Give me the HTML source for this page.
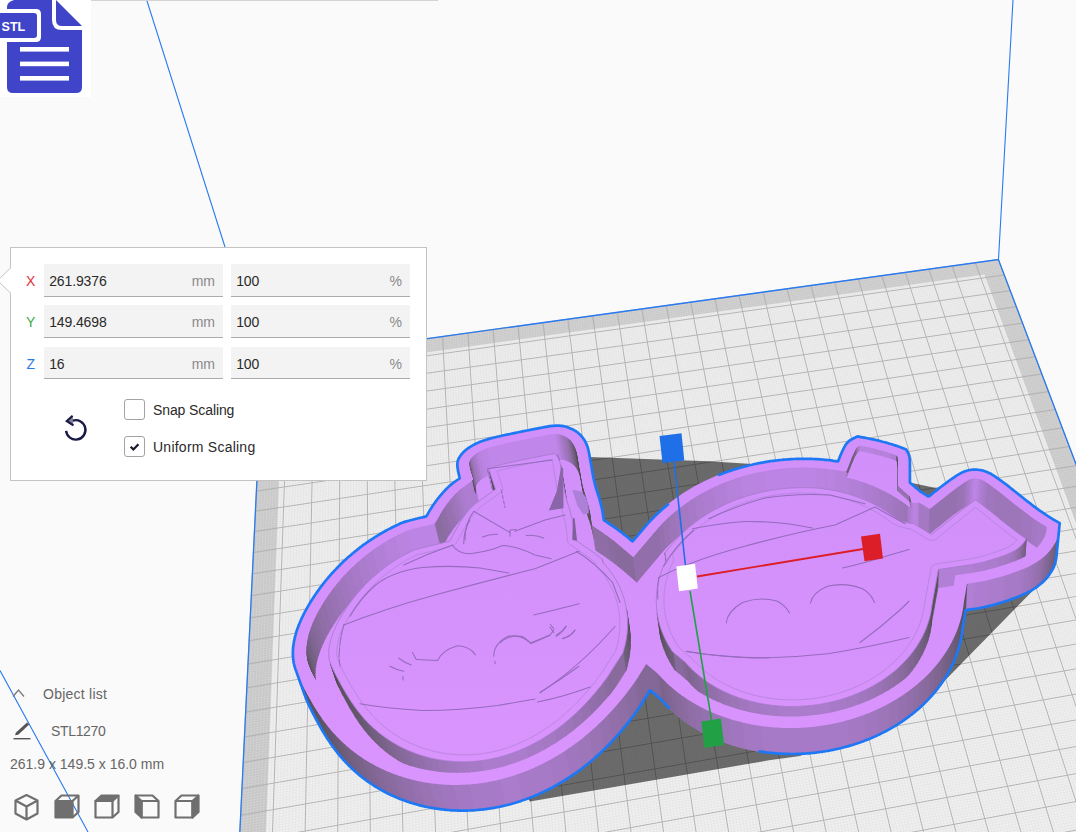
<!DOCTYPE html>
<html><head><meta charset="utf-8"><title>Cura</title>
<style>
html,body{margin:0;padding:0;}
body{width:1076px;height:832px;overflow:hidden;background:#fafafa;position:relative;font-family:"Liberation Sans",sans-serif;font-size:14px;color:#3c3c3c;}
#scene{position:absolute;left:0;top:0;}
.abs{position:absolute;}
#icon{position:absolute;left:0;top:0;width:91px;height:97px;background:#fff;}
#topline{position:absolute;left:91px;top:0;width:347px;height:1px;background:#d4d4d4;}
#panel{position:absolute;left:10px;top:247px;width:415px;height:232px;background:#fff;border:1px solid #c3c3c3;}
#parrow{position:absolute;left:2px;top:272px;width:0;height:0;}
.fld{position:absolute;height:31.6px;width:179px;background:#f3f3f3;border-bottom:1px solid #ababab;}
.fld span{position:absolute;top:0;line-height:34px;white-space:nowrap;}
.fld .v{left:5.2px;color:#2a2a2a;letter-spacing:-0.12px;}
.fld .u{right:8px;color:#8a8a8a;}
.ax{position:absolute;width:20px;text-align:center;line-height:34px;left:20.7px;}
.cb{position:absolute;left:124px;width:19px;height:19px;border:1px solid #a3a3a3;border-radius:3px;background:#fff;}
.cbl{position:absolute;left:153px;line-height:20px;white-space:nowrap;color:#2a2a2a;}
.bl{position:absolute;white-space:nowrap;color:#666;line-height:20px;}
</style></head><body>
<svg id="scene" width="1076" height="832" viewBox="0 0 1076 832">
<polygon points="262.7,361.5 998.4,259.5 1236.9,888.6 227.4,1087.8" fill="#c6c6c6"/>
<polygon points="283.0,372.5 984.5,274.4 1203.8,870.7 257.7,1055.3" fill="#f0f0f0"/>
<path d="M265.3,361.1L231.1,1087.1M267.9,360.8L234.8,1086.4M270.5,360.4L238.4,1085.7M273.1,360.1L242.1,1084.9M275.7,359.7L245.7,1084.2M278.3,359.3L249.4,1083.5M280.9,359.0L253.0,1082.8M283.5,358.6L256.7,1082.1M286.1,358.3L260.3,1081.3M291.3,357.5L267.6,1079.9M293.9,357.2L271.3,1079.2M296.5,356.8L274.9,1078.5M299.1,356.5L278.5,1077.7M301.7,356.1L282.2,1077.0M304.3,355.7L285.8,1076.3M306.9,355.4L289.4,1075.6M309.5,355.0L293.1,1074.9M312.0,354.7L296.7,1074.2M317.2,353.9L303.9,1072.7M319.8,353.6L307.6,1072.0M322.4,353.2L311.2,1071.3M325.0,352.9L314.8,1070.6M327.5,352.5L318.4,1069.9M330.1,352.1L322.0,1069.2M332.7,351.8L325.6,1068.5M335.3,351.4L329.2,1067.7M337.9,351.1L332.8,1067.0M343.0,350.4L340.0,1065.6M345.6,350.0L343.6,1064.9M348.2,349.6L347.2,1064.2M350.7,349.3L350.8,1063.5M353.3,348.9L354.4,1062.8M355.9,348.6L358.0,1062.1M358.4,348.2L361.6,1061.4M361.0,347.9L365.2,1060.6M363.6,347.5L368.8,1059.9M368.7,346.8L375.9,1058.5M371.3,346.4L379.5,1057.8M373.8,346.1L383.1,1057.1M376.4,345.7L386.6,1056.4M379.0,345.4L390.2,1055.7M381.5,345.0L393.8,1055.0M384.1,344.7L397.4,1054.3M386.6,344.3L400.9,1053.6M389.2,344.0L404.5,1052.9M394.3,343.3L411.6,1051.5M396.8,342.9L415.2,1050.8M399.4,342.5L418.7,1050.1M402.0,342.2L422.3,1049.4M404.5,341.8L425.8,1048.7M407.0,341.5L429.4,1048.0M409.6,341.1L432.9,1047.3M412.1,340.8L436.5,1046.6M414.7,340.4L440.0,1045.9M419.8,339.7L447.1,1044.5M422.3,339.4L450.6,1043.8M424.9,339.0L454.1,1043.1M427.4,338.7L457.7,1042.4M429.9,338.3L461.2,1041.7M432.5,338.0L464.7,1041.0M435.0,337.6L468.2,1040.3M437.5,337.3L471.8,1039.6M440.1,336.9L475.3,1038.9M445.1,336.2L482.3,1037.5M447.7,335.9L485.8,1036.8M450.2,335.5L489.4,1036.1M452.7,335.1L492.9,1035.4M455.3,334.8L496.4,1034.8M457.8,334.4L499.9,1034.1M460.3,334.1L503.4,1033.4M462.8,333.7L506.9,1032.7M465.4,333.4L510.4,1032.0M470.4,332.7L517.4,1030.6M472.9,332.3L520.9,1029.9M475.5,332.0L524.4,1029.2M478.0,331.7L527.9,1028.5M480.5,331.3L531.3,1027.9M483.0,331.0L534.8,1027.2M485.5,330.6L538.3,1026.5M488.0,330.3L541.8,1025.8M490.5,329.9L545.3,1025.1M495.6,329.2L552.2,1023.7M498.1,328.9L555.7,1023.0M500.6,328.5L559.2,1022.4M503.1,328.2L562.7,1021.7M505.6,327.8L566.1,1021.0M508.1,327.5L569.6,1020.3M510.6,327.1L573.0,1019.6M513.1,326.8L576.5,1018.9M515.6,326.4L580.0,1018.3M520.6,325.7L586.9,1016.9M523.1,325.4L590.3,1016.2M525.6,325.0L593.8,1015.5M528.1,324.7L597.2,1014.8M530.6,324.4L600.7,1014.2M533.1,324.0L604.1,1013.5M535.6,323.7L607.6,1012.8M538.1,323.3L611.0,1012.1M540.6,323.0L614.5,1011.5M545.6,322.3L621.3,1010.1M548.1,321.9L624.8,1009.4M550.6,321.6L628.2,1008.7M553.0,321.2L631.6,1008.1M555.5,320.9L635.1,1007.4M558.0,320.6L638.5,1006.7M560.5,320.2L641.9,1006.0M563.0,319.9L645.3,1005.4M565.5,319.5L648.7,1004.7M570.4,318.8L655.6,1003.3M572.9,318.5L659.0,1002.7M575.4,318.1L662.4,1002.0M577.9,317.8L665.8,1001.3M580.3,317.5L669.2,1000.6M582.8,317.1L672.6,1000.0M585.3,316.8L676.0,999.3M587.8,316.4L679.4,998.6M590.2,316.1L682.8,998.0M595.2,315.4L689.6,996.6M597.6,315.1L693.0,995.9M600.1,314.7L696.4,995.3M602.6,314.4L699.8,994.6M605.0,314.0L703.2,993.9M607.5,313.7L706.6,993.3M610.0,313.3L710.0,992.6M612.4,313.0L713.4,991.9M614.9,312.7L716.7,991.3M619.8,312.0L723.5,989.9M622.3,311.6L726.9,989.3M624.7,311.3L730.2,988.6M627.2,311.0L733.6,987.9M629.6,310.6L737.0,987.3M632.1,310.3L740.4,986.6M634.5,309.9L743.7,985.9M637.0,309.6L747.1,985.3M639.5,309.3L750.4,984.6M644.4,308.6L757.2,983.3M646.8,308.2L760.5,982.6M649.2,307.9L763.9,982.0M651.7,307.6L767.2,981.3M654.1,307.2L770.6,980.6M656.6,306.9L773.9,980.0M659.0,306.5L777.3,979.3M661.5,306.2L780.6,978.7M663.9,305.9L784.0,978.0M668.8,305.2L790.6,976.7M671.2,304.9L794.0,976.0M673.7,304.5L797.3,975.4M676.1,304.2L800.6,974.7M678.5,303.8L804.0,974.0M681.0,303.5L807.3,973.4M683.4,303.2L810.6,972.7M685.8,302.8L814.0,972.1M688.3,302.5L817.3,971.4M693.1,301.8L823.9,970.1M695.6,301.5L827.2,969.5M698.0,301.1L830.6,968.8M700.4,300.8L833.9,968.1M702.8,300.5L837.2,967.5M705.3,300.1L840.5,966.8M707.7,299.8L843.8,966.2M710.1,299.5L847.1,965.5M712.5,299.1L850.4,964.9M717.4,298.5L857.0,963.6M719.8,298.1L860.3,962.9M722.2,297.8L863.6,962.3M724.6,297.5L866.9,961.6M727.0,297.1L870.2,961.0M729.5,296.8L873.5,960.3M731.9,296.4L876.8,959.7M734.3,296.1L880.1,959.0M736.7,295.8L883.4,958.4M741.5,295.1L889.9,957.1M743.9,294.8L893.2,956.4M746.3,294.4L896.5,955.8M748.7,294.1L899.8,955.1M751.1,293.8L903.0,954.5M753.5,293.4L906.3,953.9M755.9,293.1L909.6,953.2M758.3,292.8L912.9,952.6M760.8,292.4L916.1,951.9M765.6,291.8L922.6,950.6M767.9,291.4L925.9,950.0M770.3,291.1L929.2,949.3M772.7,290.8L932.4,948.7M775.1,290.4L935.7,948.1M777.5,290.1L938.9,947.4M779.9,289.8L942.2,946.8M782.3,289.5L945.4,946.1M784.7,289.1L948.7,945.5M789.5,288.5L955.2,944.2M791.9,288.1L958.4,943.6M794.3,287.8L961.7,942.9M796.7,287.5L964.9,942.3M799.0,287.1L968.2,941.6M801.4,286.8L971.4,941.0M803.8,286.5L974.6,940.4M806.2,286.1L977.9,939.7M808.6,285.8L981.1,939.1M813.3,285.2L987.5,937.8M815.7,284.8L990.8,937.2M818.1,284.5L994.0,936.5M820.5,284.2L997.2,935.9M822.9,283.8L1000.4,935.3M825.2,283.5L1003.7,934.6M827.6,283.2L1006.9,934.0M830.0,282.8L1010.1,933.4M832.3,282.5L1013.3,932.7M837.1,281.9L1019.7,931.5M839.5,281.5L1022.9,930.8M841.8,281.2L1026.1,930.2M844.2,280.9L1029.3,929.6M846.6,280.5L1032.5,928.9M848.9,280.2L1035.7,928.3M851.3,279.9L1038.9,927.7M853.7,279.6L1042.1,927.0M856.0,279.2L1045.3,926.4M860.7,278.6L1051.7,925.2M863.1,278.3L1054.9,924.5M865.5,277.9L1058.1,923.9M867.8,277.6L1061.3,923.3M870.2,277.3L1064.5,922.6M872.5,276.9L1067.7,922.0M874.9,276.6L1070.8,921.4M877.2,276.3L1074.0,920.8M879.6,276.0L1077.2,920.1M884.3,275.3L1083.5,918.9M886.7,275.0L1086.7,918.2M889.0,274.7L1089.9,917.6M891.3,274.3L1093.1,917.0M893.7,274.0L1096.2,916.4M896.0,273.7L1099.4,915.7M898.4,273.4L1102.6,915.1M900.7,273.0L1105.7,914.5M903.1,272.7L1108.9,913.9M907.8,272.1L1115.2,912.6M910.1,271.7L1118.3,912.0M912.4,271.4L1121.5,911.4M914.8,271.1L1124.6,910.8M917.1,270.8L1127.8,910.1M919.5,270.4L1130.9,909.5M921.8,270.1L1134.1,908.9M924.1,269.8L1137.2,908.3M926.5,269.5L1140.4,907.7M931.1,268.8L1146.7,906.4M933.5,268.5L1149.8,905.8M935.8,268.2L1152.9,905.2M938.1,267.8L1156.1,904.6M940.5,267.5L1159.2,903.9M942.8,267.2L1162.3,903.3M945.1,266.9L1165.5,902.7M947.4,266.6L1168.6,902.1M949.8,266.2L1171.7,901.5M954.4,265.6L1178.0,900.2M956.7,265.3L1181.1,899.6M959.0,264.9L1184.2,899.0M961.4,264.6L1187.3,898.4M963.7,264.3L1190.4,897.8M966.0,264.0L1193.5,897.2M968.3,263.7L1196.6,896.6M970.6,263.3L1199.8,895.9M973.0,263.0L1202.9,895.3M977.6,262.4L1209.1,894.1M979.9,262.1L1212.2,893.5M982.2,261.7L1215.3,892.9M984.5,261.4L1218.4,892.3M986.8,261.1L1221.5,891.7M989.1,260.8L1224.6,891.0M991.4,260.5L1227.7,890.4M993.8,260.1L1230.8,889.8M996.1,259.8L1233.9,889.2M262.6,363.2L999.0,261.0M262.5,365.0L999.5,262.6M262.4,366.7L1000.1,264.1M262.3,368.4L1000.7,265.6M262.2,370.2L1001.3,267.2M262.2,371.9L1001.9,268.7M262.1,373.7L1002.5,270.3M262.0,375.4L1003.1,271.8M261.9,377.2L1003.6,273.4M261.7,380.7L1004.8,276.5M261.7,382.5L1005.4,278.1M261.6,384.2L1006.0,279.7M261.5,386.0L1006.6,281.2M261.4,387.8L1007.2,282.8M261.3,389.6L1007.8,284.4M261.2,391.4L1008.4,286.0M261.1,393.1L1009.0,287.5M261.0,394.9L1009.6,289.1M260.9,398.5L1010.8,292.3M260.8,400.3L1011.4,293.9M260.7,402.1L1012.0,295.5M260.6,403.9L1012.6,297.1M260.5,405.8L1013.2,298.7M260.4,407.6L1013.8,300.3M260.3,409.4L1014.5,301.9M260.3,411.2L1015.1,303.5M260.2,413.0L1015.7,305.1M260.0,416.7L1016.9,308.4M259.9,418.5L1017.5,310.0M259.8,420.4L1018.1,311.6M259.7,422.2L1018.8,313.2M259.6,424.1L1019.4,314.9M259.5,425.9L1020.0,316.5M259.5,427.8L1020.6,318.1M259.4,429.6L1021.2,319.8M259.3,431.5L1021.9,321.4M259.1,435.2L1023.1,324.7M259.0,437.1L1023.7,326.4M258.9,439.0L1024.4,328.0M258.8,440.9L1025.0,329.7M258.7,442.7L1025.6,331.4M258.6,444.6L1026.3,333.0M258.5,446.5L1026.9,334.7M258.5,448.4L1027.5,336.4M258.4,450.3L1028.2,338.0M258.2,454.1L1029.4,341.4M258.1,456.0L1030.1,343.1M258.0,458.0L1030.7,344.8M257.9,459.9L1031.4,346.5M257.8,461.8L1032.0,348.2M257.7,463.7L1032.6,349.9M257.6,465.7L1033.3,351.6M257.5,467.6L1033.9,353.3M257.4,469.5L1034.6,355.0M257.2,473.4L1035.9,358.4M257.1,475.4L1036.5,360.1M257.0,477.3L1037.2,361.8M257.0,479.3L1037.8,363.6M256.9,481.2L1038.5,365.3M256.8,483.2L1039.1,367.0M256.7,485.2L1039.8,368.7M256.6,487.2L1040.5,370.5M256.5,489.1L1041.1,372.2M256.3,493.1L1042.4,375.7M256.2,495.1L1043.1,377.5M256.1,497.1L1043.8,379.2M256.0,499.1L1044.4,381.0M255.9,501.1L1045.1,382.7M255.8,503.1L1045.8,384.5M255.7,505.1L1046.4,386.3M255.6,507.1L1047.1,388.0M255.5,509.1L1047.8,389.8M255.3,513.2L1049.1,393.4M255.2,515.2L1049.8,395.1M255.1,517.3L1050.5,396.9M255.0,519.3L1051.2,398.7M254.9,521.3L1051.9,400.5M254.8,523.4L1052.5,402.3M254.7,525.4L1053.2,404.1M254.6,527.5L1053.9,405.9M254.5,529.6L1054.6,407.7M254.3,533.7L1056.0,411.4M254.2,535.8L1056.7,413.2M254.1,537.8L1057.3,415.0M254.0,539.9L1058.0,416.8M253.9,542.0L1058.7,418.7M253.8,544.1L1059.4,420.5M253.7,546.2L1060.1,422.3M253.6,548.3L1060.8,424.2M253.5,550.4L1061.5,426.0M253.3,554.6L1062.9,429.7M253.2,556.8L1063.6,431.6M253.1,558.9L1064.3,433.4M253.0,561.0L1065.0,435.3M252.9,563.1L1065.7,437.2M252.8,565.3L1066.5,439.0M252.7,567.4L1067.2,440.9M252.6,569.6L1067.9,442.8M252.5,571.7L1068.6,444.7M252.3,576.0L1070.0,448.4M252.2,578.2L1070.7,450.3M252.1,580.4L1071.5,452.2M251.9,582.5L1072.2,454.1M251.8,584.7L1072.9,456.0M251.7,586.9L1073.6,457.9M251.6,589.1L1074.3,459.8M251.5,591.3L1075.1,461.8M251.4,593.5L1075.8,463.7M251.2,597.9L1077.3,467.5M251.1,600.1L1078.0,469.5M251.0,602.3L1078.7,471.4M250.9,604.5L1079.5,473.3M250.8,606.7L1080.2,475.3M250.7,609.0L1080.9,477.2M250.6,611.2L1081.7,479.2M250.4,613.4L1082.4,481.1M250.3,615.7L1083.2,483.1M250.1,620.2L1084.6,487.0M250.0,622.5L1085.4,489.0M249.9,624.7L1086.1,491.0M249.8,627.0L1086.9,492.9M249.7,629.3L1087.6,494.9M249.6,631.5L1088.4,496.9M249.5,633.8L1089.2,498.9M249.3,636.1L1089.9,500.9M249.2,638.4L1090.7,502.9M249.0,643.0L1092.2,506.9M248.9,645.3L1093.0,508.9M248.8,647.6L1093.7,510.9M248.7,650.0L1094.5,512.9M248.6,652.3L1095.2,515.0M248.4,654.6L1096.0,517.0M248.3,657.0L1096.8,519.0M248.2,659.3L1097.6,521.1M248.1,661.6L1098.3,523.1M247.9,666.3L1099.9,527.2M247.8,668.7L1100.7,529.2M247.6,671.1L1101.4,531.3M247.5,673.4L1102.2,533.4M247.4,675.8L1103.0,535.4M247.3,678.2L1103.8,537.5M247.2,680.6L1104.6,539.6M247.1,683.0L1105.4,541.6M247.0,685.4L1106.2,543.7M246.7,690.2L1107.7,547.9M246.6,692.6L1108.5,550.0M246.5,695.0L1109.3,552.1M246.4,697.5L1110.1,554.2M246.3,699.9L1110.9,556.3M246.1,702.3L1111.7,558.4M246.0,704.8L1112.5,560.5M245.9,707.2L1113.3,562.7M245.8,709.7L1114.1,564.8M245.5,714.6L1115.8,569.1M245.4,717.1L1116.6,571.2M245.3,719.5L1117.4,573.4M245.2,722.0L1118.2,575.5M245.1,724.5L1119.0,577.7M244.9,727.0L1119.8,579.8M244.8,729.5L1120.7,582.0M244.7,732.0L1121.5,584.1M244.6,734.5L1122.3,586.3M244.3,739.6L1124.0,590.7M244.2,742.1L1124.8,592.9M244.1,744.6L1125.6,595.1M244.0,747.2L1126.5,597.3M243.8,749.7L1127.3,599.5M243.7,752.3L1128.1,601.7M243.6,754.8L1129.0,603.9M243.5,757.4L1129.8,606.1M243.3,759.9L1130.6,608.3M243.1,765.1L1132.3,612.8M243.0,767.7L1133.2,615.0M242.8,770.3L1134.0,617.2M242.7,772.9L1134.9,619.5M242.6,775.5L1135.7,621.7M242.5,778.1L1136.6,624.0M242.3,780.7L1137.4,626.2M242.2,783.3L1138.3,628.5M242.1,786.0L1139.2,630.8M241.8,791.2L1140.9,635.3M241.7,793.9L1141.8,637.6M241.6,796.6L1142.6,639.9M241.4,799.2L1143.5,642.2M241.3,801.9L1144.4,644.5M241.2,804.6L1145.2,646.8M241.0,807.2L1146.1,649.1M240.9,809.9L1147.0,651.4M240.8,812.6L1147.9,653.7M240.5,818.0L1149.6,658.4M240.4,820.7L1150.5,660.7M240.3,823.4L1151.4,663.1M240.1,826.2L1152.3,665.4M240.0,828.9L1153.2,667.8M239.9,831.6L1154.1,670.1M239.7,834.4L1155.0,672.5M239.6,837.1L1155.9,674.8M239.5,839.9L1156.8,677.2M239.2,845.4L1158.6,682.0M239.1,848.2L1159.5,684.4M238.9,851.0L1160.4,686.7M238.8,853.8L1161.3,689.1M238.6,856.6L1162.2,691.5M238.5,859.4L1163.1,694.0M238.4,862.2L1164.0,696.4M238.2,865.0L1165.0,698.8M238.1,867.9L1165.9,701.2M237.8,873.5L1167.7,706.1M237.7,876.4L1168.7,708.5M237.5,879.2L1169.6,711.0M237.4,882.1L1170.5,713.4M237.3,885.0L1171.4,715.9M237.1,887.8L1172.4,718.3M237.0,890.7L1173.3,720.8M236.9,893.6L1174.3,723.3M236.7,896.5L1175.2,725.8M236.4,902.3L1177.1,730.7M236.3,905.2L1178.0,733.2M236.1,908.2L1179.0,735.7M236.0,911.1L1179.9,738.3M235.9,914.0L1180.9,740.8M235.7,917.0L1181.8,743.3M235.6,919.9L1182.8,745.8M235.4,922.9L1183.8,748.4M235.3,925.9L1184.7,750.9M235.0,931.8L1186.7,756.0M234.9,934.8L1187.6,758.5M234.7,937.8L1188.6,761.1M234.6,940.8L1189.6,763.7M234.4,943.8L1190.5,766.2M234.3,946.9L1191.5,768.8M234.1,949.9L1192.5,771.4M234.0,952.9L1193.5,774.0M233.8,956.0L1194.5,776.6M233.5,962.1L1196.4,781.8M233.4,965.2L1197.4,784.4M233.2,968.2L1198.4,787.0M233.1,971.3L1199.4,789.7M232.9,974.4L1200.4,792.3M232.8,977.5L1201.4,795.0M232.6,980.6L1202.4,797.6M232.5,983.7L1203.4,800.3M232.3,986.9L1204.4,802.9M232.0,993.1L1206.5,808.3M231.9,996.3L1207.5,810.9M231.7,999.4L1208.5,813.6M231.6,1002.6L1209.5,816.3M231.4,1005.8L1210.6,819.0M231.3,1008.9L1211.6,821.7M231.1,1012.1L1212.6,824.4M230.9,1015.3L1213.6,827.1M230.8,1018.5L1214.7,829.9M230.5,1025.0L1216.7,835.3M230.3,1028.2L1217.8,838.1M230.2,1031.4L1218.8,840.8M230.0,1034.7L1219.9,843.6M229.8,1037.9L1220.9,846.3M229.7,1041.2L1222.0,849.1M229.5,1044.5L1223.0,851.9M229.4,1047.8L1224.1,854.7M229.2,1051.1L1225.1,857.5M228.9,1057.7L1227.3,863.1M228.7,1061.0L1228.3,865.9M228.6,1064.3L1229.4,868.7M228.4,1067.6L1230.5,871.5M228.2,1071.0L1231.5,874.3M228.1,1074.3L1232.6,877.2M227.9,1077.7L1233.7,880.0M227.8,1081.1L1234.8,882.9M227.6,1084.4L1235.9,885.7" stroke="#dedede" stroke-width="0.7" fill="none" stroke-opacity="0.55"/>
<path d="M262.7,361.5L227.4,1087.8M288.7,357.9L264.0,1080.6M314.6,354.3L300.3,1073.4M340.4,350.7L336.4,1066.3M366.1,347.2L372.3,1059.2M391.7,343.6L408.0,1052.2M417.2,340.1L443.5,1045.2M442.6,336.6L478.8,1038.2M467.9,333.0L513.9,1031.3M493.1,329.6L548.8,1024.4M518.1,326.1L583.4,1017.6M543.1,322.6L617.9,1010.8M567.9,319.2L652.2,1004.0M592.7,315.7L686.2,997.3M617.4,312.3L720.1,990.6M641.9,308.9L753.8,984.0M666.4,305.5L787.3,977.3M690.7,302.2L820.6,970.8M714.9,298.8L853.7,964.2M739.1,295.4L886.6,957.7M763.2,292.1L919.4,951.3M787.1,288.8L951.9,944.8M811.0,285.5L984.3,938.5M834.7,282.2L1016.5,932.1M858.4,278.9L1048.5,925.8M881.9,275.6L1080.4,919.5M905.4,272.4L1112.0,913.3M928.8,269.1L1143.5,907.0M952.1,265.9L1174.8,900.9M975.3,262.7L1206.0,894.7M998.4,259.5L1236.9,888.6M262.7,361.5L998.4,259.5M261.8,378.9L1004.2,275.0M261.0,396.7L1010.2,290.7M260.1,414.9L1016.3,306.7M259.2,433.4L1022.5,323.1M258.3,452.2L1028.8,339.7M257.3,471.5L1035.2,356.7M256.4,491.1L1041.8,374.0M255.4,511.2L1048.5,391.6M254.4,531.6L1055.3,409.5M253.4,552.5L1062.2,427.9M252.4,573.9L1069.3,446.5M251.3,595.7L1076.5,465.6M250.2,617.9L1083.9,485.0M249.1,640.7L1091.4,504.9M248.0,664.0L1099.1,525.1M246.8,687.8L1106.9,545.8M245.7,712.1L1115.0,566.9M244.4,737.0L1123.1,588.5M243.2,762.5L1131.5,610.5M241.9,788.6L1140.0,633.0M240.6,815.3L1148.8,656.1M239.3,842.7L1157.7,679.6M238.0,870.7L1166.8,703.6M236.6,899.4L1176.1,728.3M235.1,928.8L1185.7,753.4M233.7,959.0L1195.5,779.2M232.2,990.0L1205.5,805.6M230.6,1021.8L1215.7,832.6M229.1,1054.4L1226.2,860.3M227.4,1087.8L1236.9,888.6" stroke="#b3b3b3" stroke-width="1" fill="none"/>
<polygon points="262.7,361.5 998.4,259.5 1236.9,888.6 227.4,1087.8" fill="none" stroke="#2a7af0" stroke-width="1.3"/>
<path d="M146.7,0L225,247 M998.5,259.5L1013,0 M0,670.5L88,832" stroke="#2a7af0" stroke-width="1.1" fill="none"/>
<polygon points="589,457 709,461.3 850,470 938.2,488.5 1000,540 1036.7,586.7 940,685.5 800,756 769,760.3 530,801.5 450,700 589,600" fill="#000" fill-opacity="0.55"/>
<linearGradient id="tg" gradientUnits="userSpaceOnUse" x1="0" y1="425" x2="0" y2="790"><stop offset="0" stop-color="#d08ffa"/><stop offset="1" stop-color="#da94fd"/></linearGradient>
<path d="M310.2,601.8L310.2,601.8L309.5,603.0L309.5,603.0L308.7,604.2L308.7,604.2L308.0,605.5L308.0,605.5L307.3,606.7L307.3,606.7L306.6,607.9L306.6,607.9L305.9,609.1L305.9,609.2L305.2,610.4L305.2,610.4L304.6,611.6L304.6,611.6L303.9,612.9L303.9,612.9L303.3,614.1L303.3,614.1L302.7,615.4L302.7,615.4L302.0,616.7L302.0,616.7L301.4,617.9L301.4,617.9L300.9,619.2L300.9,619.2L300.3,620.5L300.3,620.5L299.7,621.8L299.7,621.8L299.2,623.0L299.2,623.0L298.7,624.3L298.7,624.3L298.2,625.6L298.2,625.6L297.7,626.9L297.7,626.9L297.2,628.2L297.2,628.2L296.8,629.5L296.8,629.5L296.3,630.8L296.3,630.8L295.9,632.1L295.9,632.1L295.5,633.4L295.5,633.4L295.2,634.7L295.2,634.7L294.8,636.0L294.8,636.0L294.5,637.3L294.5,637.3L294.2,638.7L294.2,638.7L293.9,640.0L293.9,640.0L293.6,641.3L293.6,641.3L293.4,642.6L293.4,642.6L293.2,643.9L293.2,643.9L293.0,645.2L293.0,645.2L292.8,646.5L292.8,646.5L292.7,647.9L292.7,647.9L292.6,649.2L292.6,649.2L292.5,650.5L292.5,650.5L292.5,651.8L292.5,651.8L292.5,653.1L292.5,653.1L292.5,654.4L292.5,654.4L292.5,655.7L292.5,655.7L292.6,657.0L292.6,657.0L292.7,658.2L292.7,658.3L292.8,659.5L292.8,659.5L293.0,660.8L293.0,660.8L293.2,662.1L293.2,662.1L293.5,663.3L293.5,663.3L293.7,664.6L293.7,664.6L294.1,665.8L294.1,665.8L294.4,667.0L294.4,667.1L294.8,668.3L294.8,668.3L295.2,669.5L295.2,669.5L295.6,670.7L295.6,670.7L305.0,697.0L305.0,697.0L305.5,698.2L305.5,698.2L305.9,699.4L305.9,699.4L306.4,700.6L306.4,700.6L306.9,701.7L306.9,701.7L307.4,702.9L307.4,702.9L308.0,704.0L308.0,704.0L308.5,705.2L308.5,705.2L309.0,706.3L309.0,706.3L309.6,707.5L309.6,707.5L310.1,708.6L310.1,708.6L310.7,709.7L310.7,709.7L311.3,710.8L311.3,710.8L311.8,712.0L311.8,712.0L312.4,713.1L312.4,713.1L313.0,714.2L313.0,714.2L313.5,715.3L313.5,715.3L314.1,716.4L314.1,716.4L314.7,717.5L314.7,717.5L315.3,718.6L315.3,718.6L315.8,719.7L315.8,719.7L316.4,720.8L316.4,720.8L317.0,721.9L317.0,721.9L317.6,723.0L317.6,723.0L318.2,724.0L318.2,724.0L318.8,725.1L318.8,725.1L319.4,726.2L319.4,726.2L320.0,727.3L320.0,727.3L320.6,728.4L320.6,728.4L321.2,729.4L321.3,729.4L321.9,730.5L321.9,730.5L322.5,731.6L322.5,731.6L323.1,732.6L323.1,732.6L323.8,733.7L323.8,733.7L324.4,734.7L324.4,734.7L325.1,735.8L325.1,735.8L325.7,736.8L325.7,736.9L326.4,737.9L326.4,737.9L327.1,738.9L327.1,738.9L327.8,740.0L327.8,740.0L328.4,741.0L328.4,741.0L329.1,742.1L329.1,742.1L329.8,743.1L329.8,743.1L330.5,744.1L330.6,744.1L331.3,745.2L331.3,745.2L332.0,746.2L332.0,746.2L332.7,747.2L332.7,747.2L333.5,748.2L333.5,748.2L334.2,749.2L334.2,749.2L335.0,750.2L335.0,750.2L335.8,751.2L335.8,751.2L336.5,752.2L336.5,752.2L337.3,753.2L337.3,753.2L338.1,754.2L338.1,754.2L338.9,755.2L338.9,755.2L339.8,756.2L339.8,756.2L340.6,757.2L340.6,757.2L341.4,758.1L341.4,758.1L342.3,759.1L342.3,759.1L343.1,760.1L343.1,760.1L344.0,761.0L344.0,761.0L344.9,762.0L344.9,762.0L345.8,762.9L345.8,762.9L346.7,763.9L346.7,763.9L347.6,764.8L347.6,764.8L348.5,765.7L348.5,765.7L349.5,766.7L349.5,766.7L350.4,767.6L350.4,767.6L351.4,768.5L351.4,768.5L352.3,769.4L352.3,769.4L353.3,770.3L353.3,770.3L354.3,771.2L354.3,771.2L355.3,772.1L355.3,772.1L356.3,773.0L356.3,773.0L357.3,773.8L357.3,773.8L358.3,774.7L358.3,774.7L359.4,775.6L359.4,775.6L360.4,776.4L360.4,776.4L361.5,777.3L361.5,777.3L362.6,778.1L362.6,778.1L363.7,778.9L363.7,778.9L364.8,779.8L364.8,779.8L365.9,780.6L365.9,780.6L367.0,781.4L367.0,781.4L368.1,782.2L368.1,782.2L369.3,783.0L369.3,783.0L370.4,783.8L370.4,783.8L371.6,784.6L371.6,784.6L372.8,785.3L372.8,785.3L373.9,786.1L373.9,786.1L375.1,786.8L375.1,786.8L376.3,787.6L376.3,787.6L377.6,788.3L377.6,788.3L378.8,789.1L378.8,789.1L380.0,789.8L380.0,789.8L381.3,790.5L381.3,790.5L382.6,791.2L382.6,791.2L383.8,791.9L383.8,791.9L385.1,792.5L385.1,792.5L386.4,793.2L386.4,793.2L387.7,793.9L387.7,793.9L389.0,794.5L389.0,794.5L390.4,795.2L390.4,795.2L391.7,795.8L391.7,795.8L393.1,796.4L393.1,796.4L394.4,797.0L394.4,797.0L395.8,797.6L395.8,797.6L397.2,798.2L397.2,798.2L398.6,798.8L398.6,798.8L400.0,799.3L400.0,799.3L401.4,799.9L401.4,799.9L402.8,800.4L402.8,800.4L404.3,801.0L404.3,801.0L405.7,801.5L405.7,801.5L407.1,802.0L407.2,802.0L408.6,802.5L408.6,802.5L410.1,802.9L410.1,802.9L411.6,803.4L411.6,803.4L413.1,803.9L413.1,803.9L414.6,804.3L414.6,804.3L416.1,804.7L416.1,804.7L417.6,805.2L417.6,805.2L419.1,805.6L419.1,805.6L420.7,805.9L420.7,805.9L422.2,806.3L422.2,806.3L423.8,806.7L423.8,806.7L425.3,807.0L425.3,807.0L426.9,807.4L426.9,807.4L428.5,807.7L428.5,807.7L430.1,808.0L430.1,808.0L431.7,808.3L431.7,808.3L433.3,808.6L433.3,808.6L434.9,808.8L434.9,808.8L436.5,809.1L436.5,809.1L438.1,809.3L438.1,809.3L439.7,809.5L439.7,809.5L441.4,809.7L441.4,809.7L443.0,809.9L443.0,809.9L444.7,810.1L444.7,810.1L446.3,810.3L446.3,810.3L448.0,810.4L448.0,810.4L449.6,810.5L449.6,810.5L451.3,810.7L451.3,810.7L453.0,810.8L453.0,810.8L454.7,810.8L454.7,810.8L456.4,810.9L456.4,810.9L458.1,811.0L458.1,811.0L459.7,811.0L459.8,811.0L461.4,811.0L461.4,811.0L463.1,811.0L463.2,811.0L464.9,811.0L464.9,811.0L466.6,811.0L466.6,811.0L468.3,810.9L468.3,810.9L470.0,810.9L470.0,810.9L471.7,810.8L471.7,810.8L473.4,810.7L473.4,810.7L475.2,810.6L475.2,810.6L476.9,810.4L476.9,810.4L478.6,810.3L478.6,810.3L480.3,810.1L480.3,810.1L482.0,810.0L482.1,810.0L483.8,809.8L483.8,809.8L485.5,809.6L485.5,809.6L487.2,809.3L487.2,809.3L489.0,809.1L489.0,809.1L490.7,808.8L490.7,808.8L492.4,808.5L492.4,808.5L494.1,808.2L494.1,808.2L495.8,807.9L495.9,807.9L497.6,807.6L497.6,807.6L499.3,807.3L499.3,807.3L501.0,806.9L501.0,806.9L502.7,806.5L502.7,806.5L504.4,806.1L504.4,806.1L506.1,805.7L506.1,805.7L507.8,805.3L507.8,805.3L509.5,804.8L509.5,804.8L511.2,804.4L511.2,804.4L512.9,803.9L512.9,803.9L514.6,803.4L514.6,803.4L516.3,802.9L516.3,802.9L517.9,802.4L517.9,802.4L519.6,801.8L519.6,801.8L521.3,801.3L521.3,801.3L522.9,800.7L522.9,800.7L524.6,800.1L524.6,800.1L526.2,799.6L526.2,799.6L527.9,798.9L527.9,798.9L529.5,798.3L529.5,798.3L531.1,797.7L531.1,797.7L532.7,797.0L532.7,797.0L534.3,796.4L534.3,796.4L535.9,795.7L535.9,795.7L537.5,795.0L537.5,795.0L539.1,794.3L539.1,794.3L540.7,793.6L540.7,793.6L542.3,792.9L542.3,792.9L543.8,792.1L543.8,792.1L545.4,791.4L545.4,791.4L546.9,790.6L546.9,790.6L548.5,789.9L548.5,789.9L550.0,789.1L550.0,789.1L551.5,788.3L551.5,788.3L553.0,787.5L553.0,787.5L554.5,786.7L554.5,786.7L556.0,785.9L556.0,785.9L557.5,785.0L557.5,785.0L558.9,784.2L558.9,784.2L560.4,783.3L560.4,783.3L561.8,782.5L561.8,782.5L563.3,781.6L563.3,781.6L564.7,780.7L564.7,780.7L566.1,779.8L566.1,779.8L567.5,779.0L567.5,779.0L568.9,778.0L568.9,778.0L570.3,777.1L570.3,777.1L571.7,776.2L571.7,776.2L573.1,775.3L573.1,775.3L574.4,774.4L574.4,774.4L575.8,773.4L575.8,773.4L577.1,772.5L577.1,772.5L578.4,771.5L578.4,771.5L579.8,770.5L579.8,770.5L581.1,769.6L581.1,769.6L582.4,768.6L582.4,768.6L583.6,767.6L583.7,767.6L584.9,766.6L584.9,766.6L586.2,765.6L586.2,765.6L587.4,764.6L587.4,764.6L588.7,763.6L588.7,763.6L589.9,762.6L589.9,762.6L591.1,761.6L591.1,761.6L592.4,760.5L592.4,760.5L593.6,759.5L593.6,759.5L594.8,758.5L594.8,758.5L595.9,757.4L595.9,757.4L597.1,756.4L597.1,756.4L598.3,755.4L598.3,755.3L599.4,754.3L599.4,754.3L600.6,753.2L600.6,753.2L601.7,752.2L601.7,752.2L602.8,751.1L602.8,751.1L603.9,750.0L603.9,750.0L605.0,749.0L605.0,749.0L606.1,747.9L606.1,747.9L607.2,746.8L607.2,746.8L608.3,745.7L608.3,745.7L609.3,744.6L609.3,744.6L610.4,743.5L610.4,743.5L611.4,742.5L611.4,742.5L612.5,741.4L612.5,741.4L613.5,740.3L613.5,740.3L614.5,739.1L614.5,739.1L615.5,738.0L615.5,738.0L616.5,736.9L616.5,736.9L617.5,735.8L617.5,735.8L618.5,734.7L618.5,734.7L619.5,733.6L619.5,733.6L620.5,732.5L620.5,732.5L621.4,731.3L621.4,731.3L622.4,730.2L622.4,730.2L623.3,729.1L623.3,729.1L624.2,728.0L624.2,728.0L625.2,726.8L625.2,726.8L626.1,725.7L626.1,725.7L627.0,724.6L627.0,724.6L627.9,723.4L627.9,723.4L628.8,722.3L628.8,722.3L629.7,721.1L629.7,721.1L630.6,720.0L630.6,720.0L631.5,718.8L631.5,718.8L632.3,717.7L632.3,717.7L633.2,716.5L633.2,716.5L634.0,715.4L634.0,715.4L634.9,714.2L634.9,714.2L635.7,713.1L635.7,713.1L636.6,711.9L636.6,711.9L637.4,710.8L637.4,710.8L638.2,709.6L638.2,709.6L639.1,708.4L639.1,708.4L640.3,706.5L640.3,706.5L642.0,703.9L642.0,703.9L644.7,699.5L644.7,699.5L647.5,695.0L650.1,690.8L652.9,693.1L656.1,695.7L659.1,698.3L660.9,699.9L662.2,701.2L663.1,702.2L663.1,702.2L664.0,703.2L664.0,703.2L664.9,704.1L664.9,704.2L665.8,705.1L665.8,705.1L666.7,706.1L666.7,706.1L667.6,707.0L667.6,707.0L668.6,708.0L668.6,708.0L669.5,708.9L669.5,708.9L670.5,709.8L670.5,709.8L671.5,710.8L671.5,710.8L672.5,711.7L672.5,711.7L673.5,712.6L673.5,712.6L674.5,713.5L674.5,713.5L675.5,714.4L675.5,714.4L676.6,715.3L676.6,715.3L677.6,716.2L677.6,716.2L678.7,717.0L678.7,717.0L679.8,717.9L679.8,717.9L680.9,718.8L680.9,718.8L681.9,719.6L682.0,719.6L683.1,720.5L683.1,720.5L684.2,721.3L684.2,721.3L685.3,722.1L685.3,722.1L686.5,722.9L686.5,722.9L687.6,723.7L687.6,723.7L688.8,724.5L688.8,724.5L689.9,725.3L690.0,725.3L691.1,726.1L691.1,726.1L692.3,726.9L692.3,726.9L693.5,727.6L693.5,727.6L694.8,728.4L694.8,728.4L696.0,729.1L696.0,729.1L697.2,729.9L697.2,729.9L698.5,730.6L698.5,730.6L699.7,731.3L699.7,731.3L701.0,732.0L701.0,732.0L702.3,732.7L702.3,732.7L703.6,733.4L703.6,733.4L704.9,734.1L704.9,734.1L706.2,734.7L706.2,734.7L707.5,735.4L707.5,735.4L708.8,736.1L708.8,736.1L710.1,736.7L710.1,736.7L711.5,737.3L711.5,737.3L712.8,737.9L712.8,737.9L714.2,738.5L714.2,738.5L715.5,739.1L715.5,739.1L716.9,739.7L716.9,739.7L718.3,740.3L718.3,740.3L719.7,740.9L719.7,740.9L721.1,741.4L721.1,741.4L722.5,742.0L722.5,742.0L723.9,742.5L723.9,742.5L725.3,743.0L725.3,743.0L726.8,743.5L726.8,743.5L728.2,744.0L728.2,744.0L729.6,744.5L729.7,744.5L731.1,745.0L731.1,745.0L732.6,745.4L732.6,745.5L734.0,745.9L734.0,745.9L735.5,746.3L735.5,746.3L737.0,746.8L737.0,746.8L738.5,747.2L738.5,747.2L739.9,747.6L739.9,747.6L741.4,748.0L741.4,748.0L742.9,748.4L742.9,748.4L744.5,748.8L744.5,748.8L746.0,749.1L746.0,749.1L747.5,749.5L747.5,749.5L749.0,749.8L749.0,749.8L750.5,750.1L750.5,750.1L752.1,750.5L752.1,750.5L753.6,750.8L753.6,750.8L755.2,751.1L755.2,751.1L756.7,751.3L756.7,751.3L758.3,751.6L758.3,751.6L759.8,751.9L759.8,751.9L761.4,752.1L761.4,752.1L762.9,752.3L762.9,752.3L764.5,752.5L764.5,752.5L766.1,752.8L766.1,752.8L767.6,752.9L767.6,752.9L769.2,753.1L769.2,753.1L770.8,753.3L770.8,753.3L772.4,753.5L772.4,753.5L774.0,753.6L774.0,753.6L775.6,753.7L775.6,753.7L777.2,753.9L777.2,753.9L778.8,754.0L778.8,754.0L780.3,754.1L780.4,754.1L781.9,754.1L781.9,754.1L783.5,754.2L783.5,754.2L785.1,754.3L785.2,754.3L786.8,754.3L786.8,754.3L788.4,754.3L788.4,754.3L790.0,754.4L790.0,754.4L791.6,754.4L791.6,754.4L793.2,754.4L793.2,754.4L794.8,754.4L794.8,754.4L796.4,754.3L796.4,754.3L798.0,754.3L798.0,754.3L799.6,754.2L799.6,754.2L801.2,754.2L801.2,754.2L802.8,754.1L802.8,754.1L804.4,754.0L804.4,754.0L806.0,753.9L806.0,753.9L807.6,753.8L807.6,753.8L809.3,753.6L809.3,753.6L810.9,753.5L810.9,753.5L812.5,753.4L812.5,753.4L814.1,753.2L814.1,753.2L815.7,753.0L815.7,753.0L817.3,752.8L817.3,752.8L818.9,752.6L818.9,752.6L820.5,752.4L820.5,752.4L822.1,752.2L822.1,752.2L823.6,751.9L823.6,751.9L825.2,751.7L825.2,751.7L826.8,751.4L826.8,751.4L828.4,751.1L828.4,751.1L830.0,750.9L830.0,750.9L831.6,750.6L831.6,750.6L833.1,750.2L833.1,750.2L834.7,749.9L834.7,749.9L836.3,749.6L836.3,749.6L837.8,749.2L837.8,749.2L839.4,748.9L839.4,748.9L840.9,748.5L840.9,748.5L842.5,748.1L842.5,748.1L844.0,747.7L844.0,747.7L845.6,747.3L845.6,747.3L847.1,746.9L847.1,746.9L848.7,746.5L848.7,746.5L850.2,746.0L850.2,746.0L851.7,745.6L851.7,745.6L853.2,745.1L853.2,745.1L854.7,744.6L854.7,744.6L856.2,744.1L856.2,744.1L857.7,743.6L857.7,743.6L859.2,743.1L859.2,743.1L860.7,742.6L860.7,742.6L862.2,742.1L862.2,742.1L863.7,741.5L863.7,741.5L865.1,741.0L865.1,741.0L866.6,740.4L866.6,740.4L868.1,739.8L868.1,739.8L869.5,739.2L869.5,739.2L871.0,738.6L871.0,738.6L872.4,738.0L872.4,738.0L873.8,737.4L873.8,737.4L875.2,736.8L875.2,736.8L876.6,736.1L876.6,736.1L878.0,735.5L878.1,735.5L879.4,734.8L879.4,734.8L880.8,734.2L880.8,734.2L882.2,733.5L882.2,733.5L883.6,732.8L883.6,732.8L884.9,732.1L884.9,732.1L886.3,731.4L886.3,731.4L887.6,730.7L887.7,730.7L889.0,729.9L889.0,729.9L890.3,729.2L890.3,729.2L891.6,728.4L891.6,728.4L892.9,727.7L892.9,727.7L894.2,726.9L894.2,726.9L895.5,726.1L895.5,726.1L896.8,725.3L896.8,725.3L898.1,724.5L898.1,724.5L899.4,723.7L899.4,723.7L900.6,722.9L900.6,722.9L901.9,722.1L901.9,722.1L903.1,721.2L903.1,721.2L904.3,720.4L904.3,720.4L905.5,719.6L905.5,719.6L906.7,718.7L906.7,718.7L907.9,717.8L907.9,717.8L909.1,717.0L909.1,717.0L910.3,716.1L910.3,716.1L911.4,715.2L911.4,715.2L912.6,714.3L912.6,714.3L913.7,713.4L913.7,713.4L914.8,712.4L914.8,712.4L916.0,711.5L916.0,711.5L917.1,710.6L917.1,710.6L918.1,709.7L918.2,709.7L919.2,708.7L919.2,708.7L920.3,707.8L920.3,707.8L921.4,706.8L921.4,706.8L922.4,705.8L922.4,705.8L923.4,704.8L923.4,704.8L924.5,703.9L924.5,703.9L925.5,702.9L925.5,702.9L926.5,701.9L926.5,701.9L927.5,700.9L927.5,700.9L928.4,699.9L928.4,699.9L929.4,698.9L929.4,698.8L930.3,697.8L930.3,697.8L931.3,696.8L931.3,696.8L932.2,695.8L932.2,695.8L933.1,694.7L933.1,694.7L934.0,693.7L934.0,693.7L934.9,692.6L934.9,692.6L935.8,691.6L935.8,691.6L936.6,690.5L936.6,690.5L937.5,689.4L937.5,689.4L938.3,688.4L938.3,688.4L939.1,687.3L939.1,687.3L940.0,686.2L940.0,686.2L940.7,685.1L940.7,685.1L941.5,684.0L941.5,684.0L942.3,682.9L942.3,682.9L943.1,681.8L943.1,681.8L943.8,680.7L943.8,680.7L944.5,679.6L944.5,679.6L945.2,678.5L945.2,678.5L945.9,677.4L946.0,677.4L946.6,676.2L946.6,676.2L947.3,675.1L947.3,675.1L948.0,674.0L948.0,674.0L948.6,672.8L948.6,672.8L949.3,671.7L949.3,671.7L949.9,670.6L949.9,670.6L950.5,669.4L950.5,669.4L951.1,668.3L951.1,668.3L951.7,667.1L951.7,667.1L952.2,666.0L952.2,666.0L952.8,664.8L952.8,664.8L953.3,663.6L953.3,663.6L953.8,662.5L953.9,662.5L954.4,661.3L954.4,661.3L954.9,660.1L954.9,660.1L955.3,659.0L955.3,659.0L955.8,657.8L955.8,657.8L956.3,656.6L956.3,656.6L956.7,655.4L956.7,655.4L957.1,654.3L957.1,654.3L957.5,653.1L957.5,653.1L957.9,651.9L957.9,651.9L958.3,650.7L958.3,650.7L958.7,649.5L958.7,649.5L959.1,648.3L959.1,648.3L959.4,647.1L959.4,647.1L959.7,645.9L959.7,645.9L960.1,644.8L960.1,644.8L960.4,643.6L960.4,643.6L960.6,642.4L960.6,642.4L960.9,641.2L960.9,641.2L961.2,640.0L961.2,640.0L961.4,638.8L961.4,638.8L961.7,637.6L961.7,637.6L961.9,636.4L961.9,636.4L962.1,635.2L962.1,635.2L962.3,634.0L962.3,634.0L962.4,632.8L962.4,632.8L962.6,631.6L962.6,631.6L962.7,630.4L962.7,630.4L962.9,629.2L963.2,627.3L963.6,624.5L963.9,622.2L964.3,619.9L964.8,616.7L965.2,614.4L965.4,613.5L965.9,610.6L969.3,610.1L972.9,609.5L972.9,609.5L977.0,608.9L977.0,608.9L980.4,608.3L980.4,608.2L983.8,607.6L983.8,607.6L987.3,606.8L987.3,606.8L991.0,605.9L991.0,605.9L994.7,604.9L994.7,604.9L998.6,603.8L998.6,603.8L1002.7,602.6L1002.7,602.6L1006.7,601.2L1006.7,601.2L1010.7,599.9L1010.7,599.9L1014.7,598.4L1014.7,598.4L1018.7,596.9L1018.7,596.9L1022.6,595.3L1022.6,595.3L1026.4,593.5L1026.4,593.5L1030.0,591.6L1030.1,591.6L1033.6,589.6L1033.6,589.6L1036.9,587.4L1036.9,587.4L1039.9,585.2L1039.9,585.1L1042.7,582.8L1042.7,582.8L1045.2,580.3L1045.2,580.2L1047.5,577.6L1047.5,577.6L1049.6,574.8L1049.6,574.8L1051.6,571.9L1051.6,571.9L1053.3,568.9L1053.4,568.8L1054.8,565.7L1054.8,565.6L1055.8,562.3L1055.8,562.3L1056.2,560.1L1056.6,557.9L1056.7,557.9L1057.1,553.8L1057.5,549.8L1057.5,549.8L1060.1,523.1L1060.1,523.1L1060.1,523.1L1060.1,523.0L1060.1,523.0L1060.1,523.0L1060.1,523.0L1060.1,522.9L1060.0,522.9L1060.0,522.9L1060.0,522.9L1060.0,522.9L1060.0,522.8L1055.5,520.2L1051.1,517.6L1048.5,516.0L1045.9,514.4L1043.7,512.9L1041.5,511.4L1039.2,509.7L1036.9,508.1L1034.5,506.3L1032.1,504.5L1029.7,502.6L1027.3,500.8L1024.9,498.9L1022.5,497.0L1020.1,495.1L1017.7,493.2L1015.3,491.2L1012.9,489.3L1012.9,489.3L1010.6,487.4L1008.2,485.6L1008.2,485.6L1006.0,483.9L1003.7,482.2L1003.7,482.2L1001.5,480.6L999.4,478.9L999.4,478.9L997.2,477.4L995.2,475.9L995.1,475.9L991.1,473.5L991.1,473.5L987.2,471.6L987.1,471.6L983.4,470.3L983.4,470.3L979.8,469.6L979.7,469.6L976.3,469.2L976.2,469.2L973.0,469.2L972.9,469.2L969.8,469.6L969.7,469.6L966.7,470.3L966.7,470.3L963.5,471.5L963.5,471.5L960.2,473.0L960.2,473.1L956.7,475.0L956.7,475.0L953.1,477.4L953.1,477.4L949.2,480.2L949.2,480.2L947.1,481.7L945.0,483.3L945.0,483.3L942.1,485.5L939.3,487.7L939.3,487.7L935.6,490.5L932.0,493.4L928.6,496.1L926.3,494.8L923.9,493.3L921.2,491.5L918.8,489.7L915.8,487.2L913.0,484.7L910.3,482.4L910.3,479.0L910.3,475.4L910.3,468.2L910.3,464.8L910.3,461.4L910.3,461.4L910.1,458.4L910.1,458.4L909.6,455.8L909.6,455.8L909.6,455.8L908.7,453.2L908.7,453.2L908.6,453.2L907.6,451.3L906.6,449.4L906.5,449.3L906.5,449.3L906.5,449.3L906.5,449.3L906.5,449.2L906.4,449.2L906.4,449.2L903.2,448.0L900.0,446.7L900.0,446.7L896.0,445.2L896.0,445.2L892.0,444.0L892.0,444.0L887.6,442.6L887.6,442.6L882.6,441.3L882.6,441.3L877.7,440.0L877.7,440.0L873.0,438.9L873.0,438.9L867.4,437.8L867.4,437.8L857.6,436.0L857.5,436.0L857.5,436.0L857.5,436.0L857.4,436.0L857.4,436.0L857.4,436.0L857.4,436.0L854.6,437.4L851.7,438.8L851.7,438.9L848.9,440.6L848.9,440.7L848.9,440.7L847.0,442.4L847.0,442.4L847.0,442.4L845.4,444.4L845.4,444.4L845.4,444.4L844.1,446.6L844.1,446.6L842.9,448.9L842.9,448.9L841.7,451.4L841.7,451.4L840.3,454.8L840.3,454.8L839.0,458.0L837.8,461.0L833.5,460.4L833.5,460.4L831.1,460.0L831.1,460.0L829.4,459.8L829.4,459.8L827.9,459.6L827.8,459.6L826.4,459.5L826.4,459.5L825.0,459.4L825.0,459.4L823.6,459.2L823.6,459.2L822.1,459.1L822.1,459.1L820.7,459.0L820.7,459.0L819.3,458.9L819.3,458.9L817.8,458.8L817.8,458.8L816.4,458.7L816.4,458.7L815.0,458.7L815.0,458.7L813.5,458.6L813.5,458.6L812.1,458.5L812.1,458.5L810.6,458.5L810.6,458.5L809.2,458.5L809.2,458.5L807.8,458.4L807.8,458.4L806.3,458.4L806.3,458.4L804.9,458.4L804.9,458.4L803.4,458.4L803.4,458.4L802.0,458.4L802.0,458.4L800.6,458.4L800.6,458.4L799.1,458.5L799.1,458.5L797.7,458.5L797.7,458.5L796.2,458.5L796.2,458.5L794.8,458.6L794.8,458.6L793.4,458.6L793.4,458.6L791.9,458.7L791.9,458.7L790.5,458.8L790.5,458.8L789.0,458.9L789.0,458.9L787.6,459.0L787.6,459.0L786.2,459.1L786.2,459.1L784.7,459.2L784.7,459.2L783.3,459.3L783.3,459.3L781.9,459.5L781.9,459.5L780.4,459.6L780.4,459.6L779.0,459.7L779.0,459.7L777.6,459.9L777.6,459.9L776.1,460.1L776.1,460.1L774.7,460.3L774.7,460.3L773.3,460.4L773.3,460.4L771.8,460.6L771.8,460.6L770.4,460.8L770.4,460.8L769.0,461.0L769.0,461.0L767.6,461.3L767.6,461.3L766.1,461.5L766.1,461.5L764.7,461.7L764.7,461.7L763.3,462.0L763.3,462.0L761.9,462.2L761.9,462.2L760.5,462.5L760.5,462.5L759.1,462.8L759.1,462.8L757.6,463.1L757.6,463.1L756.2,463.3L756.2,463.3L754.8,463.6L754.8,463.6L753.4,463.9L753.4,463.9L752.0,464.3L752.0,464.3L750.6,464.6L750.6,464.6L749.2,464.9L749.2,464.9L747.8,465.3L747.8,465.3L746.4,465.6L746.4,465.6L745.1,466.0L745.1,466.0L743.7,466.3L743.7,466.3L742.3,466.7L742.3,466.7L740.9,467.1L740.9,467.1L739.5,467.5L739.5,467.5L738.2,467.9L738.2,467.9L736.8,468.3L736.8,468.3L735.4,468.7L735.4,468.7L734.1,469.2L734.1,469.2L732.7,469.6L732.7,469.6L731.3,470.0L731.3,470.0L730.0,470.5L730.0,470.5L728.6,471.0L728.6,471.0L727.3,471.4L727.3,471.4L725.9,471.9L725.9,471.9L724.6,472.4L724.6,472.4L723.3,472.9L723.3,472.9L721.9,473.4L721.9,473.4L720.6,473.9L720.6,473.9L719.3,474.4L719.3,474.4L718.0,475.0L718.0,475.0L716.7,475.5L716.7,475.5L715.4,476.0L715.4,476.0L714.1,476.6L714.0,476.6L712.8,477.2L712.7,477.2L711.5,477.7L711.5,477.7L710.2,478.3L710.2,478.3L708.9,478.9L708.9,478.9L707.6,479.5L707.6,479.5L706.3,480.1L706.3,480.1L705.1,480.7L705.0,480.7L703.8,481.3L703.8,481.3L702.5,481.9L702.5,482.0L701.3,482.6L701.3,482.6L700.0,483.2L700.0,483.2L698.8,483.9L698.8,483.9L697.5,484.5L697.5,484.5L696.3,485.2L696.3,485.2L695.1,485.9L695.1,485.9L693.8,486.6L693.8,486.6L692.6,487.3L692.6,487.3L691.4,488.0L691.4,488.0L690.2,488.7L690.2,488.7L689.0,489.4L689.0,489.4L687.8,490.1L687.8,490.1L686.6,490.8L686.6,490.8L685.5,491.6L685.4,491.6L684.3,492.3L684.3,492.3L683.1,493.1L683.1,493.1L681.9,493.8L681.9,493.8L680.8,494.6L680.8,494.6L679.6,495.4L679.6,495.4L678.5,496.2L678.5,496.2L677.4,497.0L677.4,497.0L676.2,497.8L676.2,497.8L675.1,498.6L675.1,498.6L674.0,499.4L674.0,499.4L672.9,500.2L672.9,500.2L671.8,501.0L671.8,501.0L670.7,501.9L670.7,501.9L669.6,502.7L669.6,502.7L668.5,503.6L668.5,503.6L667.5,504.4L667.5,504.4L666.4,505.3L666.4,505.3L665.3,506.2L665.3,506.2L664.3,507.1L664.3,507.1L663.3,507.9L663.3,507.9L662.2,508.8L662.2,508.8L661.2,509.7L661.2,509.7L660.2,510.6L660.2,510.6L659.2,511.6L659.2,511.6L658.2,512.5L658.2,512.5L657.2,513.4L657.2,513.4L656.2,514.4L656.2,514.4L655.2,515.3L655.2,515.3L654.3,516.3L654.3,516.3L653.3,517.2L653.3,517.2L652.4,518.2L652.3,518.2L651.4,519.1L651.4,519.1L650.5,520.1L650.5,520.1L649.6,521.1L649.6,521.1L648.6,522.1L648.6,522.1L647.7,523.1L647.7,523.1L646.8,524.1L646.8,524.1L646.0,525.1L646.0,525.1L645.1,526.1L645.1,526.1L644.2,527.2L644.2,527.2L643.3,528.2L642.1,529.7L640.5,531.6L637.8,534.7L635.0,537.9L632.5,540.9L630.6,539.3L628.5,537.5L628.5,537.5L626.0,535.5L626.0,535.5L623.8,533.7L623.8,533.7L621.4,531.9L621.4,531.9L618.9,530.1L618.9,530.1L616.3,528.2L616.3,528.2L613.7,526.3L613.7,526.3L610.3,524.0L610.3,524.0L607.1,521.9L604.2,519.9L603.4,514.3L603.4,514.3L602.8,511.0L602.8,510.9L602.2,508.0L602.2,508.0L601.4,504.8L601.4,504.8L600.5,501.3L600.5,501.3L599.5,498.1L599.5,498.1L598.6,494.9L598.6,494.9L597.7,492.0L597.7,492.0L596.7,489.1L595.8,486.2L595.1,483.3L594.4,480.2L593.7,477.1L593.1,473.8L592.5,470.4L591.9,466.8L591.2,463.0L591.2,463.0L590.6,459.5L590.6,459.5L590.0,456.0L590.0,456.0L589.4,452.7L589.4,452.7L588.7,449.6L588.7,449.6L587.9,446.6L587.9,446.6L586.8,443.8L586.8,443.8L585.4,441.1L585.4,441.1L583.9,438.6L583.9,438.6L582.1,436.3L582.1,436.3L580.3,434.3L580.2,434.2L578.2,432.4L578.2,432.4L576.0,430.9L575.9,430.9L573.7,429.5L573.7,429.5L571.3,428.3L571.3,428.3L568.9,427.3L568.8,427.3L566.3,426.5L566.3,426.4L563.8,425.8L563.8,425.8L561.3,425.4L561.3,425.4L558.8,425.2L558.8,425.2L556.3,425.2L556.2,425.2L553.3,425.4L553.2,425.4L549.8,425.8L549.8,425.8L545.9,426.4L545.9,426.4L541.5,427.3L541.5,427.3L536.7,428.2L536.7,428.2L531.4,429.2L531.4,429.2L528.5,429.8L525.6,430.4L525.6,430.4L522.5,431.0L519.3,431.6L519.3,431.6L516.2,432.3L513.1,432.9L513.1,432.9L510.0,433.6L506.8,434.3L506.8,434.3L503.7,434.9L500.6,435.6L500.6,435.6L497.5,436.4L494.3,437.1L494.3,437.1L491.5,437.8L488.7,438.6L488.7,438.6L483.7,440.1L483.7,440.1L479.3,441.8L479.3,441.8L475.5,443.5L475.5,443.5L472.1,445.2L472.1,445.2L469.2,447.0L469.1,447.0L466.6,448.9L466.5,448.9L464.4,450.8L464.4,450.8L462.5,452.6L462.4,452.7L460.8,454.5L460.8,454.6L459.4,456.4L459.4,456.5L458.4,458.3L458.3,458.4L457.6,460.3L457.6,460.3L457.5,460.4L457.1,462.4L457.1,462.4L457.1,462.4L456.9,464.5L456.9,464.6L457.0,466.7L457.0,466.8L457.3,468.9L457.3,468.9L457.6,471.0L457.6,471.0L459.3,478.1L457.0,479.7L454.2,481.7L454.2,481.7L451.1,484.1L451.1,484.1L448.6,486.3L448.6,486.3L446.1,488.7L446.0,488.7L443.5,491.3L443.5,491.3L441.1,494.1L441.1,494.1L438.8,496.9L438.8,496.9L436.5,499.8L436.5,499.8L434.3,502.8L434.3,502.8L432.4,505.6L432.4,505.6L430.7,508.2L430.7,508.2L428.9,511.2L428.9,511.2L427.4,513.7L426.1,516.0L422.3,517.0L418.3,517.9L414.3,518.9L414.3,518.9L408.6,520.3L408.6,520.3L405.3,521.2L405.3,521.2L402.9,522.0L402.9,522.0L401.5,522.6L401.5,522.6L400.1,523.2L400.1,523.2L398.7,523.9L398.7,523.9L397.3,524.5L397.3,524.5L395.9,525.1L395.9,525.1L394.6,525.8L394.6,525.8L393.2,526.5L393.2,526.5L391.9,527.1L391.9,527.1L390.5,527.8L390.5,527.8L389.2,528.5L389.2,528.5L387.8,529.2L387.8,529.2L386.5,530.0L386.5,530.0L385.1,530.7L385.1,530.7L383.8,531.4L383.8,531.4L382.5,532.2L382.5,532.2L381.2,532.9L381.2,532.9L379.9,533.7L379.9,533.7L378.6,534.5L378.6,534.5L377.3,535.2L377.3,535.2L376.0,536.0L376.0,536.0L374.7,536.8L374.7,536.8L373.4,537.6L373.4,537.6L372.2,538.5L372.2,538.5L370.9,539.3L370.9,539.3L369.7,540.1L369.7,540.1L368.4,541.0L368.4,541.0L367.2,541.8L367.2,541.8L365.9,542.7L365.9,542.7L364.7,543.5L364.7,543.5L363.5,544.4L363.5,544.4L362.3,545.3L362.3,545.3L361.1,546.2L361.1,546.2L359.9,547.1L359.9,547.1L358.7,548.0L358.7,548.0L357.5,548.9L357.5,548.9L356.4,549.9L356.4,549.9L355.2,550.8L355.2,550.8L354.0,551.7L354.0,551.7L352.9,552.7L352.9,552.7L351.8,553.6L351.8,553.6L350.6,554.6L350.6,554.6L349.5,555.6L349.5,555.6L348.4,556.5L348.4,556.5L347.3,557.5L347.3,557.5L346.2,558.5L346.2,558.5L345.1,559.5L345.1,559.5L344.0,560.5L344.0,560.5L342.9,561.5L342.9,561.5L341.9,562.5L341.9,562.5L340.8,563.6L340.8,563.6L339.8,564.6L339.8,564.6L338.7,565.6L338.7,565.6L337.7,566.7L337.7,566.7L336.7,567.7L336.7,567.7L335.7,568.8L335.7,568.8L334.7,569.8L334.7,569.8L333.7,570.9L333.7,570.9L332.7,572.0L332.7,572.0L331.7,573.1L331.7,573.1L330.7,574.1L330.7,574.1L329.8,575.2L329.8,575.2L328.8,576.3L328.8,576.3L327.9,577.4L327.9,577.4L327.0,578.5L327.0,578.5L326.0,579.7L326.0,579.7L325.1,580.8L325.1,580.8L324.2,581.9L324.2,581.9L323.3,583.0L323.3,583.0L322.4,584.2L322.4,584.2L321.6,585.3L321.6,585.3L320.7,586.5L320.7,586.5L319.8,587.6L319.8,587.6L319.0,588.8L319.0,588.8L318.1,589.9L318.1,589.9L317.3,591.1L317.3,591.1L316.5,592.3L316.5,592.3L315.7,593.4L315.7,593.4L314.9,594.6L314.9,594.6L314.1,595.8L314.1,595.8L313.3,597.0L313.3,597.0L312.5,598.2L312.5,598.2L311.7,599.4L311.7,599.4L311.0,600.6L311.0,600.6L310.2,601.8Z" fill="#a378cb"/>
<path d="M460.0,478.0L459.3,475.7L458.6,473.5L464.8,500.3L465.5,502.5L466.2,504.8Z" fill="#535055" stroke="#535055" stroke-width="0.7"/>
<path d="M458.6,473.5L458.3,472.2L457.9,470.9L464.1,497.7L464.5,499.0L464.8,500.3Z" fill="#504e51" stroke="#504e51" stroke-width="0.7"/>
<path d="M603.1,514.4L603.3,516.2L603.6,518.1L603.8,520.0L608.0,546.7L607.7,544.8L607.5,542.9L607.2,541.1Z" fill="#504e51" stroke="#504e51" stroke-width="0.7"/>
<path d="M1059.8,523.1L1059.6,525.1L1059.4,527.2L1059.2,529.2L1059.0,531.2L1056.4,557.8L1056.6,555.8L1056.8,553.8L1057.0,551.8L1057.2,549.7Z" fill="#4c4c4c" stroke="#4c4c4c" stroke-width="0.7"/>
<path d="M1059.0,531.2L1058.6,533.4L1058.2,535.6L1055.5,562.2L1055.9,560.0L1056.4,557.8Z" fill="#535055" stroke="#535055" stroke-width="0.7"/>
<path d="M1058.2,535.6L1057.6,537.3L1057.1,538.9L1054.5,565.5L1055.0,563.9L1055.5,562.2Z" fill="#5e5564" stroke="#5e5564" stroke-width="0.7"/>
<path d="M1057.1,538.9L1056.4,540.5L1055.7,542.1L1053.1,568.7L1053.8,567.1L1054.5,565.5Z" fill="#685a72" stroke="#685a72" stroke-width="0.7"/>
<path d="M1055.7,542.1L1054.8,543.6L1053.9,545.1L1051.3,571.7L1052.2,570.2L1053.1,568.7Z" fill="#6f5e7b" stroke="#6f5e7b" stroke-width="0.7"/>
<path d="M1053.9,545.1L1052.9,546.6L1051.9,548.1L1049.4,574.6L1050.4,573.2L1051.3,571.7Z" fill="#766185" stroke="#766185" stroke-width="0.7"/>
<path d="M1051.9,548.1L1050.9,549.4L1049.8,550.8L1047.3,577.4L1048.3,576.0L1049.4,574.6Z" fill="#7a638a" stroke="#7a638a" stroke-width="0.7"/>
<path d="M1049.8,550.8L1048.6,552.1L1047.4,553.5L1045.0,580.0L1046.1,578.7L1047.3,577.4Z" fill="#816693" stroke="#816693" stroke-width="0.7"/>
<path d="M1047.4,553.5L1046.2,554.7L1044.9,556.0L1042.5,582.5L1043.7,581.3L1045.0,580.0Z" fill="#846898" stroke="#846898" stroke-width="0.7"/>
<path d="M1044.9,556.0L1043.5,557.2L1042.1,558.3L1039.7,584.9L1041.1,583.7L1042.5,582.5Z" fill="#8b6ca1" stroke="#8b6ca1" stroke-width="0.7"/>
<path d="M1042.1,558.3L1040.6,559.5L1039.0,560.6L1036.7,587.2L1038.2,586.1L1039.7,584.9Z" fill="#926fab" stroke="#926fab" stroke-width="0.7"/>
<path d="M1039.0,560.6L1037.4,561.7L1035.7,562.8L1033.4,589.3L1035.1,588.3L1036.7,587.2Z" fill="#9671b0" stroke="#9671b0" stroke-width="0.7"/>
<path d="M1035.7,562.8L1033.9,563.8L1032.2,564.8L1029.9,591.4L1031.7,590.3L1033.4,589.3Z" fill="#9973b4" stroke="#9973b4" stroke-width="0.7"/>
<path d="M1032.2,564.8L1030.3,565.7L1028.5,566.7L1026.3,593.2L1028.1,592.3L1029.9,591.4Z" fill="#9d75b9" stroke="#9d75b9" stroke-width="0.7"/>
<path d="M1028.5,566.7L1026.5,567.6L1024.6,568.5L1022.5,595.0L1024.4,594.1L1026.3,593.2Z" fill="#a076be" stroke="#a076be" stroke-width="0.7"/>
<path d="M1024.6,568.5L1022.7,569.3L1020.7,570.1L1018.6,596.6L1020.6,595.8L1022.5,595.0Z" fill="#a478c3" stroke="#a478c3" stroke-width="0.7"/>
<path d="M1020.7,570.1L1018.7,570.8L1016.6,571.6L1014.6,572.3L1012.6,573.0L1010.5,573.7L1008.5,574.4L1006.5,575.1L1004.4,575.7L1002.6,602.3L1004.6,601.6L1006.6,601.0L1008.6,600.3L1010.6,599.6L1012.6,598.9L1014.6,598.1L1016.6,597.4L1018.6,596.6Z" fill="#a77ac7" stroke="#a77ac7" stroke-width="0.7"/>
<path d="M1004.4,575.7L1002.4,576.4L1000.3,577.0L998.3,577.6L996.4,578.1L994.5,578.6L992.5,579.1L990.7,579.6L988.9,580.0L987.3,606.5L989.1,606.1L990.9,605.6L992.8,605.1L994.7,604.6L996.6,604.1L998.5,603.5L1000.6,602.9L1002.6,602.3Z" fill="#ab7ccc" stroke="#ab7ccc" stroke-width="0.7"/>
<path d="M988.9,580.0L987.1,580.4L985.3,580.7L983.6,581.1L981.8,581.4L980.1,581.7L978.4,582.0L976.3,582.4L974.2,582.7L972.9,609.2L974.9,608.9L977.0,608.6L978.6,608.3L980.3,608.0L982.0,607.6L983.8,607.3L985.5,606.9L987.3,606.5Z" fill="#ae7dd1" stroke="#ae7dd1" stroke-width="0.7"/>
<path d="M974.2,582.7L971.8,583.1L969.3,583.4L966.9,583.8L965.6,610.3L968.0,609.9L970.4,609.6L972.9,609.2Z" fill="#b27fd6" stroke="#b27fd6" stroke-width="0.7"/>
<path d="M966.9,583.8L966.5,586.2L966.1,588.6L965.7,591.0L965.3,593.4L964.9,595.7L964.5,598.0L963.3,624.5L963.7,622.2L964.0,619.9L964.4,617.5L964.8,615.1L965.2,612.7L965.6,610.3Z" fill="#57515a" stroke="#57515a" stroke-width="0.7"/>
<path d="M964.5,598.0L964.3,599.4L964.1,600.7L963.8,602.7L963.7,603.9L963.5,605.1L963.4,606.3L963.2,607.5L962.0,634.0L962.1,632.8L962.3,631.6L962.4,630.4L962.6,629.2L962.9,627.2L963.1,625.8L963.3,624.5Z" fill="#535055" stroke="#535055" stroke-width="0.7"/>
<path d="M963.2,607.5L963.0,608.7L962.8,609.9L962.6,611.1L962.3,612.3L961.1,638.7L961.4,637.5L961.6,636.3L961.8,635.1L962.0,634.0Z" fill="#57515a" stroke="#57515a" stroke-width="0.7"/>
<path d="M962.3,612.3L962.1,613.5L961.8,614.7L961.6,615.9L961.3,617.1L960.1,643.5L960.3,642.3L960.6,641.1L960.9,639.9L961.1,638.7Z" fill="#5a535f" stroke="#5a535f" stroke-width="0.7"/>
<path d="M961.3,617.1L961.0,618.2L960.6,619.4L960.3,620.6L960.0,621.8L958.8,648.2L959.1,647.1L959.4,645.9L959.8,644.7L960.1,643.5Z" fill="#5e5564" stroke="#5e5564" stroke-width="0.7"/>
<path d="M960.0,621.8L959.6,623.0L959.2,624.2L958.8,625.4L957.7,651.8L958.0,650.6L958.4,649.4L958.8,648.2Z" fill="#615768" stroke="#615768" stroke-width="0.7"/>
<path d="M958.8,625.4L958.4,626.6L958.0,627.7L957.6,628.9L957.1,630.1L956.0,656.5L956.4,655.3L956.9,654.2L957.3,653.0L957.7,651.8Z" fill="#65586d" stroke="#65586d" stroke-width="0.7"/>
<path d="M957.1,630.1L956.7,631.3L956.2,632.5L955.7,633.6L955.2,634.8L954.1,661.2L954.6,660.0L955.1,658.8L955.5,657.7L956.0,656.5Z" fill="#685a72" stroke="#685a72" stroke-width="0.7"/>
<path d="M955.2,634.8L954.7,636.0L954.2,637.1L953.6,638.3L953.0,639.5L952.0,665.8L952.5,664.7L953.1,663.5L953.6,662.3L954.1,661.2Z" fill="#6c5c77" stroke="#6c5c77" stroke-width="0.7"/>
<path d="M953.0,639.5L952.5,640.6L951.9,641.8L951.3,642.9L950.7,644.1L949.6,670.4L950.2,669.3L950.8,668.1L951.4,667.0L952.0,665.8Z" fill="#6f5e7b" stroke="#6f5e7b" stroke-width="0.7"/>
<path d="M950.7,644.1L950.0,645.2L949.4,646.4L948.7,647.5L948.1,648.6L947.4,649.8L946.4,676.1L947.1,675.0L947.7,673.8L948.4,672.7L949.0,671.6L949.6,670.4Z" fill="#735f80" stroke="#735f80" stroke-width="0.7"/>
<path d="M947.4,649.8L946.7,650.9L946.0,652.0L945.2,653.1L944.5,654.2L943.6,680.5L944.3,679.4L945.0,678.3L945.7,677.2L946.4,676.1Z" fill="#766185" stroke="#766185" stroke-width="0.7"/>
<path d="M944.5,654.2L943.8,655.3L943.0,656.4L942.2,657.5L941.4,658.6L940.5,684.9L941.3,683.8L942.1,682.8L942.8,681.7L943.6,680.5Z" fill="#7a638a" stroke="#7a638a" stroke-width="0.7"/>
<path d="M941.4,658.6L940.6,659.7L939.8,660.8L939.0,661.9L938.1,663.0L937.3,664.0L936.4,690.3L937.2,689.3L938.1,688.2L938.9,687.1L939.7,686.0L940.5,684.9Z" fill="#7d658e" stroke="#7d658e" stroke-width="0.7"/>
<path d="M937.3,664.0L936.4,665.1L935.5,666.2L934.6,667.2L933.7,668.3L932.9,694.5L933.8,693.5L934.7,692.4L935.5,691.4L936.4,690.3Z" fill="#816693" stroke="#816693" stroke-width="0.7"/>
<path d="M933.7,668.3L932.8,669.3L931.8,670.3L930.9,671.4L929.9,672.4L928.9,673.4L928.2,699.7L929.2,698.6L930.1,697.6L931.1,696.6L932.0,695.6L932.9,694.5Z" fill="#846898" stroke="#846898" stroke-width="0.7"/>
<path d="M928.9,673.4L927.9,674.4L926.9,675.4L925.9,676.4L924.9,677.4L923.9,678.4L923.2,704.6L924.3,703.6L925.3,702.7L926.3,701.7L927.2,700.7L928.2,699.7Z" fill="#886a9d" stroke="#886a9d" stroke-width="0.7"/>
<path d="M923.9,678.4L922.8,679.4L921.8,680.3L920.7,681.3L919.6,682.3L918.5,683.2L918.0,709.4L919.0,708.5L920.1,707.5L921.2,706.6L922.2,705.6L923.2,704.6Z" fill="#8b6ca1" stroke="#8b6ca1" stroke-width="0.7"/>
<path d="M918.5,683.2L917.4,684.2L916.3,685.1L915.1,686.0L914.0,686.9L912.9,687.8L912.4,714.0L913.5,713.1L914.6,712.2L915.8,711.3L916.9,710.4L918.0,709.4Z" fill="#8f6ea6" stroke="#8f6ea6" stroke-width="0.7"/>
<path d="M912.9,687.8L911.7,688.7L910.5,689.6L909.3,690.5L908.1,691.4L906.9,692.3L905.7,693.1L905.3,719.3L906.5,718.5L907.7,717.6L908.9,716.7L910.1,715.8L911.2,714.9L912.4,714.0Z" fill="#926fab" stroke="#926fab" stroke-width="0.7"/>
<path d="M905.7,693.1L904.5,694.0L903.2,694.8L902.0,695.7L900.7,696.5L899.4,697.3L898.2,698.1L897.9,724.3L899.2,723.5L900.4,722.7L901.7,721.8L902.9,721.0L904.1,720.2L905.3,719.3Z" fill="#9671b0" stroke="#9671b0" stroke-width="0.7"/>
<path d="M898.2,698.1L896.9,698.9L895.6,699.7L894.3,700.5L892.9,701.3L891.6,702.0L890.3,702.8L888.9,703.5L888.8,729.7L890.2,728.9L891.5,728.2L892.8,727.4L894.1,726.6L895.4,725.9L896.7,725.1L897.9,724.3Z" fill="#9973b4" stroke="#9973b4" stroke-width="0.7"/>
<path d="M888.9,703.5L887.6,704.3L886.2,705.0L884.8,705.7L883.4,706.4L882.0,707.1L880.6,707.8L879.2,708.5L877.8,709.1L877.9,735.2L879.3,734.6L880.7,733.9L882.1,733.2L883.4,732.5L884.8,731.8L886.2,731.1L887.5,730.4L888.8,729.7Z" fill="#9d75b9" stroke="#9d75b9" stroke-width="0.7"/>
<path d="M877.8,709.1L876.4,709.8L875.0,710.4L873.5,711.0L872.1,711.7L870.6,712.3L869.2,712.9L867.7,713.5L866.2,714.0L864.7,714.6L865.0,740.7L866.5,740.1L868.0,739.6L869.4,739.0L870.8,738.4L872.3,737.8L873.7,737.1L875.1,736.5L876.5,735.9L877.9,735.2Z" fill="#a076be" stroke="#a076be" stroke-width="0.7"/>
<path d="M864.7,714.6L863.2,715.2L861.7,715.7L860.2,716.2L858.7,716.8L857.2,717.3L855.7,717.8L854.2,718.3L852.6,718.8L851.1,719.2L849.5,719.7L848.0,720.1L848.6,746.2L850.1,745.7L851.6,745.3L853.1,744.8L854.6,744.3L856.1,743.9L857.6,743.4L859.1,742.8L860.6,742.3L862.1,741.8L863.6,741.3L865.0,740.7Z" fill="#a478c3" stroke="#a478c3" stroke-width="0.7"/>
<path d="M848.0,720.1L846.4,720.5L844.9,721.0L843.3,721.4L841.7,721.8L840.2,722.2L838.6,722.5L837.0,722.9L835.4,723.2L833.8,723.6L832.2,723.9L830.6,724.2L829.0,724.5L827.4,724.8L825.8,725.1L824.2,725.3L822.6,725.6L821.0,725.8L819.4,726.1L817.7,726.3L816.1,726.5L814.5,726.7L812.9,726.9L811.2,727.0L809.6,727.2L808.0,727.3L806.4,727.4L804.7,727.6L803.1,727.7L801.5,727.8L799.8,727.8L798.2,727.9L796.6,728.0L794.9,728.0L793.3,728.0L791.7,728.0L790.0,728.0L788.4,728.0L786.8,728.0L785.1,728.0L783.5,727.9L781.9,727.9L780.3,727.8L778.6,727.7L777.0,727.6L775.4,727.5L773.8,727.4L772.2,727.3L770.6,727.1L769.0,727.0L767.3,726.8L765.7,726.6L764.1,726.4L762.6,726.2L761.0,726.0L763.0,752.0L764.5,752.2L766.1,752.5L767.7,752.6L769.3,752.8L770.8,753.0L772.4,753.2L774.0,753.3L775.6,753.4L777.2,753.6L778.8,753.7L780.4,753.8L782.0,753.8L783.6,753.9L785.2,754.0L786.8,754.0L788.4,754.0L790.0,754.1L791.6,754.1L793.2,754.1L794.8,754.1L796.4,754.0L798.0,754.0L799.6,753.9L801.2,753.9L802.8,753.8L804.4,753.7L806.0,753.6L807.6,753.5L809.2,753.4L810.8,753.2L812.4,753.1L814.0,752.9L815.6,752.7L817.2,752.5L818.8,752.3L820.4,752.1L822.0,751.9L823.6,751.6L825.2,751.4L826.8,751.1L828.3,750.9L829.9,750.6L831.5,750.3L833.1,750.0L834.6,749.6L836.2,749.3L837.8,748.9L839.3,748.6L840.9,748.2L842.4,747.8L844.0,747.4L845.5,747.0L847.0,746.6L848.6,746.2Z" fill="#a77ac7" stroke="#a77ac7" stroke-width="0.7"/>
<path d="M761.0,726.0L759.4,725.8L757.8,725.5L756.2,725.3L754.6,725.0L753.1,724.7L751.5,724.4L749.9,724.1L748.4,723.8L746.8,723.5L745.3,723.1L743.7,722.8L742.2,722.4L744.5,748.5L746.0,748.8L747.6,749.2L749.1,749.5L750.6,749.8L752.1,750.2L753.7,750.5L755.2,750.8L756.8,751.0L758.3,751.3L759.9,751.6L761.4,751.8L763.0,752.0Z" fill="#a478c3" stroke="#a478c3" stroke-width="0.7"/>
<path d="M742.2,722.4L740.7,722.0L739.1,721.6L737.6,721.2L736.1,720.8L734.6,720.4L733.1,720.0L731.6,719.5L730.1,719.1L728.7,718.6L731.2,744.7L732.6,745.2L734.1,745.6L735.6,746.1L737.1,746.5L738.5,746.9L740.0,747.3L741.5,747.7L743.0,748.1L744.5,748.5Z" fill="#a076be" stroke="#a076be" stroke-width="0.7"/>
<path d="M728.7,718.6L727.2,718.1L725.7,717.6L724.3,717.1L722.8,716.6L721.4,716.1L719.9,715.6L718.5,715.0L721.2,741.1L722.6,741.7L724.0,742.2L725.4,742.7L726.9,743.2L728.3,743.7L729.7,744.2L731.2,744.7Z" fill="#9d75b9" stroke="#9d75b9" stroke-width="0.7"/>
<path d="M718.5,715.0L717.1,714.5L715.7,713.9L714.3,713.3L712.9,712.7L711.5,712.2L710.1,711.5L708.7,710.9L711.6,737.0L712.9,737.7L714.3,738.3L715.7,738.9L717.0,739.4L718.4,740.0L719.8,740.6L721.2,741.1Z" fill="#9973b4" stroke="#9973b4" stroke-width="0.7"/>
<path d="M708.7,710.9L707.4,710.3L706.0,709.7L704.7,709.0L703.4,708.3L702.0,707.7L700.7,707.0L703.7,733.1L705.0,733.8L706.3,734.5L707.6,735.1L708.9,735.8L710.3,736.4L711.6,737.0Z" fill="#9671b0" stroke="#9671b0" stroke-width="0.7"/>
<path d="M700.7,707.0L699.4,706.3L698.1,705.6L696.8,704.9L695.6,704.2L694.3,703.5L693.0,702.7L696.1,728.9L697.4,729.6L698.6,730.3L699.9,731.0L701.1,731.8L702.4,732.4L703.7,733.1Z" fill="#926fab" stroke="#926fab" stroke-width="0.7"/>
<path d="M693.0,702.7L691.8,702.0L690.6,701.2L689.3,700.5L688.1,699.7L686.9,698.9L685.7,698.1L688.9,724.3L690.1,725.1L691.3,725.8L692.5,726.6L693.7,727.4L694.9,728.1L696.1,728.9Z" fill="#8f6ea6" stroke="#8f6ea6" stroke-width="0.7"/>
<path d="M685.7,698.1L684.6,697.3L683.4,696.5L682.2,695.7L681.1,694.9L679.9,694.0L683.2,720.2L684.4,721.0L685.5,721.9L686.6,722.7L687.8,723.5L688.9,724.3Z" fill="#8b6ca1" stroke="#8b6ca1" stroke-width="0.7"/>
<path d="M679.9,694.0L678.8,693.2L677.7,692.3L676.6,691.5L675.5,690.6L674.4,689.7L677.8,715.9L678.9,716.8L680.0,717.7L681.0,718.5L682.1,719.4L683.2,720.2Z" fill="#886a9d" stroke="#886a9d" stroke-width="0.7"/>
<path d="M674.4,689.7L673.4,688.8L672.3,688.0L671.3,687.1L670.2,686.2L673.7,712.4L674.7,713.3L675.7,714.2L676.8,715.1L677.8,715.9Z" fill="#846898" stroke="#846898" stroke-width="0.7"/>
<path d="M670.2,686.2L669.2,685.2L668.2,684.3L667.2,683.4L666.2,682.5L665.3,681.5L668.8,707.8L669.7,708.7L670.7,709.6L671.7,710.6L672.7,711.5L673.7,712.4Z" fill="#816693" stroke="#816693" stroke-width="0.7"/>
<path d="M665.3,681.5L664.3,680.6L663.4,679.6L662.4,678.7L661.5,677.7L665.1,703.9L666.0,704.9L666.9,705.9L667.8,706.8L668.8,707.8Z" fill="#7d658e" stroke="#7d658e" stroke-width="0.7"/>
<path d="M661.5,677.7L660.6,676.7L659.7,675.7L658.8,674.7L662.5,701.0L663.3,702.0L664.2,703.0L665.1,703.9Z" fill="#7a638a" stroke="#7a638a" stroke-width="0.7"/>
<path d="M658.8,674.7L657.5,673.4L655.6,671.8L659.3,698.0L661.1,699.7L662.5,701.0Z" fill="#816693" stroke="#816693" stroke-width="0.7"/>
<path d="M655.6,671.8L654.1,670.5L652.6,669.2L650.4,667.5L648.3,665.7L646.2,664.0L644.8,666.3L643.4,668.5L641.9,670.8L640.5,673.1L639.1,675.3L637.8,677.5L636.1,680.1L640.0,706.4L641.7,703.7L643.1,701.6L644.4,699.4L645.8,697.1L647.2,694.8L648.6,692.6L650.0,690.3L652.1,692.0L654.2,693.8L656.3,695.5L657.8,696.8L659.3,698.0Z" fill="#846898" stroke="#846898" stroke-width="0.7"/>
<path d="M636.1,680.1L634.8,682.0L634.0,683.2L633.1,684.3L637.2,710.6L638.0,709.4L638.8,708.3L640.0,706.4Z" fill="#886a9d" stroke="#886a9d" stroke-width="0.7"/>
<path d="M633.1,684.3L632.3,685.5L631.4,686.7L630.6,687.8L629.7,689.0L628.8,690.2L628.0,691.3L627.1,692.5L626.2,693.6L625.3,694.8L629.5,721.0L630.3,719.8L631.2,718.7L632.1,717.5L633.0,716.4L633.8,715.2L634.7,714.1L635.5,712.9L636.3,711.7L637.2,710.6Z" fill="#8b6ca1" stroke="#8b6ca1" stroke-width="0.7"/>
<path d="M625.3,694.8L624.4,695.9L623.5,697.0L622.5,698.2L621.6,699.3L620.7,700.5L619.7,701.6L618.8,702.7L617.8,703.9L616.8,705.0L621.2,731.2L622.1,730.0L623.1,728.9L624.0,727.8L624.9,726.6L625.9,725.5L626.8,724.4L627.7,723.2L628.6,722.1L629.5,721.0Z" fill="#8f6ea6" stroke="#8f6ea6" stroke-width="0.7"/>
<path d="M616.8,705.0L615.9,706.1L614.9,707.2L613.9,708.4L612.9,709.5L611.9,710.6L610.9,711.7L609.8,712.8L608.8,713.9L607.8,715.0L612.3,741.1L613.3,740.0L614.3,738.9L615.3,737.8L616.3,736.7L617.3,735.6L618.3,734.5L619.3,733.4L620.2,732.3L621.2,731.2Z" fill="#926fab" stroke="#926fab" stroke-width="0.7"/>
<path d="M607.8,715.0L606.7,716.1L605.6,717.2L604.6,718.3L603.5,719.4L602.4,720.5L601.3,721.6L600.2,722.7L599.0,723.8L603.7,749.8L604.8,748.8L605.9,747.7L607.0,746.6L608.1,745.5L609.1,744.4L610.2,743.3L611.2,742.2L612.3,741.1Z" fill="#9671b0" stroke="#9671b0" stroke-width="0.7"/>
<path d="M599.0,723.8L597.9,724.8L596.8,725.9L595.6,727.0L594.5,728.0L593.3,729.1L592.1,730.1L590.9,731.2L589.7,732.2L588.5,733.3L593.4,759.3L594.6,758.3L595.7,757.2L596.9,756.2L598.1,755.1L599.2,754.1L600.4,753.0L601.5,752.0L602.6,750.9L603.7,749.8Z" fill="#9973b4" stroke="#9973b4" stroke-width="0.7"/>
<path d="M588.5,733.3L587.3,734.3L586.0,735.3L584.8,736.3L583.5,737.4L582.3,738.4L581.0,739.4L579.7,740.4L578.4,741.4L577.1,742.4L582.2,768.3L583.5,767.4L584.7,766.4L586.0,765.4L587.3,764.4L588.5,763.4L589.7,762.4L591.0,761.3L592.2,760.3L593.4,759.3Z" fill="#9d75b9" stroke="#9d75b9" stroke-width="0.7"/>
<path d="M577.1,742.4L575.8,743.3L574.5,744.3L573.1,745.3L571.8,746.2L570.4,747.2L569.0,748.1L567.7,749.1L566.3,750.0L564.9,750.9L570.2,776.9L571.5,776.0L572.9,775.0L574.3,774.1L575.6,773.2L576.9,772.2L578.3,771.3L579.6,770.3L580.9,769.3L582.2,768.3Z" fill="#a076be" stroke="#a076be" stroke-width="0.7"/>
<path d="M564.9,750.9L563.5,751.9L562.0,752.8L560.6,753.7L559.2,754.6L557.7,755.4L556.2,756.3L554.8,757.2L553.3,758.0L551.8,758.9L550.3,759.7L548.8,760.5L554.4,786.4L555.8,785.6L557.3,784.8L558.8,783.9L560.2,783.1L561.7,782.2L563.1,781.4L564.6,780.5L566.0,779.6L567.4,778.7L568.8,777.8L570.2,776.9Z" fill="#a478c3" stroke="#a478c3" stroke-width="0.7"/>
<path d="M548.8,760.5L547.2,761.3L545.7,762.1L544.2,762.9L542.6,763.7L541.1,764.5L539.5,765.3L537.9,766.0L536.3,766.7L534.7,767.5L533.1,768.2L531.5,768.9L529.9,769.6L528.3,770.3L526.6,770.9L525.0,771.6L523.3,772.2L521.7,772.8L520.0,773.4L518.3,774.0L516.7,774.6L522.8,800.4L524.5,799.9L526.1,799.3L527.8,798.7L529.4,798.0L531.0,797.4L532.6,796.8L534.2,796.1L535.8,795.4L537.4,794.7L539.0,794.0L540.6,793.3L542.1,792.6L543.7,791.9L545.2,791.1L546.8,790.4L548.3,789.6L549.8,788.8L551.4,788.0L552.9,787.2L554.4,786.4Z" fill="#a77ac7" stroke="#a77ac7" stroke-width="0.7"/>
<path d="M516.7,774.6L515.0,775.2L513.3,775.7L511.6,776.3L509.9,776.8L508.2,777.3L506.5,777.8L504.8,778.3L503.0,778.7L501.3,779.2L499.6,779.6L506.1,805.4L507.8,805.0L509.4,804.5L511.1,804.1L512.8,803.6L514.5,803.1L516.2,802.6L517.9,802.1L519.5,801.6L521.2,801.0L522.8,800.4Z" fill="#ab7ccc" stroke="#ab7ccc" stroke-width="0.7"/>
<path d="M499.6,779.6L497.9,780.0L496.1,780.4L494.4,780.8L492.6,781.2L490.9,781.5L489.1,781.8L487.4,782.2L485.6,782.5L483.9,782.7L482.1,783.0L480.4,783.2L478.6,783.5L476.9,783.7L475.1,783.9L473.4,784.1L471.6,784.2L469.9,784.4L468.1,784.5L475.1,810.3L476.9,810.1L478.6,810.0L480.3,809.8L482.0,809.7L483.7,809.5L485.5,809.3L487.2,809.0L488.9,808.8L490.6,808.5L492.4,808.2L494.1,808.0L495.8,807.6L497.5,807.3L499.2,807.0L500.9,806.6L502.6,806.2L504.4,805.8L506.1,805.4Z" fill="#a77ac7" stroke="#a77ac7" stroke-width="0.7"/>
<path d="M468.1,784.5L466.4,784.6L464.6,784.7L462.9,784.8L461.1,784.8L459.4,784.9L457.7,784.9L455.9,784.9L454.2,784.9L452.5,784.9L459.8,810.7L461.5,810.7L463.1,810.7L464.9,810.7L466.6,810.7L468.3,810.6L470.0,810.6L471.7,810.5L473.4,810.4L475.1,810.3Z" fill="#a478c3" stroke="#a478c3" stroke-width="0.7"/>
<path d="M452.5,784.9L450.8,784.9L449.0,784.8L447.3,784.8L445.6,784.7L443.9,784.6L442.2,784.5L440.5,784.3L438.8,784.2L446.3,810.0L448.0,810.1L449.7,810.2L451.3,810.4L453.0,810.5L454.7,810.5L456.4,810.6L458.1,810.7L459.8,810.7Z" fill="#a076be" stroke="#a076be" stroke-width="0.7"/>
<path d="M438.8,784.2L437.2,784.0L435.5,783.8L433.8,783.7L432.2,783.4L430.5,783.2L428.9,783.0L436.5,808.8L438.1,809.0L439.8,809.2L441.4,809.4L443.0,809.6L444.7,809.8L446.3,810.0Z" fill="#9d75b9" stroke="#9d75b9" stroke-width="0.7"/>
<path d="M428.9,783.0L427.2,782.7L425.6,782.5L424.0,782.2L422.3,781.9L420.7,781.6L419.1,781.3L417.5,780.9L425.4,806.7L427.0,807.1L428.5,807.4L430.1,807.7L431.7,808.0L433.3,808.3L434.9,808.5L436.5,808.8Z" fill="#9973b4" stroke="#9973b4" stroke-width="0.7"/>
<path d="M417.5,780.9L415.9,780.6L414.4,780.2L412.8,779.8L411.2,779.4L409.7,779.0L417.7,804.9L419.2,805.3L420.7,805.7L422.3,806.0L423.8,806.4L425.4,806.7Z" fill="#9671b0" stroke="#9671b0" stroke-width="0.7"/>
<path d="M409.7,779.0L408.2,778.6L406.6,778.2L405.1,777.8L403.6,777.3L402.1,776.8L400.6,776.3L408.7,802.2L410.2,802.7L411.7,803.1L413.1,803.6L414.6,804.0L416.2,804.4L417.7,804.9Z" fill="#926fab" stroke="#926fab" stroke-width="0.7"/>
<path d="M400.6,776.3L399.1,775.9L397.6,775.3L396.2,774.8L394.7,774.3L393.3,773.8L401.5,799.6L402.9,800.1L404.4,800.7L405.8,801.2L407.2,801.7L408.7,802.2Z" fill="#8f6ea6" stroke="#8f6ea6" stroke-width="0.7"/>
<path d="M393.3,773.8L391.8,773.2L390.4,772.6L389.0,772.1L387.6,771.5L386.2,770.9L394.5,796.7L395.9,797.3L397.3,797.9L398.7,798.5L400.1,799.1L401.5,799.6Z" fill="#8b6ca1" stroke="#8b6ca1" stroke-width="0.7"/>
<path d="M386.2,770.9L384.8,770.3L383.5,769.6L382.1,769.0L380.8,768.4L379.4,767.7L387.9,793.6L389.2,794.3L390.5,794.9L391.8,795.5L393.2,796.1L394.5,796.7Z" fill="#886a9d" stroke="#886a9d" stroke-width="0.7"/>
<path d="M379.4,767.7L378.1,767.1L376.8,766.4L375.5,765.7L374.2,765.0L372.9,764.3L381.4,790.2L382.7,790.9L384.0,791.6L385.3,792.3L386.6,792.9L387.9,793.6Z" fill="#846898" stroke="#846898" stroke-width="0.7"/>
<path d="M372.9,764.3L371.6,763.6L370.4,762.9L369.1,762.2L367.9,761.4L366.7,760.7L375.3,786.6L376.5,787.3L377.7,788.1L379.0,788.8L380.2,789.5L381.4,790.2Z" fill="#816693" stroke="#816693" stroke-width="0.7"/>
<path d="M366.7,760.7L365.5,759.9L364.3,759.2L363.1,758.4L361.9,757.6L360.7,756.8L369.4,782.7L370.6,783.5L371.7,784.3L372.9,785.1L374.1,785.8L375.3,786.6Z" fill="#7d658e" stroke="#7d658e" stroke-width="0.7"/>
<path d="M360.7,756.8L359.6,756.0L358.4,755.2L357.3,754.4L356.2,753.6L355.1,752.7L354.0,751.9L362.8,777.9L363.8,778.7L364.9,779.5L366.0,780.3L367.2,781.2L368.3,782.0L369.4,782.7Z" fill="#7a638a" stroke="#7a638a" stroke-width="0.7"/>
<path d="M354.0,751.9L352.9,751.1L351.8,750.2L350.7,749.4L349.7,748.5L348.6,747.6L357.5,773.6L358.5,774.5L359.6,775.3L360.6,776.2L361.7,777.0L362.8,777.9Z" fill="#766185" stroke="#766185" stroke-width="0.7"/>
<path d="M348.6,747.6L347.6,746.7L346.6,745.9L345.6,745.0L344.6,744.1L343.6,743.2L352.5,769.2L353.5,770.1L354.5,771.0L355.5,771.9L356.5,772.7L357.5,773.6Z" fill="#735f80" stroke="#735f80" stroke-width="0.7"/>
<path d="M343.6,743.2L342.6,742.3L341.6,741.3L340.7,740.4L339.7,739.5L338.8,738.6L347.8,764.6L348.7,765.5L349.7,766.4L350.6,767.4L351.6,768.3L352.5,769.2Z" fill="#6f5e7b" stroke="#6f5e7b" stroke-width="0.7"/>
<path d="M338.8,738.6L337.9,737.6L337.0,736.7L336.1,735.7L335.2,734.8L334.3,733.8L343.4,759.9L344.2,760.8L345.1,761.8L346.0,762.7L346.9,763.7L347.8,764.6Z" fill="#6c5c77" stroke="#6c5c77" stroke-width="0.7"/>
<path d="M334.3,733.8L333.4,732.9L332.6,731.9L331.7,730.9L330.9,729.9L330.1,728.9L329.2,728.0L338.4,754.0L339.2,755.0L340.0,756.0L340.8,757.0L341.7,757.9L342.5,758.9L343.4,759.9Z" fill="#685a72" stroke="#685a72" stroke-width="0.7"/>
<path d="M329.2,728.0L328.4,727.0L327.6,726.0L326.8,725.0L326.1,724.0L325.3,722.9L334.5,749.1L335.2,750.1L336.0,751.1L336.8,752.1L337.6,753.1L338.4,754.0Z" fill="#65586d" stroke="#65586d" stroke-width="0.7"/>
<path d="M325.3,722.9L324.5,721.9L323.8,720.9L323.0,719.9L322.3,718.9L321.6,717.8L320.9,716.8L320.2,715.8L329.4,741.9L330.1,742.9L330.8,744.0L331.5,745.0L332.2,746.0L333.0,747.0L333.7,748.0L334.5,749.1Z" fill="#615768" stroke="#615768" stroke-width="0.7"/>
<path d="M320.2,715.8L319.5,714.7L318.8,713.7L318.1,712.6L317.4,711.6L316.7,710.5L316.1,709.5L315.4,708.4L324.7,734.6L325.3,735.6L326.0,736.7L326.7,737.7L327.3,738.8L328.0,739.8L328.7,740.9L329.4,741.9Z" fill="#5e5564" stroke="#5e5564" stroke-width="0.7"/>
<path d="M315.4,708.4L314.8,707.4L314.1,706.3L313.5,705.2L312.8,704.2L312.2,703.1L311.6,702.0L311.0,700.9L310.4,699.8L309.7,698.8L309.1,697.7L318.5,723.9L319.1,725.0L319.7,726.1L320.3,727.1L320.9,728.2L321.5,729.3L322.1,730.3L322.8,731.4L323.4,732.5L324.0,733.5L324.7,734.6Z" fill="#5a535f" stroke="#5a535f" stroke-width="0.7"/>
<path d="M309.1,697.7L308.5,696.6L307.9,695.5L307.4,694.4L306.8,693.3L306.2,692.2L305.6,691.1L305.0,690.0L304.4,688.9L303.9,687.8L303.3,686.7L302.7,685.5L302.1,684.4L301.6,683.3L301.0,682.2L310.4,708.5L311.0,709.6L311.5,710.7L312.1,711.8L312.7,712.9L313.2,714.0L313.8,715.1L314.4,716.3L314.9,717.4L315.5,718.4L316.1,719.5L316.7,720.6L317.3,721.7L317.9,722.8L318.5,723.9Z" fill="#57515a" stroke="#57515a" stroke-width="0.7"/>
<path d="M301.0,682.2L300.5,681.0L299.9,679.9L299.4,678.8L298.8,677.6L298.3,676.5L297.8,675.3L307.2,701.6L307.7,702.8L308.2,703.9L308.8,705.1L309.3,706.2L309.9,707.3L310.4,708.5Z" fill="#535055" stroke="#535055" stroke-width="0.7"/>
<path d="M297.8,675.3L297.3,674.1L296.8,673.0L296.3,671.8L305.7,698.1L306.2,699.3L306.7,700.5L307.2,701.6Z" fill="#504e51" stroke="#504e51" stroke-width="0.7"/>
<path d="M296.3,671.8L295.9,670.6L305.3,696.9L305.7,698.1Z" fill="#4c4c4c" stroke="#4c4c4c" stroke-width="0.7"/>
<path d="M340.7,740.4L339.7,739.5L338.8,738.6L337.9,737.6L337.0,736.7L336.1,735.7L335.2,734.8L334.3,733.8L333.4,732.9L332.6,731.9L331.7,730.9L330.9,729.9L330.1,728.9L329.2,728.0L328.4,727.0L327.6,726.0L326.8,725.0L326.1,724.0L325.3,722.9L324.5,721.9L323.8,720.9L323.0,719.9L322.3,718.9L321.6,717.8L320.9,716.8L320.2,715.8L319.5,714.7L318.8,713.7L318.1,712.6L317.4,711.6L316.7,710.5L316.1,709.5L315.4,708.4L314.8,707.4L314.1,706.3L313.5,705.2L312.8,704.2L312.2,703.1L311.6,702.0L311.0,700.9L310.4,699.8L309.7,698.8L309.1,697.7L308.5,696.6L307.9,695.5L307.4,694.4L306.8,693.3L306.2,692.2L305.6,691.1L305.0,690.0L304.4,688.9L303.9,687.8L303.3,686.7L302.7,685.5L302.1,684.4L301.6,683.3L301.0,682.2L300.5,681.0L299.9,679.9L299.4,678.8L298.8,677.6L298.3,676.5L297.8,675.3L297.3,674.1L296.8,673.0L296.3,671.8L295.9,670.6L295.5,669.4L295.1,668.2L294.7,667.0L294.3,665.7L294.0,664.5L293.8,663.3L293.5,662.0L293.3,660.8L293.1,659.5L293.0,658.2L292.9,656.9L292.8,655.7L292.8,654.4L292.8,653.1L292.8,651.8L292.8,650.5L292.9,649.2L293.0,647.9L293.1,646.6L293.3,645.3L293.5,644.0L293.7,642.6L293.9,641.3L294.2,640.0L294.5,638.7L294.8,637.4L295.1,636.1L295.5,634.8L295.8,633.5L296.2,632.2L296.6,630.9L297.1,629.6L297.5,628.3L298.0,627.0L298.5,625.7L299.0,624.4L299.5,623.2L300.0,621.9L300.6,620.6L301.1,619.3L301.7,618.1L302.3,616.8L302.9,615.5L303.6,614.3L304.2,613.0L304.8,611.8L305.5,610.5L306.2,609.3L306.9,608.1L307.6,606.8L308.3,605.6L309.0,604.4L309.7,603.2L310.5,602.0L311.2,600.8L312.0,599.5L312.7,598.4L313.5,597.2L314.3,596.0L315.1,594.8L315.9,593.6L316.7,592.4L317.5,591.3L318.4,590.1L319.2,588.9L320.1,587.8L320.9,586.6L321.8,585.5L322.7,584.4L323.6,583.2L324.5,582.1L325.4,581.0L326.3,579.9L327.2,578.7L328.1,577.6L329.1,576.5L330.0,575.4L331.0,574.3L331.9,573.3L332.9,572.2L333.9,571.1L334.9,570.0L335.9,569.0L336.9,567.9L337.9,566.9L338.9,565.8L340.0,564.8L341.0,563.8L342.1,562.8L343.1,561.7L344.2,560.7L345.3,559.7L346.4,558.7L347.5,557.7L348.6,556.8L349.7,555.8L350.8,554.8L352.0,553.9L353.1,552.9L354.2,552.0L355.4,551.0L356.5,550.1L357.7,549.2L358.9,548.3L360.1,547.3L361.3,546.4L362.5,545.6L363.7,544.7L364.9,543.8L366.1,542.9L367.3,542.1L368.6,541.2L369.8,540.4L371.1,539.5L372.3,538.7L373.6,537.9L374.9,537.1L376.2,536.3L377.4,535.5L378.7,534.7L380.0,533.9L381.3,533.2L382.6,532.4L384.0,531.7L385.3,530.9L386.6,530.2L388.0,529.5L389.3,528.8L390.6,528.1L392.0,527.4L393.3,526.7L394.7,526.1L396.1,525.4L397.4,524.8L398.8,524.1L400.2,523.5L401.6,522.9L403.0,522.3L405.4,521.5L408.7,520.6L414.4,519.2L426.3,516.3L429.1,511.3L430.9,508.4L432.6,505.8L434.6,503.0L436.8,500.0L439.0,497.1L441.3,494.3L443.8,491.5L446.3,488.9L448.8,486.5L451.3,484.3L454.4,481.9L460.0,478.0L458.6,473.5L457.9,470.9L457.6,468.9L457.3,466.7L457.2,464.6L457.4,462.5L457.8,460.4L458.6,458.5L459.7,456.6L461.0,454.7L462.7,452.9L464.6,451.0L466.7,449.1L469.3,447.3L472.3,445.5L475.6,443.7L479.4,442.0L483.8,440.4L488.8,438.9L494.4,437.4L500.6,435.9L506.9,434.6L513.1,433.2L519.4,431.9L525.6,430.7L531.4,429.5L536.7,428.5L541.6,427.6L545.9,426.7L549.8,426.1L553.3,425.7L556.3,425.5L558.8,425.5L561.2,425.7L563.7,426.1L566.2,426.7L568.7,427.6L571.2,428.6L573.5,429.8L575.8,431.1L578.0,432.7L580.0,434.5L581.9,436.5L583.6,438.7L585.2,441.2L586.5,443.9L587.6,446.7L588.4,449.7L589.1,452.8L589.7,456.1L590.3,459.5L590.9,463.1L591.6,466.8L592.2,470.4L592.8,473.9L593.4,477.2L594.1,480.3L594.8,483.3L595.6,486.3L596.4,489.2L597.4,492.0L598.3,495.0L599.3,498.1L600.2,501.4L601.1,504.8L601.9,508.0L602.5,511.0L603.1,514.4L603.8,520.0L610.1,524.2L613.5,526.6L616.2,528.4L618.7,530.3L621.2,532.2L623.6,534.0L625.8,535.7L628.3,537.8L632.5,541.3L638.0,534.9L640.7,531.8L642.3,529.9L643.6,528.4L644.4,527.4L645.3,526.3L646.2,525.3L647.1,524.3L648.0,523.3L648.9,522.3L649.8,521.3L650.7,520.3L651.6,519.4L652.6,518.4L653.5,517.4L654.5,516.5L655.4,515.5L656.4,514.6L657.4,513.6L658.4,512.7L659.4,511.8L660.4,510.9L661.4,510.0L662.4,509.1L663.5,508.2L664.5,507.3L665.5,506.4L666.6,505.5L667.7,504.7L668.7,503.8L669.8,503.0L670.9,502.1L672.0,501.3L673.1,500.4L674.2,499.6L675.3,498.8L676.4,498.0L677.5,497.2L678.7,496.4L679.8,495.6L681.0,494.9L682.1,494.1L683.3,493.3L684.4,492.6L685.6,491.8L686.8,491.1L688.0,490.4L689.2,489.6L690.4,488.9L691.6,488.2L692.8,487.5L694.0,486.8L695.2,486.1L696.4,485.5L697.7,484.8L698.9,484.1L700.2,483.5L701.4,482.9L702.7,482.2L703.9,481.6L705.2,481.0L706.4,480.4L707.7,479.8L709.0,479.2L710.3,478.6L711.6,478.0L712.9,477.4L714.2,476.9L715.5,476.3L716.8,475.8L718.1,475.2L719.4,474.7L720.7,474.2L722.1,473.7L723.4,473.2L724.7,472.7L726.0,472.2L727.4,471.7L728.7,471.2L730.1,470.8L731.4,470.3L732.8,469.9L734.1,469.4L735.5,469.0L736.9,468.6L738.2,468.2L739.6,467.8L741.0,467.4L742.4,467.0L743.7,466.6L745.1,466.3L746.5,465.9L747.9,465.6L749.3,465.2L750.7,464.9L752.1,464.6L753.5,464.2L754.9,463.9L756.3,463.6L757.7,463.3L759.1,463.1L760.5,462.8L761.9,462.5L763.4,462.3L764.8,462.0L766.2,461.8L767.6,461.6L769.0,461.3L770.5,461.1L771.9,460.9L773.3,460.7L774.7,460.5L776.2,460.4L777.6,460.2L779.0,460.0L780.5,459.9L781.9,459.8L783.3,459.6L784.8,459.5L786.2,459.4L787.6,459.3L789.1,459.2L790.5,459.1L791.9,459.0L793.4,458.9L794.8,458.9L796.3,458.8L797.7,458.8L799.1,458.8L800.6,458.7L802.0,458.7L803.4,458.7L804.9,458.7L806.3,458.7L807.8,458.7L809.2,458.8L810.6,458.8L812.1,458.8L813.5,458.9L814.9,459.0L816.4,459.0L817.8,459.1L819.2,459.2L820.7,459.3L822.1,459.4L823.5,459.5L825.0,459.7L826.4,459.8L827.8,459.9L829.4,460.1L831.1,460.3L833.5,460.7L838.0,461.3L840.5,454.9L842.0,451.6L843.2,449.1L844.4,446.7L845.6,444.6L847.2,442.6L849.1,440.9L851.9,439.1L857.5,436.3L867.3,438.1L873.0,439.2L877.6,440.3L882.5,441.6L887.5,442.9L891.9,444.2L895.9,445.5L899.9,447.0L906.3,449.5L908.4,453.3L909.3,455.9L909.8,458.4L910.0,461.4L910.0,464.8L910.0,468.2L910.0,471.5L910.0,475.4L910.0,482.5L915.6,487.4L918.7,490.0L921.0,491.7L923.8,493.6L928.6,496.5L939.4,487.9L945.1,483.5L949.3,480.4L953.3,477.7L956.9,475.3L960.3,473.3L963.7,471.8L966.8,470.6L969.8,469.9L973.0,469.5L976.2,469.5L979.7,469.9L983.3,470.6L987.0,471.9L990.9,473.8L995.0,476.2L999.2,479.2L1003.5,482.4L1008.0,485.8L1012.7,489.5L1017.5,493.4L1022.3,497.3L1027.2,501.0L1032.0,504.7L1036.8,508.3L1041.4,511.6L1045.7,514.6L1050.9,517.9L1059.8,523.1L1059.0,531.2L1058.2,535.6L1057.1,538.9L1055.7,542.1L1053.9,545.1L1051.9,548.1L1049.8,550.8L1047.4,553.5L1044.9,556.0L1042.1,558.3L1039.0,560.6L1035.7,562.8L1032.2,564.8L1028.5,566.7L1024.6,568.5L1020.7,570.1L1016.6,571.6L1012.6,573.0L1008.5,574.4L1004.4,575.7L1000.3,577.0L996.4,578.1L992.5,579.1L988.9,580.0L985.3,580.7L981.8,581.4L978.4,582.0L974.2,582.7L966.9,583.8L965.3,593.4L964.5,598.0L964.1,600.7L963.8,602.7L963.7,603.9L963.5,605.1L963.4,606.3L963.2,607.5L963.0,608.7L962.8,609.9L962.6,611.1L962.3,612.3L962.1,613.5L961.8,614.7L961.6,615.9L961.3,617.1L961.0,618.2L960.6,619.4L960.3,620.6L960.0,621.8L959.6,623.0L959.2,624.2L958.8,625.4L958.4,626.6L958.0,627.7L957.6,628.9L957.1,630.1L956.7,631.3L956.2,632.5L955.7,633.6L955.2,634.8L954.7,636.0L954.2,637.1L953.6,638.3L953.0,639.5L952.5,640.6L951.9,641.8L951.3,642.9L950.7,644.1L950.0,645.2L949.4,646.4L948.7,647.5L948.1,648.6L947.4,649.8L946.7,650.9L946.0,652.0L945.2,653.1L944.5,654.2L943.8,655.3L943.0,656.4L942.2,657.5L941.4,658.6L940.6,659.7L939.8,660.8L939.0,661.9L938.1,663.0L937.3,664.0L936.4,665.1L935.5,666.2L934.6,667.2L933.7,668.3L932.8,669.3L931.8,670.3L930.9,671.4L929.9,672.4L928.9,673.4L927.9,674.4L926.9,675.4L925.9,676.4L924.9,677.4L923.9,678.4L922.8,679.4L921.8,680.3L920.7,681.3L919.6,682.3L918.5,683.2L917.4,684.2L916.3,685.1L915.1,686.0L914.0,686.9L912.9,687.8L911.7,688.7L910.5,689.6L909.3,690.5L908.1,691.4L906.9,692.3L905.7,693.1L904.5,694.0L903.2,694.8L902.0,695.7L900.7,696.5L899.4,697.3L898.2,698.1L896.9,698.9L895.6,699.7L894.3,700.5L892.9,701.3L891.6,702.0L890.3,702.8L888.9,703.5L887.6,704.3L886.2,705.0L884.8,705.7L883.4,706.4L882.0,707.1L880.6,707.8L879.2,708.5L877.8,709.1L876.4,709.8L875.0,710.4L873.5,711.0L872.1,711.7L870.6,712.3L869.2,712.9L867.7,713.5L866.2,714.0L864.7,714.6L863.2,715.2L861.7,715.7L860.2,716.2L858.7,716.8L857.2,717.3L855.7,717.8L854.2,718.3L852.6,718.8L851.1,719.2L849.5,719.7L848.0,720.1L846.4,720.5L844.9,721.0L843.3,721.4L841.7,721.8L840.2,722.2L838.6,722.5L837.0,722.9L835.4,723.2L833.8,723.6L832.2,723.9L830.6,724.2L829.0,724.5L827.4,724.8L825.8,725.1L824.2,725.3L822.6,725.6L821.0,725.8L819.4,726.1L817.7,726.3L816.1,726.5L814.5,726.7L812.9,726.9L811.2,727.0L809.6,727.2L808.0,727.3L806.4,727.4L804.7,727.6L803.1,727.7L801.5,727.8L799.8,727.8L798.2,727.9L796.6,728.0L794.9,728.0L793.3,728.0L791.7,728.0L790.0,728.0L788.4,728.0L786.8,728.0L785.1,728.0L783.5,727.9L781.9,727.9L780.3,727.8L778.6,727.7L777.0,727.6L775.4,727.5L773.8,727.4L772.2,727.3L770.6,727.1L769.0,727.0L767.3,726.8L765.7,726.6L764.1,726.4L762.6,726.2L761.0,726.0L759.4,725.8L757.8,725.5L756.2,725.3L754.6,725.0L753.1,724.7L751.5,724.4L749.9,724.1L748.4,723.8L746.8,723.5L745.3,723.1L743.7,722.8L742.2,722.4L740.7,722.0L739.1,721.6L737.6,721.2L736.1,720.8L734.6,720.4L733.1,720.0L731.6,719.5L730.1,719.1L728.7,718.6L727.2,718.1L725.7,717.6L724.3,717.1L722.8,716.6L721.4,716.1L719.9,715.6L718.5,715.0L717.1,714.5L715.7,713.9L714.3,713.3L712.9,712.7L711.5,712.2L710.1,711.5L708.7,710.9L707.4,710.3L706.0,709.7L704.7,709.0L703.4,708.3L702.0,707.7L700.7,707.0L699.4,706.3L698.1,705.6L696.8,704.9L695.6,704.2L694.3,703.5L693.0,702.7L691.8,702.0L690.6,701.2L689.3,700.5L688.1,699.7L686.9,698.9L685.7,698.1L684.6,697.3L683.4,696.5L682.2,695.7L681.1,694.9L679.9,694.0L678.8,693.2L677.7,692.3L676.6,691.5L675.5,690.6L674.4,689.7L673.4,688.8L672.3,688.0L671.3,687.1L670.2,686.2L669.2,685.2L668.2,684.3L667.2,683.4L666.2,682.5L665.3,681.5L664.3,680.6L663.4,679.6L662.4,678.7L661.5,677.7L660.6,676.7L659.7,675.7L658.8,674.7L657.5,673.4L655.6,671.8L652.6,669.2L646.2,664.0L640.5,673.1L637.8,677.5L636.1,680.1L634.8,682.0L634.0,683.2L633.1,684.3L632.3,685.5L631.4,686.7L630.6,687.8L629.7,689.0L628.8,690.2L628.0,691.3L627.1,692.5L626.2,693.6L625.3,694.8L624.4,695.9L623.5,697.0L622.5,698.2L621.6,699.3L620.7,700.5L619.7,701.6L618.8,702.7L617.8,703.9L616.8,705.0L615.9,706.1L614.9,707.2L613.9,708.4L612.9,709.5L611.9,710.6L610.9,711.7L609.8,712.8L608.8,713.9L607.8,715.0L606.7,716.1L605.6,717.2L604.6,718.3L603.5,719.4L602.4,720.5L601.3,721.6L600.2,722.7L599.0,723.8L597.9,724.8L596.8,725.9L595.6,727.0L594.5,728.0L593.3,729.1L592.1,730.1L590.9,731.2L589.7,732.2L588.5,733.3L587.3,734.3L586.0,735.3L584.8,736.3L583.5,737.4L582.3,738.4L581.0,739.4L579.7,740.4L578.4,741.4L577.1,742.4L575.8,743.3L574.5,744.3L573.1,745.3L571.8,746.2L570.4,747.2L569.0,748.1L567.7,749.1L566.3,750.0L564.9,750.9L563.5,751.9L562.0,752.8L560.6,753.7L559.2,754.6L557.7,755.4L556.2,756.3L554.8,757.2L553.3,758.0L551.8,758.9L550.3,759.7L548.8,760.5L547.2,761.3L545.7,762.1L544.2,762.9L542.6,763.7L541.1,764.5L539.5,765.3L537.9,766.0L536.3,766.7L534.7,767.5L533.1,768.2L531.5,768.9L529.9,769.6L528.3,770.3L526.6,770.9L525.0,771.6L523.3,772.2L521.7,772.8L520.0,773.4L518.3,774.0L516.7,774.6L515.0,775.2L513.3,775.7L511.6,776.3L509.9,776.8L508.2,777.3L506.5,777.8L504.8,778.3L503.0,778.7L501.3,779.2L499.6,779.6L497.9,780.0L496.1,780.4L494.4,780.8L492.6,781.2L490.9,781.5L489.1,781.8L487.4,782.2L485.6,782.5L483.9,782.7L482.1,783.0L480.4,783.2L478.6,783.5L476.9,783.7L475.1,783.9L473.4,784.1L471.6,784.2L469.9,784.4L468.1,784.5L466.4,784.6L464.6,784.7L462.9,784.8L461.1,784.8L459.4,784.9L457.7,784.9L455.9,784.9L454.2,784.9L452.5,784.9L450.8,784.9L449.0,784.8L447.3,784.8L445.6,784.7L443.9,784.6L442.2,784.5L440.5,784.3L438.8,784.2L437.2,784.0L435.5,783.8L433.8,783.7L432.2,783.4L430.5,783.2L428.9,783.0L427.2,782.7L425.6,782.5L424.0,782.2L422.3,781.9L420.7,781.6L419.1,781.3L417.5,780.9L415.9,780.6L414.4,780.2L412.8,779.8L411.2,779.4L409.7,779.0L408.2,778.6L406.6,778.2L405.1,777.8L403.6,777.3L402.1,776.8L400.6,776.3L399.1,775.9L397.6,775.3L396.2,774.8L394.7,774.3L393.3,773.8L391.8,773.2L390.4,772.6L389.0,772.1L387.6,771.5L386.2,770.9L384.8,770.3L383.5,769.6L382.1,769.0L380.8,768.4L379.4,767.7L378.1,767.1L376.8,766.4L375.5,765.7L374.2,765.0L372.9,764.3L371.6,763.6L370.4,762.9L369.1,762.2L367.9,761.4L366.7,760.7L365.5,759.9L364.3,759.2L363.1,758.4L361.9,757.6L360.7,756.8L359.6,756.0L358.4,755.2L357.3,754.4L356.2,753.6L355.1,752.7L354.0,751.9L352.9,751.1L351.8,750.2L350.7,749.4L349.7,748.5L348.6,747.6L347.6,746.7L346.6,745.9L345.6,745.0L344.6,744.1L343.6,743.2L342.6,742.3L341.6,741.3Z" fill="url(#tg)"/>
<clipPath id="cav"><path d="M353.1,732.7L352.3,731.9L351.4,731.0L350.5,730.1L349.6,729.3L348.8,728.4L347.9,727.5L347.1,726.6L346.2,725.7L345.4,724.8L344.6,723.9L343.8,723.0L343.0,722.1L342.2,721.1L341.5,720.2L340.7,719.3L339.9,718.4L339.2,717.4L338.4,716.5L337.7,715.5L337.0,714.6L336.3,713.6L335.6,712.6L334.9,711.7L334.2,710.7L333.5,709.7L332.8,708.7L332.1,707.7L331.4,706.7L330.8,705.7L330.1,704.7L329.5,703.7L328.8,702.7L328.2,701.7L327.6,700.7L326.9,699.7L326.3,698.6L325.7,697.6L325.1,696.6L324.5,695.5L323.9,694.5L323.3,693.4L322.7,692.4L322.1,691.3L321.5,690.3L320.9,689.2L320.3,688.2L319.7,687.1L319.1,686.0L318.6,685.0L318.0,683.9L317.4,682.8L316.9,681.7L316.3,680.6L315.7,679.5L315.2,678.4L314.6,677.3L314.0,676.2L313.5,675.1L313.0,674.1L312.4,673.0L311.9,671.9L311.4,670.8L310.9,669.7L310.5,668.7L310.0,667.6L309.6,666.5L309.2,665.5L308.8,664.4L308.4,663.4L308.1,662.3L307.8,661.3L307.5,660.2L307.3,659.2L307.1,658.2L306.9,657.1L306.8,656.1L306.6,655.0L306.5,653.9L306.5,652.9L306.4,651.8L306.4,650.7L306.4,649.6L306.5,648.4L306.5,647.3L306.6,646.2L306.7,645.1L306.9,643.9L307.0,642.8L307.2,641.6L307.4,640.5L307.6,639.3L307.8,638.2L308.1,637.0L308.4,635.8L308.7,634.7L309.0,633.5L309.4,632.3L309.7,631.2L310.1,630.0L310.5,628.8L310.9,627.7L311.3,626.5L311.8,625.3L312.3,624.2L312.7,623.0L313.2,621.8L313.7,620.7L314.3,619.5L314.8,618.4L315.4,617.2L315.9,616.0L316.5,614.9L317.1,613.7L317.7,612.6L318.4,611.4L319.0,610.3L319.6,609.1L320.3,608.0L321.0,606.8L321.6,605.7L322.3,604.5L323.0,603.4L323.7,602.3L324.4,601.1L325.2,600.0L325.9,598.9L326.6,597.8L327.4,596.7L328.2,595.6L328.9,594.5L329.7,593.4L330.5,592.3L331.3,591.2L332.1,590.1L332.9,589.1L333.7,588.0L334.5,586.9L335.3,585.9L336.2,584.8L337.0,583.8L337.9,582.7L338.8,581.7L339.6,580.7L340.5,579.6L341.4,578.6L342.3,577.6L343.2,576.6L344.1,575.6L345.0,574.6L346.0,573.6L346.9,572.6L347.8,571.6L348.8,570.7L349.8,569.7L350.7,568.7L351.7,567.8L352.7,566.8L353.7,565.9L354.7,565.0L355.7,564.0L356.7,563.1L357.7,562.2L358.7,561.3L359.8,560.4L360.8,559.5L361.9,558.6L362.9,557.7L364.0,556.9L365.1,556.0L366.1,555.1L367.2,554.3L368.3,553.4L369.4,552.6L370.5,551.8L371.6,551.0L372.8,550.1L373.9,549.3L375.0,548.5L376.2,547.8L377.3,547.0L378.5,546.2L379.6,545.4L380.8,544.7L381.9,543.9L383.1,543.2L384.3,542.5L385.5,541.8L386.7,541.0L387.9,540.3L389.1,539.6L390.3,539.0L391.5,538.3L392.7,537.6L393.9,537.0L395.2,536.3L396.4,535.7L397.6,535.0L398.9,534.4L400.1,533.8L401.4,533.2L402.6,532.6L403.9,532.0L405.1,531.4L406.4,530.9L406.9,530.6L408.1,530.3L410.9,529.5L416.3,528.1L435.0,523.6L440.6,513.7L442.2,511.1L443.7,508.7L445.5,506.1L447.5,503.3L449.5,500.7L451.6,498.2L453.7,495.7L455.9,493.5L458.0,491.5L459.9,489.8L462.4,487.8L473.7,479.8L470.7,470.3L470.1,468.1L469.8,466.5L469.6,464.7L469.5,463.2L469.6,462.0L469.8,461.0L470.1,460.1L470.7,459.2L471.4,458.1L472.4,456.9L473.7,455.7L475.1,454.5L476.7,453.3L478.7,452.1L481.3,450.8L484.1,449.5L487.5,448.2L491.7,446.9L496.7,445.6L502.6,444.2L508.8,442.8L514.9,441.5L521.1,440.2L527.3,439.0L533.1,437.8L538.3,436.8L543.1,435.9L547.3,435.1L550.6,434.6L553.3,434.2L555.3,434.1L556.5,434.1L557.8,434.2L559.1,434.4L560.6,434.8L562.2,435.3L563.8,436.0L565.5,436.8L567.1,437.8L568.7,438.9L570.1,440.1L571.4,441.6L572.7,443.3L573.9,445.3L574.9,447.4L575.8,449.7L576.5,452.2L577.1,455.0L577.6,458.3L578.2,461.6L578.8,465.2L579.4,469.0L580.1,472.6L580.7,476.1L581.3,479.5L581.9,482.7L582.6,486.0L583.5,489.2L584.4,492.3L585.3,495.2L586.2,498.0L587.1,501.1L588.0,504.3L588.9,507.6L589.6,510.6L590.1,513.3L590.6,516.4L591.7,525.3L601.1,531.6L604.5,533.9L607.0,535.7L609.4,537.5L611.8,539.3L614.1,541.1L616.2,542.7L618.6,544.7L633.3,557.2L648.4,539.6L651.0,536.4L652.7,534.5L654.0,532.9L654.9,531.9L655.7,530.9L656.5,530.0L657.3,529.0L658.1,528.1L659.0,527.2L659.8,526.3L660.7,525.3L661.5,524.4L662.4,523.5L663.3,522.6L664.2,521.7L665.1,520.8L666.0,519.9L666.9,519.1L667.8,518.2L668.7,517.3L669.7,516.5L670.6,515.6L671.6,514.8L672.5,513.9L673.5,513.1L674.4,512.3L675.4,511.5L676.4,510.7L677.4,509.9L678.4,509.1L679.4,508.3L680.4,507.5L681.5,506.7L682.5,506.0L683.5,505.2L684.6,504.4L685.6,503.7L686.7,502.9L687.7,502.2L688.8,501.5L689.9,500.8L690.9,500.1L692.0,499.3L693.1,498.7L694.2,498.0L695.3,497.3L696.4,496.6L697.5,495.9L698.7,495.3L699.8,494.6L700.9,494.0L702.1,493.3L703.2,492.7L704.4,492.1L705.5,491.5L706.7,490.8L707.8,490.2L709.0,489.6L710.2,489.1L711.4,488.5L712.5,487.9L713.7,487.3L714.9,486.8L716.1,486.2L717.3,485.7L718.5,485.2L719.7,484.6L720.9,484.1L722.2,483.6L723.4,483.1L724.6,482.6L725.8,482.1L727.1,481.6L728.3,481.2L729.6,480.7L730.8,480.2L732.1,479.8L733.3,479.4L734.6,478.9L735.8,478.5L737.1,478.1L738.4,477.7L739.6,477.3L740.9,476.9L742.2,476.5L743.5,476.1L744.7,475.7L746.0,475.4L747.3,475.0L748.6,474.7L749.9,474.4L751.2,474.0L752.5,473.7L753.8,473.4L755.1,473.1L756.4,472.8L757.7,472.5L759.0,472.2L760.3,472.0L761.7,471.7L763.0,471.4L764.3,471.2L765.6,470.9L766.9,470.7L768.3,470.5L769.6,470.3L770.9,470.1L772.2,469.9L773.6,469.7L774.9,469.5L776.2,469.3L777.6,469.2L778.9,469.0L780.2,468.9L781.6,468.7L782.9,468.6L784.3,468.5L785.6,468.3L786.9,468.2L788.3,468.1L789.6,468.0L791.0,468.0L792.3,467.9L793.7,467.8L795.0,467.8L796.3,467.7L797.7,467.7L799.0,467.6L800.4,467.6L801.7,467.6L803.1,467.6L804.4,467.6L805.7,467.6L807.1,467.6L808.4,467.7L809.8,467.7L811.1,467.7L812.5,467.8L813.8,467.8L815.1,467.9L816.5,468.0L817.8,468.1L819.1,468.2L820.5,468.3L821.8,468.4L823.2,468.5L824.5,468.6L825.8,468.8L825.9,468.8L826.3,468.9L827.2,469.0L828.5,469.2L832.1,469.7L835.6,470.3L839.1,471.0L842.6,471.7L846.1,472.5L849.6,473.4L853.0,474.3L856.4,475.3L859.8,476.3L863.1,477.4L866.4,478.6L869.7,479.8L872.9,481.1L876.1,482.5L879.2,483.9L882.3,485.3L885.4,486.9L888.4,488.5L891.3,490.1L894.2,491.8L897.1,493.6L899.9,495.4L902.7,497.3L905.3,499.2L907.1,500.5L907.8,501.0L908.8,501.5L909.8,502.0L910.9,502.4L912.1,502.7L913.3,502.9L914.5,503.0L915.8,503.1L917.0,503.0L917.9,502.9L919.4,502.7L929.8,509.1L948.4,494.3L953.9,490.0L957.9,487.0L961.6,484.4L964.8,482.3L967.5,480.7L969.8,479.6L971.6,479.0L973.0,478.7L974.3,478.5L975.8,478.5L977.6,478.7L979.5,479.1L981.5,479.8L984.0,481.0L987.1,482.9L990.8,485.5L995.0,488.7L999.4,492.0L1003.9,495.6L1008.7,499.5L1013.6,503.4L1018.5,507.3L1023.4,511.1L1028.4,514.8L1033.2,518.4L1037.9,521.6L1043.5,525.1L1046.8,527.1L1046.6,529.6L1045.9,533.2L1045.0,535.7L1044.0,538.1L1042.5,540.5L1040.9,543.0L1039.1,545.3L1037.1,547.4L1035.1,549.4L1032.8,551.3L1030.3,553.2L1027.6,554.9L1024.6,556.6L1021.3,558.3L1018.0,559.8L1014.6,561.2L1010.9,562.6L1007.0,564.0L1003.1,565.3L999.2,566.5L995.4,567.7L991.8,568.7L988.3,569.6L985.0,570.4L981.7,571.1L978.5,571.7L975.3,572.3L971.5,572.9L955.4,575.2L952.5,591.8L951.7,596.5L951.3,599.3L951.0,601.4L950.8,602.7L950.7,603.8L950.5,604.9L950.3,606.0L950.2,607.1L950.0,608.2L949.7,609.3L949.5,610.4L949.3,611.5L949.0,612.6L948.8,613.7L948.5,614.8L948.2,615.9L947.9,617.0L947.6,618.1L947.3,619.2L946.9,620.3L946.6,621.4L946.2,622.5L945.8,623.5L945.4,624.6L945.0,625.7L944.6,626.8L944.2,627.9L943.7,629.0L943.3,630.0L942.8,631.1L942.3,632.2L941.8,633.3L941.3,634.3L940.8,635.4L940.3,636.5L939.7,637.5L939.2,638.6L938.6,639.6L938.0,640.7L937.4,641.7L936.8,642.8L936.2,643.8L935.5,644.9L934.9,645.9L934.2,646.9L933.6,647.9L932.9,649.0L932.2,650.0L931.5,651.0L930.7,652.0L930.0,653.0L929.3,654.0L928.5,655.0L927.7,656.0L926.9,657.0L926.1,658.0L925.3,658.9L924.5,659.9L923.7,660.9L922.8,661.8L922.0,662.8L921.1,663.8L920.2,664.7L919.3,665.6L918.4,666.6L917.5,667.5L916.6,668.4L915.7,669.3L914.7,670.2L913.8,671.1L912.8,672.0L911.8,672.9L910.8,673.8L909.8,674.7L908.8,675.6L907.8,676.4L906.8,677.3L905.7,678.1L904.7,679.0L903.6,679.8L902.5,680.6L901.4,681.4L900.3,682.3L899.2,683.1L898.1,683.9L897.0,684.6L895.9,685.4L894.7,686.2L893.6,687.0L892.4,687.7L891.2,688.5L890.0,689.2L888.9,689.9L887.7,690.7L886.4,691.4L885.2,692.1L884.0,692.8L882.8,693.5L881.5,694.2L880.3,694.8L879.0,695.5L877.8,696.1L876.5,696.8L875.2,697.4L873.9,698.0L872.6,698.7L871.3,699.3L870.0,699.9L868.7,700.5L867.4,701.0L866.0,701.6L864.7,702.2L863.3,702.7L862.0,703.2L860.6,703.8L859.3,704.3L857.9,704.8L856.5,705.3L855.1,705.8L853.7,706.3L852.3,706.7L850.9,707.2L849.5,707.6L848.1,708.1L846.7,708.5L845.3,708.9L843.9,709.3L842.4,709.7L841.0,710.1L839.6,710.5L838.1,710.8L836.7,711.2L835.2,711.5L833.8,711.9L832.3,712.2L830.8,712.5L829.4,712.8L827.9,713.1L826.4,713.4L825.0,713.6L823.5,713.9L822.0,714.1L820.5,714.3L819.1,714.6L817.6,714.8L816.1,715.0L814.6,715.1L813.1,715.3L811.6,715.5L810.1,715.6L808.6,715.8L807.1,715.9L805.6,716.0L804.1,716.1L802.6,716.2L801.1,716.3L799.6,716.4L798.1,716.4L796.6,716.5L795.1,716.5L793.6,716.6L792.1,716.6L790.6,716.6L789.1,716.6L787.6,716.5L786.1,716.5L784.6,716.5L783.2,716.4L781.7,716.4L780.2,716.3L778.7,716.2L777.2,716.1L775.7,716.0L774.2,715.9L772.8,715.7L771.3,715.6L769.8,715.4L768.3,715.3L766.9,715.1L765.4,714.9L763.9,714.7L762.5,714.5L761.0,714.3L759.6,714.0L758.1,713.8L756.7,713.5L755.2,713.3L753.8,713.0L752.4,712.7L751.0,712.4L749.5,712.1L748.1,711.8L746.7,711.4L745.3,711.1L743.9,710.7L742.5,710.4L741.1,710.0L739.7,709.6L738.4,709.2L737.0,708.8L735.6,708.4L734.3,708.0L732.9,707.5L731.6,707.1L730.2,706.6L728.9,706.1L727.6,705.7L726.2,705.2L724.9,704.7L723.6,704.2L722.3,703.7L721.0,703.1L719.8,702.6L718.5,702.0L717.2,701.5L716.0,700.9L714.7,700.4L713.5,699.8L712.2,699.2L711.0,698.6L709.8,698.0L708.6,697.3L707.4,696.7L706.2,696.1L705.0,695.4L703.8,694.8L702.7,694.1L701.5,693.4L700.4,692.7L699.2,692.1L698.1,691.4L697.0,690.6L695.9,689.9L694.8,689.2L693.7,688.5L692.6,687.7L691.6,687.0L690.5,686.2L689.5,685.5L688.4,684.7L687.4,683.9L686.4,683.1L685.4,682.3L684.4,681.5L683.4,680.7L682.4,679.9L681.5,679.1L680.5,678.3L679.6,677.4L678.6,676.6L677.7,675.7L676.8,674.9L675.9,674.0L675.0,673.2L674.2,672.3L673.3,671.4L672.5,670.5L671.6,669.6L670.8,668.7L669.7,667.5L667.9,665.8L665.8,663.9L662.6,661.2L643.4,645.6L628.7,668.9L625.9,673.2L624.3,675.7L623.2,677.4L622.5,678.3L621.7,679.5L620.8,680.6L620.0,681.7L619.2,682.8L618.4,683.9L617.5,685.0L616.7,686.1L615.8,687.2L615.0,688.3L614.1,689.4L613.2,690.5L612.3,691.6L611.5,692.7L610.6,693.8L609.7,694.9L608.8,695.9L607.9,697.0L606.9,698.1L606.0,699.2L605.1,700.2L604.1,701.3L603.2,702.3L602.2,703.4L601.3,704.5L600.3,705.5L599.3,706.5L598.3,707.6L597.4,708.6L596.4,709.7L595.3,710.7L594.3,711.7L593.3,712.8L592.3,713.8L591.2,714.8L590.2,715.8L589.1,716.8L588.1,717.8L587.0,718.8L585.9,719.8L584.8,720.8L583.7,721.8L582.6,722.8L581.5,723.7L580.3,724.7L579.2,725.7L578.1,726.6L576.9,727.6L575.7,728.5L574.6,729.5L573.4,730.4L572.2,731.4L571.0,732.3L569.8,733.2L568.6,734.1L567.3,735.0L566.1,735.9L564.9,736.8L563.6,737.7L562.4,738.6L561.1,739.4L559.8,740.3L558.5,741.2L557.2,742.0L555.9,742.9L554.6,743.7L553.3,744.5L551.9,745.3L550.6,746.1L549.3,746.9L547.9,747.7L546.5,748.5L545.2,749.3L543.8,750.0L542.4,750.8L541.0,751.5L539.6,752.3L538.2,753.0L536.8,753.7L535.3,754.4L533.9,755.1L532.4,755.8L531.0,756.5L529.5,757.1L528.1,757.8L526.6,758.4L525.1,759.0L523.6,759.6L522.2,760.2L520.7,760.8L519.2,761.4L517.7,762.0L516.1,762.5L514.6,763.1L513.1,763.6L511.6,764.1L510.1,764.6L508.5,765.1L507.0,765.5L505.4,766.0L503.9,766.4L502.3,766.9L500.8,767.3L499.2,767.7L497.7,768.1L496.1,768.4L494.6,768.8L493.0,769.1L491.4,769.5L489.9,769.8L488.3,770.1L486.7,770.3L485.1,770.6L483.6,770.9L482.0,771.1L480.4,771.3L478.8,771.5L477.2,771.7L475.7,771.9L474.1,772.1L472.5,772.2L470.9,772.3L469.3,772.4L467.7,772.5L466.2,772.6L464.6,772.7L463.0,772.8L461.4,772.8L459.9,772.8L458.3,772.8L456.7,772.8L455.2,772.8L453.6,772.8L452.0,772.7L450.5,772.7L448.9,772.6L447.4,772.5L445.9,772.4L444.3,772.3L442.8,772.2L441.3,772.0L439.7,771.9L438.2,771.7L436.7,771.5L435.2,771.3L433.7,771.1L432.2,770.8L430.7,770.6L429.2,770.4L427.7,770.1L426.3,769.8L424.8,769.5L423.4,769.2L421.9,768.9L420.5,768.6L419.0,768.2L417.6,767.9L416.2,767.5L414.8,767.1L413.4,766.7L412.0,766.3L410.6,765.9L409.2,765.5L407.8,765.0L406.5,764.6L405.1,764.1L403.8,763.6L402.4,763.2L401.1,762.7L399.8,762.2L398.5,761.6L397.2,761.1L395.9,760.6L394.6,760.0L393.3,759.5L392.1,758.9L390.8,758.3L389.6,757.7L388.3,757.1L387.1,756.5L385.9,755.9L384.7,755.3L383.5,754.7L382.3,754.0L381.1,753.4L380.0,752.7L378.8,752.0L377.7,751.3L376.5,750.7L375.4,750.0L374.3,749.2L373.2,748.5L372.1,747.8L371.0,747.1L369.9,746.3L368.8,745.6L367.8,744.9L366.7,744.1L365.7,743.3L364.7,742.6L363.7,741.8L362.7,741.0L361.7,740.2L360.7,739.4L359.7,738.6L358.7,737.8L357.8,736.9L356.8,736.1L355.9,735.3L355.0,734.4L354.1,733.6Z"/></clipPath>
<g clip-path="url(#cav)">
<path d="M353.1,732.7L352.3,731.9L351.4,731.0L350.5,730.1L349.6,729.3L348.8,728.4L347.9,727.5L347.1,726.6L346.2,725.7L345.4,724.8L344.6,723.9L343.8,723.0L343.0,722.1L342.2,721.1L341.5,720.2L340.7,719.3L339.9,718.4L339.2,717.4L338.4,716.5L337.7,715.5L337.0,714.6L336.3,713.6L335.6,712.6L334.9,711.7L334.2,710.7L333.5,709.7L332.8,708.7L332.1,707.7L331.4,706.7L330.8,705.7L330.1,704.7L329.5,703.7L328.8,702.7L328.2,701.7L327.6,700.7L326.9,699.7L326.3,698.6L325.7,697.6L325.1,696.6L324.5,695.5L323.9,694.5L323.3,693.4L322.7,692.4L322.1,691.3L321.5,690.3L320.9,689.2L320.3,688.2L319.7,687.1L319.1,686.0L318.6,685.0L318.0,683.9L317.4,682.8L316.9,681.7L316.3,680.6L315.7,679.5L315.2,678.4L314.6,677.3L314.0,676.2L313.5,675.1L313.0,674.1L312.4,673.0L311.9,671.9L311.4,670.8L310.9,669.7L310.5,668.7L310.0,667.6L309.6,666.5L309.2,665.5L308.8,664.4L308.4,663.4L308.1,662.3L307.8,661.3L307.5,660.2L307.3,659.2L307.1,658.2L306.9,657.1L306.8,656.1L306.6,655.0L306.5,653.9L306.5,652.9L306.4,651.8L306.4,650.7L306.4,649.6L306.5,648.4L306.5,647.3L306.6,646.2L306.7,645.1L306.9,643.9L307.0,642.8L307.2,641.6L307.4,640.5L307.6,639.3L307.8,638.2L308.1,637.0L308.4,635.8L308.7,634.7L309.0,633.5L309.4,632.3L309.7,631.2L310.1,630.0L310.5,628.8L310.9,627.7L311.3,626.5L311.8,625.3L312.3,624.2L312.7,623.0L313.2,621.8L313.7,620.7L314.3,619.5L314.8,618.4L315.4,617.2L315.9,616.0L316.5,614.9L317.1,613.7L317.7,612.6L318.4,611.4L319.0,610.3L319.6,609.1L320.3,608.0L321.0,606.8L321.6,605.7L322.3,604.5L323.0,603.4L323.7,602.3L324.4,601.1L325.2,600.0L325.9,598.9L326.6,597.8L327.4,596.7L328.2,595.6L328.9,594.5L329.7,593.4L330.5,592.3L331.3,591.2L332.1,590.1L332.9,589.1L333.7,588.0L334.5,586.9L335.3,585.9L336.2,584.8L337.0,583.8L337.9,582.7L338.8,581.7L339.6,580.7L340.5,579.6L341.4,578.6L342.3,577.6L343.2,576.6L344.1,575.6L345.0,574.6L346.0,573.6L346.9,572.6L347.8,571.6L348.8,570.7L349.8,569.7L350.7,568.7L351.7,567.8L352.7,566.8L353.7,565.9L354.7,565.0L355.7,564.0L356.7,563.1L357.7,562.2L358.7,561.3L359.8,560.4L360.8,559.5L361.9,558.6L362.9,557.7L364.0,556.9L365.1,556.0L366.1,555.1L367.2,554.3L368.3,553.4L369.4,552.6L370.5,551.8L371.6,551.0L372.8,550.1L373.9,549.3L375.0,548.5L376.2,547.8L377.3,547.0L378.5,546.2L379.6,545.4L380.8,544.7L381.9,543.9L383.1,543.2L384.3,542.5L385.5,541.8L386.7,541.0L387.9,540.3L389.1,539.6L390.3,539.0L391.5,538.3L392.7,537.6L393.9,537.0L395.2,536.3L396.4,535.7L397.6,535.0L398.9,534.4L400.1,533.8L401.4,533.2L402.6,532.6L403.9,532.0L405.1,531.4L406.4,530.9L406.9,530.6L408.1,530.3L410.9,529.5L416.3,528.1L435.0,523.6L440.6,513.7L442.2,511.1L443.7,508.7L445.5,506.1L447.5,503.3L449.5,500.7L451.6,498.2L453.7,495.7L455.9,493.5L458.0,491.5L459.9,489.8L462.4,487.8L473.7,479.8L470.7,470.3L470.1,468.1L469.8,466.5L469.6,464.7L469.5,463.2L469.6,462.0L469.8,461.0L470.1,460.1L470.7,459.2L471.4,458.1L472.4,456.9L473.7,455.7L475.1,454.5L476.7,453.3L478.7,452.1L481.3,450.8L484.1,449.5L487.5,448.2L491.7,446.9L496.7,445.6L502.6,444.2L508.8,442.8L514.9,441.5L521.1,440.2L527.3,439.0L533.1,437.8L538.3,436.8L543.1,435.9L547.3,435.1L550.6,434.6L553.3,434.2L555.3,434.1L556.5,434.1L557.8,434.2L559.1,434.4L560.6,434.8L562.2,435.3L563.8,436.0L565.5,436.8L567.1,437.8L568.7,438.9L570.1,440.1L571.4,441.6L572.7,443.3L573.9,445.3L574.9,447.4L575.8,449.7L576.5,452.2L577.1,455.0L577.6,458.3L578.2,461.6L578.8,465.2L579.4,469.0L580.1,472.6L580.7,476.1L581.3,479.5L581.9,482.7L582.6,486.0L583.5,489.2L584.4,492.3L585.3,495.2L586.2,498.0L587.1,501.1L588.0,504.3L588.9,507.6L589.6,510.6L590.1,513.3L590.6,516.4L591.7,525.3L601.1,531.6L604.5,533.9L607.0,535.7L609.4,537.5L611.8,539.3L614.1,541.1L616.2,542.7L618.6,544.7L633.3,557.2L648.4,539.6L651.0,536.4L652.7,534.5L654.0,532.9L654.9,531.9L655.7,530.9L656.5,530.0L657.3,529.0L658.1,528.1L659.0,527.2L659.8,526.3L660.7,525.3L661.5,524.4L662.4,523.5L663.3,522.6L664.2,521.7L665.1,520.8L666.0,519.9L666.9,519.1L667.8,518.2L668.7,517.3L669.7,516.5L670.6,515.6L671.6,514.8L672.5,513.9L673.5,513.1L674.4,512.3L675.4,511.5L676.4,510.7L677.4,509.9L678.4,509.1L679.4,508.3L680.4,507.5L681.5,506.7L682.5,506.0L683.5,505.2L684.6,504.4L685.6,503.7L686.7,502.9L687.7,502.2L688.8,501.5L689.9,500.8L690.9,500.1L692.0,499.3L693.1,498.7L694.2,498.0L695.3,497.3L696.4,496.6L697.5,495.9L698.7,495.3L699.8,494.6L700.9,494.0L702.1,493.3L703.2,492.7L704.4,492.1L705.5,491.5L706.7,490.8L707.8,490.2L709.0,489.6L710.2,489.1L711.4,488.5L712.5,487.9L713.7,487.3L714.9,486.8L716.1,486.2L717.3,485.7L718.5,485.2L719.7,484.6L720.9,484.1L722.2,483.6L723.4,483.1L724.6,482.6L725.8,482.1L727.1,481.6L728.3,481.2L729.6,480.7L730.8,480.2L732.1,479.8L733.3,479.4L734.6,478.9L735.8,478.5L737.1,478.1L738.4,477.7L739.6,477.3L740.9,476.9L742.2,476.5L743.5,476.1L744.7,475.7L746.0,475.4L747.3,475.0L748.6,474.7L749.9,474.4L751.2,474.0L752.5,473.7L753.8,473.4L755.1,473.1L756.4,472.8L757.7,472.5L759.0,472.2L760.3,472.0L761.7,471.7L763.0,471.4L764.3,471.2L765.6,470.9L766.9,470.7L768.3,470.5L769.6,470.3L770.9,470.1L772.2,469.9L773.6,469.7L774.9,469.5L776.2,469.3L777.6,469.2L778.9,469.0L780.2,468.9L781.6,468.7L782.9,468.6L784.3,468.5L785.6,468.3L786.9,468.2L788.3,468.1L789.6,468.0L791.0,468.0L792.3,467.9L793.7,467.8L795.0,467.8L796.3,467.7L797.7,467.7L799.0,467.6L800.4,467.6L801.7,467.6L803.1,467.6L804.4,467.6L805.7,467.6L807.1,467.6L808.4,467.7L809.8,467.7L811.1,467.7L812.5,467.8L813.8,467.8L815.1,467.9L816.5,468.0L817.8,468.1L819.1,468.2L820.5,468.3L821.8,468.4L823.2,468.5L824.5,468.6L825.8,468.8L825.9,468.8L826.3,468.9L827.2,469.0L828.5,469.2L832.1,469.7L835.6,470.3L839.1,471.0L842.6,471.7L846.1,472.5L849.6,473.4L853.0,474.3L856.4,475.3L859.8,476.3L863.1,477.4L866.4,478.6L869.7,479.8L872.9,481.1L876.1,482.5L879.2,483.9L882.3,485.3L885.4,486.9L888.4,488.5L891.3,490.1L894.2,491.8L897.1,493.6L899.9,495.4L902.7,497.3L905.3,499.2L907.1,500.5L907.8,501.0L908.8,501.5L909.8,502.0L910.9,502.4L912.1,502.7L913.3,502.9L914.5,503.0L915.8,503.1L917.0,503.0L917.9,502.9L919.4,502.7L929.8,509.1L948.4,494.3L953.9,490.0L957.9,487.0L961.6,484.4L964.8,482.3L967.5,480.7L969.8,479.6L971.6,479.0L973.0,478.7L974.3,478.5L975.8,478.5L977.6,478.7L979.5,479.1L981.5,479.8L984.0,481.0L987.1,482.9L990.8,485.5L995.0,488.7L999.4,492.0L1003.9,495.6L1008.7,499.5L1013.6,503.4L1018.5,507.3L1023.4,511.1L1028.4,514.8L1033.2,518.4L1037.9,521.6L1043.5,525.1L1046.8,527.1L1046.6,529.6L1045.9,533.2L1045.0,535.7L1044.0,538.1L1042.5,540.5L1040.9,543.0L1039.1,545.3L1037.1,547.4L1035.1,549.4L1032.8,551.3L1030.3,553.2L1027.6,554.9L1024.6,556.6L1021.3,558.3L1018.0,559.8L1014.6,561.2L1010.9,562.6L1007.0,564.0L1003.1,565.3L999.2,566.5L995.4,567.7L991.8,568.7L988.3,569.6L985.0,570.4L981.7,571.1L978.5,571.7L975.3,572.3L971.5,572.9L955.4,575.2L952.5,591.8L951.7,596.5L951.3,599.3L951.0,601.4L950.8,602.7L950.7,603.8L950.5,604.9L950.3,606.0L950.2,607.1L950.0,608.2L949.7,609.3L949.5,610.4L949.3,611.5L949.0,612.6L948.8,613.7L948.5,614.8L948.2,615.9L947.9,617.0L947.6,618.1L947.3,619.2L946.9,620.3L946.6,621.4L946.2,622.5L945.8,623.5L945.4,624.6L945.0,625.7L944.6,626.8L944.2,627.9L943.7,629.0L943.3,630.0L942.8,631.1L942.3,632.2L941.8,633.3L941.3,634.3L940.8,635.4L940.3,636.5L939.7,637.5L939.2,638.6L938.6,639.6L938.0,640.7L937.4,641.7L936.8,642.8L936.2,643.8L935.5,644.9L934.9,645.9L934.2,646.9L933.6,647.9L932.9,649.0L932.2,650.0L931.5,651.0L930.7,652.0L930.0,653.0L929.3,654.0L928.5,655.0L927.7,656.0L926.9,657.0L926.1,658.0L925.3,658.9L924.5,659.9L923.7,660.9L922.8,661.8L922.0,662.8L921.1,663.8L920.2,664.7L919.3,665.6L918.4,666.6L917.5,667.5L916.6,668.4L915.7,669.3L914.7,670.2L913.8,671.1L912.8,672.0L911.8,672.9L910.8,673.8L909.8,674.7L908.8,675.6L907.8,676.4L906.8,677.3L905.7,678.1L904.7,679.0L903.6,679.8L902.5,680.6L901.4,681.4L900.3,682.3L899.2,683.1L898.1,683.9L897.0,684.6L895.9,685.4L894.7,686.2L893.6,687.0L892.4,687.7L891.2,688.5L890.0,689.2L888.9,689.9L887.7,690.7L886.4,691.4L885.2,692.1L884.0,692.8L882.8,693.5L881.5,694.2L880.3,694.8L879.0,695.5L877.8,696.1L876.5,696.8L875.2,697.4L873.9,698.0L872.6,698.7L871.3,699.3L870.0,699.9L868.7,700.5L867.4,701.0L866.0,701.6L864.7,702.2L863.3,702.7L862.0,703.2L860.6,703.8L859.3,704.3L857.9,704.8L856.5,705.3L855.1,705.8L853.7,706.3L852.3,706.7L850.9,707.2L849.5,707.6L848.1,708.1L846.7,708.5L845.3,708.9L843.9,709.3L842.4,709.7L841.0,710.1L839.6,710.5L838.1,710.8L836.7,711.2L835.2,711.5L833.8,711.9L832.3,712.2L830.8,712.5L829.4,712.8L827.9,713.1L826.4,713.4L825.0,713.6L823.5,713.9L822.0,714.1L820.5,714.3L819.1,714.6L817.6,714.8L816.1,715.0L814.6,715.1L813.1,715.3L811.6,715.5L810.1,715.6L808.6,715.8L807.1,715.9L805.6,716.0L804.1,716.1L802.6,716.2L801.1,716.3L799.6,716.4L798.1,716.4L796.6,716.5L795.1,716.5L793.6,716.6L792.1,716.6L790.6,716.6L789.1,716.6L787.6,716.5L786.1,716.5L784.6,716.5L783.2,716.4L781.7,716.4L780.2,716.3L778.7,716.2L777.2,716.1L775.7,716.0L774.2,715.9L772.8,715.7L771.3,715.6L769.8,715.4L768.3,715.3L766.9,715.1L765.4,714.9L763.9,714.7L762.5,714.5L761.0,714.3L759.6,714.0L758.1,713.8L756.7,713.5L755.2,713.3L753.8,713.0L752.4,712.7L751.0,712.4L749.5,712.1L748.1,711.8L746.7,711.4L745.3,711.1L743.9,710.7L742.5,710.4L741.1,710.0L739.7,709.6L738.4,709.2L737.0,708.8L735.6,708.4L734.3,708.0L732.9,707.5L731.6,707.1L730.2,706.6L728.9,706.1L727.6,705.7L726.2,705.2L724.9,704.7L723.6,704.2L722.3,703.7L721.0,703.1L719.8,702.6L718.5,702.0L717.2,701.5L716.0,700.9L714.7,700.4L713.5,699.8L712.2,699.2L711.0,698.6L709.8,698.0L708.6,697.3L707.4,696.7L706.2,696.1L705.0,695.4L703.8,694.8L702.7,694.1L701.5,693.4L700.4,692.7L699.2,692.1L698.1,691.4L697.0,690.6L695.9,689.9L694.8,689.2L693.7,688.5L692.6,687.7L691.6,687.0L690.5,686.2L689.5,685.5L688.4,684.7L687.4,683.9L686.4,683.1L685.4,682.3L684.4,681.5L683.4,680.7L682.4,679.9L681.5,679.1L680.5,678.3L679.6,677.4L678.6,676.6L677.7,675.7L676.8,674.9L675.9,674.0L675.0,673.2L674.2,672.3L673.3,671.4L672.5,670.5L671.6,669.6L670.8,668.7L669.7,667.5L667.9,665.8L665.8,663.9L662.6,661.2L643.4,645.6L628.7,668.9L625.9,673.2L624.3,675.7L623.2,677.4L622.5,678.3L621.7,679.5L620.8,680.6L620.0,681.7L619.2,682.8L618.4,683.9L617.5,685.0L616.7,686.1L615.8,687.2L615.0,688.3L614.1,689.4L613.2,690.5L612.3,691.6L611.5,692.7L610.6,693.8L609.7,694.9L608.8,695.9L607.9,697.0L606.9,698.1L606.0,699.2L605.1,700.2L604.1,701.3L603.2,702.3L602.2,703.4L601.3,704.5L600.3,705.5L599.3,706.5L598.3,707.6L597.4,708.6L596.4,709.7L595.3,710.7L594.3,711.7L593.3,712.8L592.3,713.8L591.2,714.8L590.2,715.8L589.1,716.8L588.1,717.8L587.0,718.8L585.9,719.8L584.8,720.8L583.7,721.8L582.6,722.8L581.5,723.7L580.3,724.7L579.2,725.7L578.1,726.6L576.9,727.6L575.7,728.5L574.6,729.5L573.4,730.4L572.2,731.4L571.0,732.3L569.8,733.2L568.6,734.1L567.3,735.0L566.1,735.9L564.9,736.8L563.6,737.7L562.4,738.6L561.1,739.4L559.8,740.3L558.5,741.2L557.2,742.0L555.9,742.9L554.6,743.7L553.3,744.5L551.9,745.3L550.6,746.1L549.3,746.9L547.9,747.7L546.5,748.5L545.2,749.3L543.8,750.0L542.4,750.8L541.0,751.5L539.6,752.3L538.2,753.0L536.8,753.7L535.3,754.4L533.9,755.1L532.4,755.8L531.0,756.5L529.5,757.1L528.1,757.8L526.6,758.4L525.1,759.0L523.6,759.6L522.2,760.2L520.7,760.8L519.2,761.4L517.7,762.0L516.1,762.5L514.6,763.1L513.1,763.6L511.6,764.1L510.1,764.6L508.5,765.1L507.0,765.5L505.4,766.0L503.9,766.4L502.3,766.9L500.8,767.3L499.2,767.7L497.7,768.1L496.1,768.4L494.6,768.8L493.0,769.1L491.4,769.5L489.9,769.8L488.3,770.1L486.7,770.3L485.1,770.6L483.6,770.9L482.0,771.1L480.4,771.3L478.8,771.5L477.2,771.7L475.7,771.9L474.1,772.1L472.5,772.2L470.9,772.3L469.3,772.4L467.7,772.5L466.2,772.6L464.6,772.7L463.0,772.8L461.4,772.8L459.9,772.8L458.3,772.8L456.7,772.8L455.2,772.8L453.6,772.8L452.0,772.7L450.5,772.7L448.9,772.6L447.4,772.5L445.9,772.4L444.3,772.3L442.8,772.2L441.3,772.0L439.7,771.9L438.2,771.7L436.7,771.5L435.2,771.3L433.7,771.1L432.2,770.8L430.7,770.6L429.2,770.4L427.7,770.1L426.3,769.8L424.8,769.5L423.4,769.2L421.9,768.9L420.5,768.6L419.0,768.2L417.6,767.9L416.2,767.5L414.8,767.1L413.4,766.7L412.0,766.3L410.6,765.9L409.2,765.5L407.8,765.0L406.5,764.6L405.1,764.1L403.8,763.6L402.4,763.2L401.1,762.7L399.8,762.2L398.5,761.6L397.2,761.1L395.9,760.6L394.6,760.0L393.3,759.5L392.1,758.9L390.8,758.3L389.6,757.7L388.3,757.1L387.1,756.5L385.9,755.9L384.7,755.3L383.5,754.7L382.3,754.0L381.1,753.4L380.0,752.7L378.8,752.0L377.7,751.3L376.5,750.7L375.4,750.0L374.3,749.2L373.2,748.5L372.1,747.8L371.0,747.1L369.9,746.3L368.8,745.6L367.8,744.9L366.7,744.1L365.7,743.3L364.7,742.6L363.7,741.8L362.7,741.0L361.7,740.2L360.7,739.4L359.7,738.6L358.7,737.8L357.8,736.9L356.8,736.1L355.9,735.3L355.0,734.4L354.1,733.6Z" fill="url(#tg)"/>
<path d="M308.8,664.4L308.4,663.4L317.1,688.1L317.4,689.1Z" fill="#4c4c4c" stroke="#4c4c4c" stroke-width="0.7"/>
<path d="M308.4,663.4L308.1,662.3L307.8,661.3L316.4,686.0L316.7,687.1L317.1,688.1Z" fill="#504e51" stroke="#504e51" stroke-width="0.7"/>
<path d="M307.8,661.3L307.5,660.2L307.3,659.2L315.9,683.9L316.2,685.0L316.4,686.0Z" fill="#535055" stroke="#535055" stroke-width="0.7"/>
<path d="M307.3,659.2L307.1,658.2L315.7,682.9L315.9,683.9Z" fill="#57515a" stroke="#57515a" stroke-width="0.7"/>
<path d="M307.1,658.2L306.9,657.1L306.8,656.1L315.4,680.8L315.5,681.9L315.7,682.9Z" fill="#5a535f" stroke="#5a535f" stroke-width="0.7"/>
<path d="M306.8,656.1L306.6,655.0L306.5,653.9L315.2,678.7L315.3,679.8L315.4,680.8Z" fill="#5e5564" stroke="#5e5564" stroke-width="0.7"/>
<path d="M306.5,653.9L306.5,652.9L315.1,677.6L315.2,678.7Z" fill="#615768" stroke="#615768" stroke-width="0.7"/>
<path d="M306.5,652.9L306.4,651.8L306.4,650.7L315.0,675.4L315.0,676.5L315.1,677.6Z" fill="#65586d" stroke="#65586d" stroke-width="0.7"/>
<path d="M306.4,650.7L306.4,649.6L306.5,648.4L315.1,673.2L315.0,674.3L315.0,675.4Z" fill="#685a72" stroke="#685a72" stroke-width="0.7"/>
<path d="M306.5,648.4L306.5,647.3L306.6,646.2L315.2,671.0L315.1,672.1L315.1,673.2Z" fill="#6c5c77" stroke="#6c5c77" stroke-width="0.7"/>
<path d="M306.6,646.2L306.7,645.1L306.9,643.9L307.0,642.8L315.6,667.6L315.4,668.7L315.3,669.9L315.2,671.0Z" fill="#6f5e7b" stroke="#6f5e7b" stroke-width="0.7"/>
<path d="M307.0,642.8L307.2,641.6L307.4,640.5L315.9,665.3L315.7,666.4L315.6,667.6Z" fill="#735f80" stroke="#735f80" stroke-width="0.7"/>
<path d="M307.4,640.5L307.6,639.3L307.8,638.2L308.1,637.0L316.6,661.8L316.4,663.0L316.1,664.1L315.9,665.3Z" fill="#766185" stroke="#766185" stroke-width="0.7"/>
<path d="M308.1,637.0L308.4,635.8L308.7,634.7L317.2,659.5L316.9,660.7L316.6,661.8Z" fill="#7a638a" stroke="#7a638a" stroke-width="0.7"/>
<path d="M308.7,634.7L309.0,633.5L309.4,632.3L309.7,631.2L318.2,656.0L317.8,657.2L317.5,658.3L317.2,659.5Z" fill="#7d658e" stroke="#7d658e" stroke-width="0.7"/>
<path d="M309.7,631.2L310.1,630.0L310.5,628.8L310.9,627.7L319.4,652.5L318.9,653.7L318.6,654.8L318.2,656.0Z" fill="#816693" stroke="#816693" stroke-width="0.7"/>
<path d="M310.9,627.7L311.3,626.5L311.8,625.3L312.3,624.2L312.7,623.0L321.1,647.9L320.7,649.0L320.2,650.2L319.8,651.4L319.4,652.5Z" fill="#846898" stroke="#846898" stroke-width="0.7"/>
<path d="M312.7,623.0L313.2,621.8L313.7,620.7L314.3,619.5L314.8,618.4L323.2,643.2L322.6,644.4L322.1,645.5L321.6,646.7L321.1,647.9Z" fill="#886a9d" stroke="#886a9d" stroke-width="0.7"/>
<path d="M314.8,618.4L315.4,617.2L315.9,616.0L316.5,614.9L317.1,613.7L325.4,638.6L324.8,639.8L324.3,640.9L323.7,642.1L323.2,643.2Z" fill="#8b6ca1" stroke="#8b6ca1" stroke-width="0.7"/>
<path d="M317.1,613.7L317.7,612.6L318.4,611.4L319.0,610.3L319.6,609.1L320.3,608.0L328.5,632.9L327.9,634.0L327.2,635.2L326.6,636.3L326.0,637.5L325.4,638.6Z" fill="#8f6ea6" stroke="#8f6ea6" stroke-width="0.7"/>
<path d="M320.3,608.0L321.0,606.8L321.6,605.7L322.3,604.5L323.0,603.4L323.7,602.3L324.4,601.1L332.6,626.1L331.9,627.2L331.2,628.3L330.5,629.4L329.8,630.6L329.2,631.7L328.5,632.9Z" fill="#926fab" stroke="#926fab" stroke-width="0.7"/>
<path d="M324.4,601.1L325.2,600.0L325.9,598.9L326.6,597.8L327.4,596.7L328.2,595.6L328.9,594.5L337.0,619.4L336.2,620.5L335.5,621.6L334.7,622.7L334.0,623.8L333.3,624.9L332.6,626.1Z" fill="#9671b0" stroke="#9671b0" stroke-width="0.7"/>
<path d="M328.9,594.5L329.7,593.4L330.5,592.3L331.3,591.2L332.1,590.1L332.9,589.1L333.7,588.0L341.6,612.9L340.8,614.0L340.0,615.1L339.3,616.1L338.5,617.2L337.7,618.3L337.0,619.4Z" fill="#9973b4" stroke="#9973b4" stroke-width="0.7"/>
<path d="M333.7,588.0L334.5,586.9L335.3,585.9L336.2,584.8L337.0,583.8L337.9,582.7L338.8,581.7L346.6,606.6L345.8,607.7L344.9,608.7L344.1,609.8L343.3,610.8L342.4,611.9L341.6,612.9Z" fill="#9d75b9" stroke="#9d75b9" stroke-width="0.7"/>
<path d="M338.8,581.7L339.6,580.7L340.5,579.6L341.4,578.6L342.3,577.6L343.2,576.6L344.1,575.6L351.9,600.6L351.0,601.6L350.1,602.6L349.2,603.6L348.3,604.6L347.5,605.6L346.6,606.6Z" fill="#a076be" stroke="#a076be" stroke-width="0.7"/>
<path d="M344.1,575.6L345.0,574.6L346.0,573.6L346.9,572.6L347.8,571.6L348.8,570.7L349.8,569.7L350.7,568.7L358.4,593.7L357.4,594.7L356.5,595.6L355.5,596.6L354.6,597.6L353.7,598.6L352.8,599.6L351.9,600.6Z" fill="#a478c3" stroke="#a478c3" stroke-width="0.7"/>
<path d="M350.7,568.7L351.7,567.8L352.7,566.8L353.7,565.9L354.7,565.0L355.7,564.0L356.7,563.1L357.7,562.2L365.2,587.2L364.2,588.1L363.2,589.0L362.2,590.0L361.3,590.9L360.3,591.8L359.3,592.8L358.4,593.7Z" fill="#a77ac7" stroke="#a77ac7" stroke-width="0.7"/>
<path d="M357.7,562.2L358.7,561.3L359.8,560.4L360.8,559.5L361.9,558.6L362.9,557.7L364.0,556.9L365.1,556.0L372.5,581.0L371.4,581.9L370.4,582.7L369.3,583.6L368.3,584.5L367.3,585.4L366.2,586.3L365.2,587.2Z" fill="#ab7ccc" stroke="#ab7ccc" stroke-width="0.7"/>
<path d="M365.1,556.0L366.1,555.1L367.2,554.3L368.3,553.4L369.4,552.6L370.5,551.8L371.6,551.0L372.8,550.1L380.0,575.2L378.9,576.0L377.8,576.8L376.7,577.6L375.7,578.5L374.6,579.3L373.5,580.2L372.5,581.0Z" fill="#ae7dd1" stroke="#ae7dd1" stroke-width="0.7"/>
<path d="M372.8,550.1L373.9,549.3L375.0,548.5L376.2,547.8L377.3,547.0L378.5,546.2L379.6,545.4L380.8,544.7L381.9,543.9L383.1,543.2L390.2,568.2L389.0,569.0L387.9,569.7L386.8,570.5L385.6,571.2L384.5,572.0L383.4,572.8L382.2,573.6L381.1,574.4L380.0,575.2Z" fill="#b27fd6" stroke="#b27fd6" stroke-width="0.7"/>
<path d="M383.1,543.2L384.3,542.5L385.5,541.8L386.7,541.0L387.9,540.3L389.1,539.6L390.3,539.0L391.5,538.3L392.7,537.6L393.9,537.0L395.2,536.3L402.1,561.3L400.8,562.0L399.6,562.7L398.4,563.3L397.2,564.0L396.1,564.7L394.9,565.4L393.7,566.1L392.5,566.8L391.4,567.5L390.2,568.2Z" fill="#b581da" stroke="#b581da" stroke-width="0.7"/>
<path d="M395.2,536.3L396.4,535.7L397.6,535.0L398.9,534.4L400.1,533.8L401.4,533.2L402.6,532.6L403.9,532.0L405.1,531.4L406.4,530.9L406.9,530.6L413.6,555.7L413.1,555.9L411.9,556.5L410.6,557.1L409.4,557.7L408.2,558.2L406.9,558.8L405.7,559.5L404.5,560.1L403.3,560.7L402.1,561.3Z" fill="#b983df" stroke="#b983df" stroke-width="0.7"/>
<path d="M406.9,530.6L408.1,530.3L410.9,529.5L413.6,528.8L416.3,528.1L419.4,527.4L422.5,526.6L425.6,525.9L428.8,525.1L431.9,524.4L435.0,523.6L441.3,548.7L438.2,549.4L435.2,550.2L432.1,550.9L429.0,551.7L425.9,552.4L422.8,553.2L420.2,553.9L417.6,554.5L414.8,555.3L413.6,555.7Z" fill="#bc84e4" stroke="#bc84e4" stroke-width="0.7"/>
<path d="M435.0,523.6L436.4,521.1L437.8,518.7L439.2,516.2L440.6,513.7L446.7,538.8L445.4,541.3L444.0,543.7L442.7,546.2L441.3,548.7Z" fill="#8b6ca1" stroke="#8b6ca1" stroke-width="0.7"/>
<path d="M440.6,513.7L441.4,512.4L442.2,511.1L443.7,508.7L449.8,533.8L448.3,536.1L447.5,537.5L446.7,538.8Z" fill="#8f6ea6" stroke="#8f6ea6" stroke-width="0.7"/>
<path d="M443.7,508.7L444.6,507.4L445.5,506.1L451.6,531.2L450.7,532.5L449.8,533.8Z" fill="#926fab" stroke="#926fab" stroke-width="0.7"/>
<path d="M445.5,506.1L446.5,504.7L447.5,503.3L448.5,502.0L449.5,500.7L455.5,525.8L454.5,527.1L453.5,528.4L452.6,529.8L451.6,531.2Z" fill="#9671b0" stroke="#9671b0" stroke-width="0.7"/>
<path d="M449.5,500.7L450.6,499.4L451.6,498.2L457.6,523.3L456.5,524.5L455.5,525.8Z" fill="#9973b4" stroke="#9973b4" stroke-width="0.7"/>
<path d="M451.6,498.2L452.7,497.0L453.7,495.7L459.7,520.8L458.6,522.1L457.6,523.3Z" fill="#9d75b9" stroke="#9d75b9" stroke-width="0.7"/>
<path d="M453.7,495.7L454.8,494.6L455.9,493.5L461.8,518.6L460.7,519.7L459.7,520.8Z" fill="#a076be" stroke="#a076be" stroke-width="0.7"/>
<path d="M455.9,493.5L458.0,491.5L463.8,516.6L461.8,518.6Z" fill="#a478c3" stroke="#a478c3" stroke-width="0.7"/>
<path d="M458.0,491.5L459.9,489.8L465.7,514.9L463.8,516.6Z" fill="#a77ac7" stroke="#a77ac7" stroke-width="0.7"/>
<path d="M459.9,489.8L462.4,487.8L468.2,512.9L465.7,514.9Z" fill="#ab7ccc" stroke="#ab7ccc" stroke-width="0.7"/>
<path d="M462.4,487.8L464.7,486.2L467.0,484.6L469.2,483.0L471.5,481.4L473.7,479.8L479.3,505.0L477.1,506.5L474.9,508.1L472.7,509.7L470.4,511.3L468.2,512.9Z" fill="#ae7dd1" stroke="#ae7dd1" stroke-width="0.7"/>
<path d="M470.1,468.1L469.8,466.5L475.4,491.6L475.7,493.3Z" fill="#504e51" stroke="#504e51" stroke-width="0.7"/>
<path d="M469.8,466.5L469.6,464.7L475.2,489.8L475.4,491.6Z" fill="#535055" stroke="#535055" stroke-width="0.7"/>
<path d="M469.6,464.7L469.5,463.2L475.1,488.3L475.2,489.8Z" fill="#5a535f" stroke="#5a535f" stroke-width="0.7"/>
<path d="M469.5,463.2L469.6,462.0L475.2,487.1L475.1,488.3Z" fill="#65586d" stroke="#65586d" stroke-width="0.7"/>
<path d="M469.6,462.0L469.8,461.0L475.4,486.1L475.2,487.1Z" fill="#6f5e7b" stroke="#6f5e7b" stroke-width="0.7"/>
<path d="M469.8,461.0L470.1,460.1L475.7,485.2L475.4,486.1Z" fill="#7d658e" stroke="#7d658e" stroke-width="0.7"/>
<path d="M470.1,460.1L470.7,459.2L476.3,484.3L475.7,485.2Z" fill="#8b6ca1" stroke="#8b6ca1" stroke-width="0.7"/>
<path d="M470.7,459.2L471.4,458.1L477.0,483.2L476.3,484.3Z" fill="#926fab" stroke="#926fab" stroke-width="0.7"/>
<path d="M471.4,458.1L472.4,456.9L478.0,482.1L477.0,483.2Z" fill="#9d75b9" stroke="#9d75b9" stroke-width="0.7"/>
<path d="M472.4,456.9L473.7,455.7L479.3,480.8L478.0,482.1Z" fill="#a076be" stroke="#a076be" stroke-width="0.7"/>
<path d="M473.7,455.7L475.1,454.5L480.6,479.6L479.3,480.8Z" fill="#a77ac7" stroke="#a77ac7" stroke-width="0.7"/>
<path d="M475.1,454.5L476.7,453.3L482.2,478.5L480.6,479.6Z" fill="#ae7dd1" stroke="#ae7dd1" stroke-width="0.7"/>
<path d="M476.7,453.3L478.7,452.1L484.2,477.2L482.2,478.5Z" fill="#b581da" stroke="#b581da" stroke-width="0.7"/>
<path d="M478.7,452.1L481.3,450.8L486.7,475.9L484.2,477.2Z" fill="#b983df" stroke="#b983df" stroke-width="0.7"/>
<path d="M481.3,450.8L484.1,449.5L485.8,448.8L487.5,448.2L492.8,473.3L491.2,474.0L489.5,474.6L486.7,475.9Z" fill="#bc84e4" stroke="#bc84e4" stroke-width="0.7"/>
<path d="M487.5,448.2L489.6,447.5L491.7,446.9L494.2,446.2L496.7,445.6L499.7,444.9L502.6,444.2L505.7,443.5L508.8,442.8L511.9,442.2L514.9,441.5L518.0,440.9L521.1,440.2L524.2,439.6L527.3,439.0L530.2,438.4L533.1,437.8L535.7,437.3L538.3,436.8L540.7,436.3L543.1,435.9L545.2,435.5L547.3,435.1L548.9,434.8L550.6,434.6L553.3,434.2L555.3,434.1L559.7,459.2L557.7,459.4L555.1,459.7L553.4,459.9L551.8,460.2L549.7,460.6L547.7,461.0L545.3,461.5L543.0,461.9L540.4,462.4L537.8,463.0L534.9,463.5L532.1,464.1L529.0,464.7L526.0,465.4L522.9,466.0L519.9,466.6L516.8,467.3L513.8,468.0L510.8,468.6L507.7,469.3L504.8,470.0L501.9,470.7L499.4,471.3L497.0,472.0L494.9,472.7L492.8,473.3Z" fill="#c086e9" stroke="#c086e9" stroke-width="0.7"/>
<path d="M555.3,434.1L556.5,434.1L560.9,459.2L559.7,459.2Z" fill="#bc84e4" stroke="#bc84e4" stroke-width="0.7"/>
<path d="M556.5,434.1L557.8,434.2L562.1,459.3L560.9,459.2Z" fill="#b983df" stroke="#b983df" stroke-width="0.7"/>
<path d="M557.8,434.2L559.1,434.4L563.5,459.5L562.1,459.3Z" fill="#b27fd6" stroke="#b27fd6" stroke-width="0.7"/>
<path d="M559.1,434.4L560.6,434.8L564.9,459.9L563.5,459.5Z" fill="#ae7dd1" stroke="#ae7dd1" stroke-width="0.7"/>
<path d="M560.6,434.8L562.2,435.3L566.5,460.4L564.9,459.9Z" fill="#a77ac7" stroke="#a77ac7" stroke-width="0.7"/>
<path d="M562.2,435.3L563.8,436.0L568.1,461.1L566.5,460.4Z" fill="#a076be" stroke="#a076be" stroke-width="0.7"/>
<path d="M563.8,436.0L565.5,436.8L569.7,462.0L568.1,461.1Z" fill="#9d75b9" stroke="#9d75b9" stroke-width="0.7"/>
<path d="M565.5,436.8L567.1,437.8L571.4,463.0L569.7,462.0Z" fill="#9671b0" stroke="#9671b0" stroke-width="0.7"/>
<path d="M567.1,437.8L568.7,438.9L572.9,464.0L571.4,463.0Z" fill="#8f6ea6" stroke="#8f6ea6" stroke-width="0.7"/>
<path d="M568.7,438.9L570.1,440.1L574.3,465.3L572.9,464.0Z" fill="#846898" stroke="#846898" stroke-width="0.7"/>
<path d="M570.1,440.1L571.4,441.6L575.6,466.7L574.3,465.3Z" fill="#7d658e" stroke="#7d658e" stroke-width="0.7"/>
<path d="M571.4,441.6L572.7,443.3L576.9,468.4L575.6,466.7Z" fill="#735f80" stroke="#735f80" stroke-width="0.7"/>
<path d="M572.7,443.3L573.9,445.3L578.1,470.4L576.9,468.4Z" fill="#6c5c77" stroke="#6c5c77" stroke-width="0.7"/>
<path d="M573.9,445.3L574.9,447.4L579.1,472.5L578.1,470.4Z" fill="#65586d" stroke="#65586d" stroke-width="0.7"/>
<path d="M574.9,447.4L575.4,448.6L575.8,449.7L580.0,474.8L579.5,473.7L579.1,472.5Z" fill="#5e5564" stroke="#5e5564" stroke-width="0.7"/>
<path d="M575.8,449.7L576.2,450.9L576.5,452.2L580.6,477.3L580.3,476.1L580.0,474.8Z" fill="#57515a" stroke="#57515a" stroke-width="0.7"/>
<path d="M576.5,452.2L576.8,453.6L577.1,455.0L581.2,480.1L580.9,478.7L580.6,477.3Z" fill="#504e51" stroke="#504e51" stroke-width="0.7"/>
<path d="M577.1,455.0L577.4,456.6L577.6,458.3L577.9,459.9L578.2,461.6L578.5,463.4L578.8,465.2L583.0,490.3L582.7,488.5L582.4,486.8L582.1,485.1L581.8,483.4L581.5,481.7L581.2,480.1Z" fill="#4c4c4c" stroke="#4c4c4c" stroke-width="0.7"/>
<path d="M579.4,469.0L579.7,470.8L580.1,472.6L580.4,474.4L580.7,476.1L581.0,477.8L581.3,479.5L585.4,504.6L585.1,502.9L584.8,501.2L584.5,499.5L584.2,497.7L583.9,495.9L583.6,494.1Z" fill="#4c4c4c" stroke="#4c4c4c" stroke-width="0.7"/>
<path d="M581.3,479.5L581.6,481.1L581.9,482.7L582.3,484.3L582.6,486.0L586.8,511.1L586.4,509.4L586.0,507.8L585.7,506.2L585.4,504.6Z" fill="#504e51" stroke="#504e51" stroke-width="0.7"/>
<path d="M582.6,486.0L583.1,487.6L583.5,489.2L587.6,514.2L587.2,512.6L586.8,511.1Z" fill="#535055" stroke="#535055" stroke-width="0.7"/>
<path d="M583.5,489.2L583.9,490.7L584.4,492.3L588.5,517.4L588.0,515.8L587.6,514.2Z" fill="#57515a" stroke="#57515a" stroke-width="0.7"/>
<path d="M584.4,492.3L584.9,493.7L585.3,495.2L589.4,520.2L589.0,518.8L588.5,517.4Z" fill="#5a535f" stroke="#5a535f" stroke-width="0.7"/>
<path d="M585.3,495.2L585.8,496.6L586.2,498.0L586.7,499.6L587.1,501.1L587.6,502.7L588.0,504.3L592.1,529.3L591.7,527.7L591.2,526.1L590.8,524.6L590.3,523.1L589.9,521.7L589.4,520.2Z" fill="#57515a" stroke="#57515a" stroke-width="0.7"/>
<path d="M588.0,504.3L588.4,505.9L588.9,507.6L589.2,509.1L589.6,510.6L593.7,535.7L593.3,534.1L593.0,532.6L592.5,531.0L592.1,529.3Z" fill="#535055" stroke="#535055" stroke-width="0.7"/>
<path d="M589.6,510.6L589.9,512.0L590.1,513.3L594.2,538.4L594.0,537.0L593.7,535.7Z" fill="#504e51" stroke="#504e51" stroke-width="0.7"/>
<path d="M591.7,525.3L594.1,526.8L596.4,528.4L598.8,530.0L601.1,531.6L602.8,532.7L604.5,533.9L605.7,534.8L607.0,535.7L610.9,560.7L609.6,559.8L608.4,558.9L606.7,557.8L605.1,556.6L602.8,555.0L600.5,553.5L598.1,551.9L595.8,550.3Z" fill="#8f6ea6" stroke="#8f6ea6" stroke-width="0.7"/>
<path d="M607.0,535.7L608.2,536.6L609.4,537.5L610.6,538.4L611.8,539.3L614.1,541.1L617.9,566.1L615.7,564.3L614.5,563.4L613.3,562.5L612.1,561.6L610.9,560.7Z" fill="#8b6ca1" stroke="#8b6ca1" stroke-width="0.7"/>
<path d="M614.1,541.1L616.2,542.7L617.4,543.7L618.6,544.7L620.7,546.4L622.8,548.2L624.9,550.0L627.0,551.8L629.1,553.6L631.2,555.4L633.3,557.2L636.9,582.2L634.8,580.4L632.7,578.6L630.6,576.8L628.5,575.0L626.5,573.2L624.4,571.4L622.3,569.7L621.1,568.7L620.0,567.7L617.9,566.1Z" fill="#886a9d" stroke="#886a9d" stroke-width="0.7"/>
<path d="M633.3,557.2L635.2,555.0L637.1,552.7L639.0,550.5L640.9,548.3L642.8,546.1L644.7,543.9L646.5,541.7L648.4,539.6L649.7,538.0L651.0,536.4L652.7,534.5L654.0,532.9L657.2,558.0L656.0,559.5L654.3,561.5L653.0,563.0L651.7,564.6L649.9,566.8L648.0,568.9L646.2,571.1L644.3,573.3L642.5,575.5L640.6,577.7L638.8,579.9L636.9,582.2Z" fill="#926fab" stroke="#926fab" stroke-width="0.7"/>
<path d="M654.0,532.9L654.9,531.9L658.1,556.9L657.2,558.0Z" fill="#8f6ea6" stroke="#8f6ea6" stroke-width="0.7"/>
<path d="M654.9,531.9L655.7,530.9L656.5,530.0L657.3,529.0L658.1,528.1L659.0,527.2L662.1,552.2L661.3,553.1L660.5,554.1L659.7,555.0L658.9,556.0L658.1,556.9Z" fill="#926fab" stroke="#926fab" stroke-width="0.7"/>
<path d="M659.0,527.2L659.8,526.3L660.7,525.3L661.5,524.4L662.4,523.5L663.3,522.6L666.4,547.6L665.5,548.5L664.6,549.5L663.8,550.4L662.9,551.3L662.1,552.2Z" fill="#9671b0" stroke="#9671b0" stroke-width="0.7"/>
<path d="M663.3,522.6L664.2,521.7L665.1,520.8L666.0,519.9L666.9,519.1L667.8,518.2L668.7,517.3L671.7,542.4L670.8,543.2L669.9,544.1L669.0,545.0L668.1,545.9L667.2,546.8L666.4,547.6Z" fill="#9973b4" stroke="#9973b4" stroke-width="0.7"/>
<path d="M668.7,517.3L669.7,516.5L670.6,515.6L671.6,514.8L672.5,513.9L673.5,513.1L674.4,512.3L677.4,537.3L676.4,538.2L675.5,539.0L674.5,539.8L673.6,540.7L672.6,541.5L671.7,542.4Z" fill="#9d75b9" stroke="#9d75b9" stroke-width="0.7"/>
<path d="M674.4,512.3L675.4,511.5L676.4,510.7L677.4,509.9L678.4,509.1L679.4,508.3L680.4,507.5L683.3,532.6L682.3,533.3L681.3,534.1L680.3,534.9L679.3,535.7L678.3,536.5L677.4,537.3Z" fill="#a076be" stroke="#a076be" stroke-width="0.7"/>
<path d="M680.4,507.5L681.5,506.7L682.5,506.0L683.5,505.2L684.6,504.4L685.6,503.7L686.7,502.9L687.7,502.2L690.4,527.3L689.4,528.0L688.4,528.7L687.3,529.5L686.3,530.2L685.3,531.0L684.3,531.8L683.3,532.6Z" fill="#a478c3" stroke="#a478c3" stroke-width="0.7"/>
<path d="M687.7,502.2L688.8,501.5L689.9,500.8L690.9,500.1L692.0,499.3L693.1,498.7L694.2,498.0L695.3,497.3L697.9,522.3L696.8,523.0L695.8,523.7L694.7,524.4L693.6,525.1L692.5,525.8L691.5,526.5L690.4,527.3Z" fill="#a77ac7" stroke="#a77ac7" stroke-width="0.7"/>
<path d="M695.3,497.3L696.4,496.6L697.5,495.9L698.7,495.3L699.8,494.6L700.9,494.0L702.1,493.3L703.2,492.7L705.7,517.8L704.6,518.4L703.4,519.0L702.3,519.7L701.2,520.3L700.1,521.0L699.0,521.7L697.9,522.3Z" fill="#ab7ccc" stroke="#ab7ccc" stroke-width="0.7"/>
<path d="M703.2,492.7L704.4,492.1L705.5,491.5L706.7,490.8L707.8,490.2L709.0,489.6L710.2,489.1L711.4,488.5L712.5,487.9L713.7,487.3L716.1,512.4L714.9,513.0L713.7,513.6L712.6,514.1L711.4,514.7L710.3,515.3L709.1,515.9L708.0,516.5L706.8,517.1L705.7,517.8Z" fill="#ae7dd1" stroke="#ae7dd1" stroke-width="0.7"/>
<path d="M713.7,487.3L714.9,486.8L716.1,486.2L717.3,485.7L718.5,485.2L719.7,484.6L720.9,484.1L722.2,483.6L723.4,483.1L724.6,482.6L725.8,482.1L728.0,507.2L726.8,507.7L725.6,508.2L724.4,508.7L723.2,509.2L722.0,509.7L720.8,510.2L719.6,510.8L718.4,511.3L717.2,511.9L716.1,512.4Z" fill="#b27fd6" stroke="#b27fd6" stroke-width="0.7"/>
<path d="M725.8,482.1L727.1,481.6L728.3,481.2L729.6,480.7L730.8,480.2L732.1,479.8L733.3,479.4L734.6,478.9L735.8,478.5L737.1,478.1L738.4,477.7L739.6,477.3L740.9,476.9L742.9,502.0L741.6,502.4L740.4,502.8L739.1,503.2L737.9,503.6L736.6,504.0L735.4,504.4L734.1,504.9L732.9,505.3L731.7,505.8L730.4,506.2L729.2,506.7L728.0,507.2Z" fill="#b581da" stroke="#b581da" stroke-width="0.7"/>
<path d="M740.9,476.9L742.2,476.5L743.5,476.1L744.7,475.7L746.0,475.4L747.3,475.0L748.6,474.7L749.9,474.4L751.2,474.0L752.5,473.7L753.8,473.4L755.1,473.1L756.4,472.8L757.7,472.5L759.0,472.2L760.3,472.0L761.7,471.7L763.0,471.4L764.3,471.2L765.6,470.9L767.2,496.0L765.9,496.3L764.6,496.5L763.3,496.8L762.0,497.0L760.7,497.3L759.4,497.6L758.2,497.9L756.9,498.2L755.6,498.5L754.3,498.8L753.0,499.1L751.7,499.4L750.5,499.8L749.2,500.1L747.9,500.5L746.6,500.8L745.4,501.2L744.1,501.6L742.9,502.0Z" fill="#b983df" stroke="#b983df" stroke-width="0.7"/>
<path d="M765.6,470.9L766.9,470.7L768.3,470.5L769.6,470.3L770.9,470.1L772.2,469.9L773.6,469.7L774.9,469.5L776.2,469.3L777.6,469.2L778.9,469.0L780.2,468.9L781.6,468.7L782.9,468.6L784.3,468.5L785.6,468.3L786.9,468.2L788.3,468.1L789.6,468.0L791.0,468.0L792.3,467.9L793.7,467.8L795.0,467.8L796.3,467.7L797.7,467.7L799.0,467.6L800.4,467.6L801.7,467.6L803.1,467.6L804.4,467.6L805.7,467.6L807.1,467.6L808.4,467.7L809.8,467.7L811.1,467.7L812.5,467.8L813.8,467.8L815.1,467.9L816.5,468.0L817.4,493.1L816.1,493.0L814.7,492.9L813.4,492.9L812.1,492.8L810.8,492.8L809.5,492.7L808.1,492.7L806.8,492.7L805.5,492.7L804.2,492.7L802.8,492.7L801.5,492.7L800.2,492.7L798.9,492.8L797.5,492.8L796.2,492.8L794.9,492.9L793.6,493.0L792.2,493.0L790.9,493.1L789.6,493.2L788.3,493.3L786.9,493.4L785.6,493.5L784.3,493.7L783.0,493.8L781.7,493.9L780.3,494.1L779.0,494.2L777.7,494.4L776.4,494.6L775.1,494.8L773.8,495.0L772.5,495.2L771.1,495.4L769.8,495.6L768.5,495.8L767.2,496.0Z" fill="#bc84e4" stroke="#bc84e4" stroke-width="0.7"/>
<path d="M816.5,468.0L817.8,468.1L819.1,468.2L820.5,468.3L821.8,468.4L823.2,468.5L824.5,468.6L825.8,468.8L825.9,468.8L826.7,493.8L826.6,493.8L825.3,493.7L824.0,493.6L822.7,493.5L821.3,493.3L820.0,493.2L818.7,493.1L817.4,493.1Z" fill="#b983df" stroke="#b983df" stroke-width="0.7"/>
<path d="M825.9,468.8L826.3,468.9L827.1,493.9L826.7,493.8Z" fill="#b581da" stroke="#b581da" stroke-width="0.7"/>
<path d="M826.3,468.9L827.2,469.0L828.5,469.2L830.3,469.5L832.1,469.7L833.8,470.0L835.6,470.3L836.3,495.4L834.5,495.1L832.8,494.8L831.0,494.5L829.2,494.3L828.0,494.1L827.1,493.9Z" fill="#b983df" stroke="#b983df" stroke-width="0.7"/>
<path d="M835.6,470.3L837.4,470.6L839.1,471.0L840.9,471.3L842.6,471.7L844.4,472.1L846.1,472.5L847.8,472.9L849.6,473.4L850.0,498.4L848.3,498.0L846.6,497.6L844.9,497.2L843.2,496.8L841.5,496.4L839.7,496.0L838.0,495.7L836.3,495.4Z" fill="#b581da" stroke="#b581da" stroke-width="0.7"/>
<path d="M849.6,473.4L851.3,473.8L853.0,474.3L854.7,474.8L856.4,475.3L858.1,475.8L859.8,476.3L861.4,476.9L863.1,477.4L863.4,502.5L861.7,501.9L860.1,501.4L858.4,500.8L856.8,500.3L855.1,499.8L853.4,499.3L851.7,498.9L850.0,498.4Z" fill="#b27fd6" stroke="#b27fd6" stroke-width="0.7"/>
<path d="M863.1,477.4L864.8,478.0L866.4,478.6L868.0,479.2L869.7,479.8L871.3,480.5L872.9,481.1L873.0,506.2L871.5,505.5L869.9,504.9L868.3,504.3L866.6,503.6L865.0,503.1L863.4,502.5Z" fill="#ae7dd1" stroke="#ae7dd1" stroke-width="0.7"/>
<path d="M872.9,481.1L874.5,481.8L876.1,482.5L877.6,483.2L879.2,483.9L879.3,508.9L877.7,508.2L876.2,507.5L874.6,506.8L873.0,506.2Z" fill="#ab7ccc" stroke="#ab7ccc" stroke-width="0.7"/>
<path d="M879.2,483.9L880.8,484.6L882.3,485.3L883.8,486.1L885.4,486.9L886.9,487.7L888.4,488.5L888.3,513.5L886.8,512.7L885.4,511.9L883.8,511.2L882.3,510.4L880.8,509.7L879.3,508.9Z" fill="#a77ac7" stroke="#a77ac7" stroke-width="0.7"/>
<path d="M888.4,488.5L889.9,489.3L891.3,490.1L892.8,491.0L894.2,491.8L894.1,516.9L892.7,516.0L891.2,515.2L889.8,514.3L888.3,513.5Z" fill="#a478c3" stroke="#a478c3" stroke-width="0.7"/>
<path d="M894.2,491.8L895.7,492.7L897.1,493.6L898.5,494.5L899.9,495.4L899.7,520.4L898.3,519.5L896.9,518.6L895.5,517.7L894.1,516.9Z" fill="#a076be" stroke="#a076be" stroke-width="0.7"/>
<path d="M899.9,495.4L901.3,496.3L902.7,497.3L904.0,498.2L905.3,499.2L905.1,524.2L903.7,523.3L902.4,522.3L901.0,521.4L899.7,520.4Z" fill="#9d75b9" stroke="#9d75b9" stroke-width="0.7"/>
<path d="M905.3,499.2L907.1,500.5L906.8,525.5L905.1,524.2Z" fill="#9973b4" stroke="#9973b4" stroke-width="0.7"/>
<path d="M907.1,500.5L907.8,501.0L907.4,526.0L906.8,525.5Z" fill="#9d75b9" stroke="#9d75b9" stroke-width="0.7"/>
<path d="M907.8,501.0L908.8,501.5L908.4,526.5L907.4,526.0Z" fill="#a478c3" stroke="#a478c3" stroke-width="0.7"/>
<path d="M908.8,501.5L909.8,502.0L909.5,527.0L908.4,526.5Z" fill="#ab7ccc" stroke="#ab7ccc" stroke-width="0.7"/>
<path d="M909.8,502.0L910.9,502.4L910.6,527.4L909.5,527.0Z" fill="#ae7dd1" stroke="#ae7dd1" stroke-width="0.7"/>
<path d="M910.9,502.4L912.1,502.7L911.7,527.7L910.6,527.4Z" fill="#b27fd6" stroke="#b27fd6" stroke-width="0.7"/>
<path d="M912.1,502.7L913.3,502.9L912.9,527.9L911.7,527.7Z" fill="#b581da" stroke="#b581da" stroke-width="0.7"/>
<path d="M913.3,502.9L914.5,503.0L915.8,503.1L917.0,503.0L917.9,502.9L917.5,528.0L916.6,528.1L915.3,528.1L914.1,528.1L912.9,527.9Z" fill="#b983df" stroke="#b983df" stroke-width="0.7"/>
<path d="M917.9,502.9L919.4,502.7L918.9,527.7L917.5,528.0Z" fill="#b581da" stroke="#b581da" stroke-width="0.7"/>
<path d="M919.4,502.7L922.0,504.3L924.6,505.9L927.2,507.5L929.8,509.1L929.2,534.1L926.6,532.5L924.0,530.9L921.5,529.3L918.9,527.7Z" fill="#a478c3" stroke="#a478c3" stroke-width="0.7"/>
<path d="M929.8,509.1L931.9,507.4L934.0,505.8L936.0,504.1L938.1,502.5L940.2,500.8L942.2,499.2L944.3,497.6L946.3,495.9L948.4,494.3L950.2,492.9L952.1,491.4L953.9,490.0L955.9,488.5L957.9,487.0L956.9,512.1L954.9,513.6L952.9,515.0L951.1,516.5L949.3,517.9L947.5,519.3L945.5,521.0L943.4,522.6L941.4,524.2L939.4,525.9L937.4,527.5L935.3,529.1L933.3,530.8L931.2,532.4L929.2,534.1Z" fill="#9671b0" stroke="#9671b0" stroke-width="0.7"/>
<path d="M957.9,487.0L959.8,485.7L961.6,484.4L963.2,483.4L964.8,482.3L963.7,507.4L962.1,508.4L960.5,509.5L958.7,510.8L956.9,512.1Z" fill="#9973b4" stroke="#9973b4" stroke-width="0.7"/>
<path d="M964.8,482.3L966.1,481.5L967.5,480.7L966.4,505.8L965.0,506.6L963.7,507.4Z" fill="#a076be" stroke="#a076be" stroke-width="0.7"/>
<path d="M967.5,480.7L969.8,479.6L968.6,504.7L966.4,505.8Z" fill="#a77ac7" stroke="#a77ac7" stroke-width="0.7"/>
<path d="M969.8,479.6L971.6,479.0L970.4,504.0L968.6,504.7Z" fill="#ae7dd1" stroke="#ae7dd1" stroke-width="0.7"/>
<path d="M971.6,479.0L973.0,478.7L971.7,503.7L970.4,504.0Z" fill="#b27fd6" stroke="#b27fd6" stroke-width="0.7"/>
<path d="M973.0,478.7L974.3,478.5L973.0,503.6L971.7,503.7Z" fill="#b983df" stroke="#b983df" stroke-width="0.7"/>
<path d="M974.3,478.5L975.8,478.5L977.6,478.7L976.3,503.8L974.5,503.6L973.0,503.6Z" fill="#bc84e4" stroke="#bc84e4" stroke-width="0.7"/>
<path d="M977.6,478.7L979.5,479.1L978.1,504.1L976.3,503.8Z" fill="#b983df" stroke="#b983df" stroke-width="0.7"/>
<path d="M979.5,479.1L981.5,479.8L980.1,504.8L978.1,504.1Z" fill="#b27fd6" stroke="#b27fd6" stroke-width="0.7"/>
<path d="M981.5,479.8L984.0,481.0L982.7,506.1L980.1,504.8Z" fill="#ae7dd1" stroke="#ae7dd1" stroke-width="0.7"/>
<path d="M984.0,481.0L985.6,481.9L987.1,482.9L985.7,507.9L984.2,507.0L982.7,506.1Z" fill="#a77ac7" stroke="#a77ac7" stroke-width="0.7"/>
<path d="M987.1,482.9L989.0,484.2L990.8,485.5L992.9,487.1L995.0,488.7L993.5,513.7L991.4,512.1L989.4,510.6L987.5,509.2L985.7,507.9Z" fill="#a076be" stroke="#a076be" stroke-width="0.7"/>
<path d="M995.0,488.7L997.2,490.3L999.4,492.0L1001.7,493.8L1003.9,495.6L1005.5,496.9L1007.1,498.2L1008.7,499.5L1010.4,500.8L1012.0,502.1L1013.6,503.4L1015.3,504.7L1016.9,506.0L1018.5,507.3L1020.1,508.6L1021.8,509.8L1023.4,511.1L1021.5,536.1L1019.9,534.8L1018.3,533.6L1016.7,532.3L1015.0,531.0L1013.4,529.7L1011.8,528.5L1010.2,527.2L1008.6,525.9L1007.0,524.6L1005.4,523.3L1003.9,522.0L1002.3,520.7L1000.0,518.9L997.8,517.1L995.7,515.4L993.5,513.7Z" fill="#9d75b9" stroke="#9d75b9" stroke-width="0.7"/>
<path d="M1023.4,511.1L1025.1,512.3L1026.7,513.6L1028.4,514.8L1030.8,516.6L1033.2,518.4L1031.1,543.4L1028.7,541.6L1026.4,539.8L1024.7,538.6L1023.1,537.3L1021.5,536.1Z" fill="#a076be" stroke="#a076be" stroke-width="0.7"/>
<path d="M1033.2,518.4L1035.6,520.0L1037.9,521.6L1035.8,546.6L1033.5,545.0L1031.1,543.4Z" fill="#a478c3" stroke="#a478c3" stroke-width="0.7"/>
<path d="M1037.9,521.6L1039.8,522.7L1041.6,523.9L1043.5,525.1L1045.1,526.1L1046.8,527.1L1044.6,552.1L1042.9,551.1L1041.2,550.1L1039.4,548.9L1037.6,547.7L1035.8,546.6Z" fill="#a77ac7" stroke="#a77ac7" stroke-width="0.7"/>
<path d="M495.4,489.3L494.7,487.2L494.0,485.1L493.3,482.9L492.6,480.8L492.0,478.7L491.3,476.6L490.6,474.5L489.9,472.4L493.8,490.7L494.5,492.8L495.2,494.9L495.9,497.1L496.6,499.2L497.3,501.3L498.0,503.4L498.7,505.5L499.4,507.7Z" fill="#535055" stroke="#535055" stroke-width="0.7"/>
<path d="M489.9,472.4L489.4,470.8L493.4,489.1L493.8,490.7Z" fill="#504e51" stroke="#504e51" stroke-width="0.7"/>
<path d="M560.5,465.1L560.8,466.7L561.0,468.2L561.3,469.9L561.6,471.6L561.9,473.3L562.1,475.1L565.3,493.4L565.1,491.7L564.8,489.9L564.5,488.3L564.2,486.6L564.0,485.0L563.7,483.4Z" fill="#4c4c4c" stroke="#4c4c4c" stroke-width="0.7"/>
<path d="M562.1,475.1L562.4,477.0L562.7,478.8L565.9,497.2L565.6,495.3L565.3,493.4Z" fill="#504e51" stroke="#504e51" stroke-width="0.7"/>
<path d="M562.7,478.8L563.0,480.7L563.3,482.6L563.6,484.4L563.9,486.2L564.2,487.9L564.5,489.6L567.7,507.9L567.4,506.2L567.1,504.5L566.8,502.7L566.5,500.9L566.2,499.0L565.9,497.2Z" fill="#4c4c4c" stroke="#4c4c4c" stroke-width="0.7"/>
<path d="M573.0,523.5L573.2,524.9L573.4,526.2L573.7,528.5L573.9,530.7L574.2,533.0L574.5,535.3L574.7,537.5L575.0,539.8L578.2,558.1L577.9,555.8L577.6,553.6L577.4,551.3L577.1,549.0L576.9,546.8L576.6,544.5L576.4,543.2L576.2,541.8Z" fill="#504e51" stroke="#504e51" stroke-width="0.7"/>
<path d="M602.3,559.3L602.4,560.7L602.6,562.1L605.5,580.3L605.4,578.9L605.2,577.5Z" fill="#504e51" stroke="#504e51" stroke-width="0.7"/>
<path d="M626.4,609.0L626.8,611.7L629.6,629.9L629.2,627.2Z" fill="#4c4c4c" stroke="#4c4c4c" stroke-width="0.7"/>
<path d="M626.8,611.7L627.2,614.5L627.4,617.2L630.2,635.4L629.9,632.6L629.6,629.9Z" fill="#504e51" stroke="#504e51" stroke-width="0.7"/>
<path d="M627.4,617.2L627.6,620.0L630.3,638.2L630.2,635.4Z" fill="#535055" stroke="#535055" stroke-width="0.7"/>
<path d="M627.6,620.0L627.6,622.8L630.4,641.0L630.3,638.2Z" fill="#57515a" stroke="#57515a" stroke-width="0.7"/>
<path d="M627.6,622.8L627.6,625.6L627.5,628.5L630.3,646.6L630.4,643.8L630.4,641.0Z" fill="#5a535f" stroke="#5a535f" stroke-width="0.7"/>
<path d="M627.5,628.5L627.3,631.3L630.1,649.4L630.3,646.6Z" fill="#5e5564" stroke="#5e5564" stroke-width="0.7"/>
<path d="M627.3,631.3L627.0,634.2L626.6,637.0L629.4,655.1L629.8,652.3L630.1,649.4Z" fill="#615768" stroke="#615768" stroke-width="0.7"/>
<path d="M626.6,637.0L626.2,639.9L629.0,658.0L629.4,655.1Z" fill="#65586d" stroke="#65586d" stroke-width="0.7"/>
<path d="M626.2,639.9L625.6,642.8L628.4,660.9L629.0,658.0Z" fill="#685a72" stroke="#685a72" stroke-width="0.7"/>
<path d="M625.6,642.8L625.0,645.6L624.2,648.5L627.1,666.6L627.8,663.7L628.4,660.9Z" fill="#6c5c77" stroke="#6c5c77" stroke-width="0.7"/>
<path d="M624.2,648.5L623.4,651.4L626.3,669.5L627.1,666.6Z" fill="#6f5e7b" stroke="#6f5e7b" stroke-width="0.7"/>
<path d="M623.4,651.4L623.0,652.8L625.8,670.9L626.3,669.5Z" fill="#735f80" stroke="#735f80" stroke-width="0.7"/>
<path d="M623.0,652.8L621.5,655.2L620.0,657.5L618.4,659.9L616.9,662.3L615.4,664.7L613.9,667.1L612.3,669.4L611.0,671.5L609.7,673.6L608.2,675.9L607.3,677.2L610.3,695.2L611.2,693.9L612.7,691.6L614.0,689.6L615.3,687.5L616.8,685.1L618.3,682.7L619.8,680.3L621.3,678.0L622.8,675.6L624.3,673.2L625.8,670.9Z" fill="#886a9d" stroke="#886a9d" stroke-width="0.7"/>
<path d="M607.3,677.2L606.8,677.9L606.0,679.0L605.2,680.0L604.4,681.0L603.6,682.1L606.7,700.1L607.5,699.1L608.3,698.0L609.0,697.0L609.8,695.9L610.3,695.2Z" fill="#8b6ca1" stroke="#8b6ca1" stroke-width="0.7"/>
<path d="M603.6,682.1L602.9,683.1L602.1,684.2L601.3,685.2L600.5,686.2L599.7,687.2L598.9,688.2L598.0,689.3L597.2,690.3L596.4,691.3L595.6,692.3L598.8,710.3L599.6,709.3L600.4,708.3L601.2,707.2L602.0,706.2L602.8,705.2L603.6,704.2L604.4,703.2L605.2,702.2L606.0,701.1L606.7,700.1Z" fill="#8f6ea6" stroke="#8f6ea6" stroke-width="0.7"/>
<path d="M595.6,692.3L594.7,693.3L593.9,694.3L593.0,695.2L592.2,696.2L591.3,697.2L590.5,698.2L589.6,699.2L588.7,700.1L587.8,701.1L591.1,719.1L592.0,718.1L592.9,717.1L593.7,716.2L594.6,715.2L595.4,714.2L596.3,713.2L597.1,712.2L597.9,711.2L598.8,710.3Z" fill="#926fab" stroke="#926fab" stroke-width="0.7"/>
<path d="M587.8,701.1L587.0,702.1L586.1,703.0L585.2,704.0L584.3,704.9L583.4,705.9L582.4,706.8L581.5,707.7L580.6,708.7L584.0,726.6L584.9,725.7L585.8,724.8L586.7,723.8L587.6,722.9L588.5,721.9L589.4,721.0L590.3,720.0L591.1,719.1Z" fill="#9671b0" stroke="#9671b0" stroke-width="0.7"/>
<path d="M580.6,708.7L579.7,709.6L578.7,710.5L577.8,711.4L576.8,712.4L575.9,713.3L574.9,714.2L573.9,715.1L572.9,716.0L572.0,716.8L575.5,734.8L576.4,733.9L577.4,733.0L578.4,732.1L579.3,731.2L580.3,730.3L581.2,729.4L582.1,728.5L583.1,727.5L584.0,726.6Z" fill="#9973b4" stroke="#9973b4" stroke-width="0.7"/>
<path d="M572.0,716.8L571.0,717.7L570.0,718.6L569.0,719.5L567.9,720.3L566.9,721.2L565.9,722.0L564.9,722.9L563.8,723.7L567.4,741.6L568.5,740.8L569.5,739.9L570.5,739.1L571.5,738.2L572.5,737.4L573.5,736.5L574.5,735.6L575.5,734.8Z" fill="#9d75b9" stroke="#9d75b9" stroke-width="0.7"/>
<path d="M563.8,723.7L562.8,724.6L561.7,725.4L560.7,726.2L559.6,727.0L558.5,727.9L557.5,728.7L556.4,729.5L555.3,730.3L554.2,731.0L557.9,748.9L559.0,748.1L560.1,747.3L561.1,746.5L562.2,745.7L563.3,744.9L564.3,744.1L565.4,743.3L566.4,742.5L567.4,741.6Z" fill="#a076be" stroke="#a076be" stroke-width="0.7"/>
<path d="M554.2,731.0L553.1,731.8L552.0,732.6L550.8,733.3L549.7,734.1L548.6,734.8L547.5,735.6L546.3,736.3L545.2,737.0L544.0,737.8L542.8,738.5L541.7,739.2L545.5,757.0L546.7,756.3L547.9,755.6L549.0,754.9L550.1,754.2L551.3,753.4L552.4,752.7L553.5,752.0L554.6,751.2L555.7,750.4L556.8,749.7L557.9,748.9Z" fill="#a478c3" stroke="#a478c3" stroke-width="0.7"/>
<path d="M541.7,739.2L540.5,739.9L539.3,740.5L538.1,741.2L536.9,741.9L535.7,742.5L534.5,743.2L533.3,743.8L532.1,744.5L530.9,745.1L529.7,745.7L528.4,746.3L527.2,746.9L526.0,747.5L530.0,765.3L531.3,764.7L532.5,764.1L533.7,763.5L534.9,762.9L536.1,762.3L537.3,761.7L538.5,761.0L539.7,760.4L540.9,759.7L542.1,759.1L543.2,758.4L544.4,757.7L545.5,757.0Z" fill="#a77ac7" stroke="#a77ac7" stroke-width="0.7"/>
<path d="M526.0,747.5L524.7,748.0L523.5,748.6L522.2,749.2L521.0,749.7L519.7,750.2L518.4,750.7L517.2,751.3L515.9,751.8L514.6,752.2L513.4,752.7L512.1,753.2L510.8,753.6L509.5,754.1L508.2,754.5L506.9,754.9L505.6,755.3L504.3,755.7L503.0,756.1L501.7,756.5L500.4,756.8L499.1,757.2L497.8,757.5L496.5,757.8L495.2,758.1L493.9,758.4L492.6,758.7L491.3,759.0L490.0,759.2L488.7,759.5L487.4,759.7L486.1,759.9L484.7,760.2L483.4,760.3L482.1,760.5L480.8,760.7L485.4,778.5L486.7,778.3L488.0,778.1L489.3,777.9L490.6,777.7L491.9,777.5L493.2,777.3L494.5,777.0L495.8,776.8L497.1,776.5L498.4,776.2L499.7,775.9L501.0,775.6L502.2,775.3L503.5,775.0L504.8,774.6L506.1,774.3L507.4,773.9L508.7,773.5L509.9,773.1L511.2,772.7L512.5,772.3L513.8,771.9L515.0,771.4L516.3,771.0L517.6,770.5L518.8,770.0L520.1,769.6L521.4,769.1L522.6,768.6L523.9,768.0L525.1,767.5L526.3,767.0L527.6,766.4L528.8,765.9L530.0,765.3Z" fill="#ab7ccc" stroke="#ab7ccc" stroke-width="0.7"/>
<path d="M480.8,760.7L479.5,760.9L478.1,761.0L476.8,761.1L475.5,761.3L474.1,761.4L472.8,761.5L471.5,761.5L470.2,761.6L468.8,761.7L467.5,761.7L466.2,761.8L471.0,779.5L472.3,779.5L473.6,779.5L474.9,779.4L476.2,779.3L477.5,779.2L478.8,779.1L480.1,779.0L481.5,778.9L482.8,778.8L484.1,778.6L485.4,778.5Z" fill="#a77ac7" stroke="#a77ac7" stroke-width="0.7"/>
<path d="M466.2,761.8L464.8,761.8L463.5,761.8L462.2,761.8L460.9,761.8L459.5,761.7L458.2,761.7L456.9,761.7L455.6,761.6L454.3,761.5L459.2,779.3L460.5,779.4L461.8,779.4L463.1,779.5L464.4,779.5L465.7,779.6L467.0,779.6L468.3,779.6L469.6,779.6L471.0,779.5Z" fill="#a478c3" stroke="#a478c3" stroke-width="0.7"/>
<path d="M454.3,761.5L453.0,761.4L451.7,761.3L450.4,761.2L449.0,761.1L447.7,761.0L446.5,760.8L445.2,760.7L450.2,778.4L451.5,778.6L452.7,778.7L454.0,778.9L455.3,779.0L456.6,779.1L457.9,779.2L459.2,779.3Z" fill="#a076be" stroke="#a076be" stroke-width="0.7"/>
<path d="M445.2,760.7L443.9,760.5L442.6,760.3L441.3,760.1L440.0,759.9L438.8,759.7L437.5,759.5L442.6,777.2L443.9,777.5L445.1,777.7L446.4,777.9L447.6,778.1L448.9,778.3L450.2,778.4Z" fill="#9d75b9" stroke="#9d75b9" stroke-width="0.7"/>
<path d="M437.5,759.5L436.2,759.2L435.0,759.0L433.7,758.7L432.5,758.4L431.2,758.2L430.0,757.9L435.2,775.7L436.4,775.9L437.6,776.2L438.9,776.5L440.1,776.8L441.4,777.0L442.6,777.2Z" fill="#9973b4" stroke="#9973b4" stroke-width="0.7"/>
<path d="M430.0,757.9L428.8,757.6L427.6,757.2L426.3,756.9L425.1,756.6L423.9,756.2L422.7,755.9L428.0,773.7L429.2,774.0L430.4,774.4L431.6,774.7L432.8,775.0L434.0,775.3L435.2,775.7Z" fill="#9671b0" stroke="#9671b0" stroke-width="0.7"/>
<path d="M422.7,755.9L421.5,755.5L420.3,755.1L419.2,754.7L418.0,754.3L416.8,753.9L422.1,771.7L423.3,772.1L424.5,772.5L425.6,772.9L426.8,773.3L428.0,773.7Z" fill="#926fab" stroke="#926fab" stroke-width="0.7"/>
<path d="M416.8,753.9L415.7,753.5L414.5,753.1L413.3,752.6L412.2,752.2L411.1,751.7L409.9,751.3L415.4,769.1L416.5,769.6L417.6,770.0L418.7,770.5L419.9,770.9L421.0,771.3L422.1,771.7Z" fill="#8f6ea6" stroke="#8f6ea6" stroke-width="0.7"/>
<path d="M409.9,751.3L408.8,750.8L407.7,750.3L406.6,749.8L405.5,749.3L404.4,748.8L409.9,766.6L411.0,767.1L412.1,767.6L413.1,768.1L414.2,768.6L415.4,769.1Z" fill="#8b6ca1" stroke="#8b6ca1" stroke-width="0.7"/>
<path d="M404.4,748.8L403.3,748.3L402.3,747.8L401.2,747.2L400.1,746.7L399.1,746.1L404.6,764.0L405.6,764.5L406.7,765.1L407.8,765.6L408.8,766.1L409.9,766.6Z" fill="#886a9d" stroke="#886a9d" stroke-width="0.7"/>
<path d="M399.1,746.1L398.0,745.6L397.0,745.0L396.0,744.4L395.0,743.8L394.0,743.2L399.5,761.1L400.5,761.7L401.5,762.2L402.5,762.8L403.6,763.4L404.6,764.0Z" fill="#846898" stroke="#846898" stroke-width="0.7"/>
<path d="M394.0,743.2L393.0,742.6L392.0,742.0L391.0,741.4L390.0,740.8L389.0,740.1L394.6,758.0L395.6,758.6L396.6,759.2L397.5,759.9L398.5,760.5L399.5,761.1Z" fill="#816693" stroke="#816693" stroke-width="0.7"/>
<path d="M389.0,740.1L388.0,739.5L387.1,738.8L386.1,738.2L385.2,737.5L384.3,736.9L389.9,754.7L390.9,755.4L391.8,756.0L392.7,756.7L393.7,757.3L394.6,758.0Z" fill="#7d658e" stroke="#7d658e" stroke-width="0.7"/>
<path d="M384.3,736.9L383.4,736.2L382.4,735.5L381.5,734.8L380.6,734.1L379.7,733.4L385.4,751.3L386.3,752.0L387.2,752.7L388.1,753.4L389.0,754.0L389.9,754.7Z" fill="#7a638a" stroke="#7a638a" stroke-width="0.7"/>
<path d="M379.7,733.4L378.9,732.7L378.0,732.0L377.1,731.2L376.3,730.5L375.4,729.8L381.2,747.7L382.0,748.4L382.8,749.1L383.7,749.9L384.6,750.6L385.4,751.3Z" fill="#766185" stroke="#766185" stroke-width="0.7"/>
<path d="M375.4,729.8L374.6,729.0L373.7,728.3L372.9,727.5L372.1,726.8L371.3,726.0L370.5,725.2L376.3,743.1L377.1,743.9L377.9,744.7L378.7,745.4L379.5,746.2L380.3,746.9L381.2,747.7Z" fill="#735f80" stroke="#735f80" stroke-width="0.7"/>
<path d="M370.5,725.2L369.7,724.5L368.9,723.7L368.1,722.9L367.3,722.1L366.6,721.3L372.4,739.2L373.2,740.0L373.9,740.8L374.7,741.6L375.5,742.4L376.3,743.1Z" fill="#6f5e7b" stroke="#6f5e7b" stroke-width="0.7"/>
<path d="M366.6,721.3L365.8,720.5L365.1,719.7L364.3,718.9L363.6,718.0L362.9,717.2L368.7,735.1L369.5,736.0L370.2,736.8L370.9,737.6L371.7,738.4L372.4,739.2Z" fill="#6c5c77" stroke="#6c5c77" stroke-width="0.7"/>
<path d="M362.9,717.2L362.2,716.4L361.5,715.5L360.8,714.7L360.1,713.8L359.4,713.0L358.7,712.1L364.6,730.1L365.3,730.9L365.9,731.8L366.6,732.6L367.3,733.5L368.0,734.3L368.7,735.1Z" fill="#685a72" stroke="#685a72" stroke-width="0.7"/>
<path d="M358.7,712.1L358.0,711.3L357.4,710.4L356.7,709.5L356.0,708.6L355.4,707.7L354.7,706.8L360.6,724.8L361.3,725.7L361.9,726.6L362.6,727.5L363.2,728.3L363.9,729.2L364.6,730.1Z" fill="#65586d" stroke="#65586d" stroke-width="0.7"/>
<path d="M354.7,706.8L354.1,705.9L353.4,705.0L352.8,704.1L352.2,703.2L351.6,702.3L350.9,701.3L350.3,700.4L349.7,699.5L355.7,717.4L356.3,718.4L356.9,719.3L357.5,720.2L358.1,721.2L358.7,722.1L359.4,723.0L360.0,723.9L360.6,724.8Z" fill="#615768" stroke="#615768" stroke-width="0.7"/>
<path d="M349.7,699.5L349.1,698.5L348.5,697.5L347.9,696.6L347.3,695.6L346.7,694.7L346.1,693.7L345.5,692.7L344.9,691.7L344.4,690.7L350.4,708.7L350.9,709.7L351.5,710.7L352.1,711.7L352.7,712.6L353.3,713.6L353.9,714.6L354.5,715.5L355.1,716.5L355.7,717.4Z" fill="#5e5564" stroke="#5e5564" stroke-width="0.7"/>
<path d="M344.4,690.7L343.8,689.7L343.2,688.7L342.6,687.7L342.1,686.7L341.5,685.7L340.9,684.7L340.4,683.6L339.8,682.6L339.2,681.6L338.7,680.5L338.1,679.5L337.6,678.4L337.0,677.4L343.0,695.4L343.6,696.5L344.1,697.5L344.7,698.6L345.3,699.6L345.8,700.6L346.4,701.7L346.9,702.7L347.5,703.7L348.1,704.7L348.6,705.7L349.2,706.7L349.8,707.7L350.4,708.7Z" fill="#5a535f" stroke="#5a535f" stroke-width="0.7"/>
<path d="M337.0,677.4L336.4,676.3L335.9,675.2L335.3,674.2L334.8,673.2L334.3,672.1L333.8,671.1L333.3,670.1L332.9,669.2L338.9,687.3L339.4,688.2L339.8,689.2L340.3,690.2L340.9,691.2L341.4,692.3L341.9,693.3L342.5,694.4L343.0,695.4Z" fill="#57515a" stroke="#57515a" stroke-width="0.7"/>
<path d="M332.9,669.2L332.4,668.2L332.0,667.3L331.6,666.4L337.7,684.5L338.1,685.4L338.5,686.3L338.9,687.3Z" fill="#535055" stroke="#535055" stroke-width="0.7"/>
<path d="M331.6,666.4L331.3,665.5L330.9,664.7L330.6,663.8L336.7,681.9L337.0,682.8L337.3,683.6L337.7,684.5Z" fill="#504e51" stroke="#504e51" stroke-width="0.7"/>
<path d="M330.6,663.8L330.3,663.0L336.4,681.1L336.7,681.9Z" fill="#4c4c4c" stroke="#4c4c4c" stroke-width="0.7"/>
<path d="M373.7,728.3L372.9,727.5L372.1,726.8L371.3,726.0L370.5,725.2L369.7,724.5L368.9,723.7L368.1,722.9L367.3,722.1L366.6,721.3L365.8,720.5L365.1,719.7L364.3,718.9L363.6,718.0L362.9,717.2L362.2,716.4L361.5,715.5L360.8,714.7L360.1,713.8L359.4,713.0L358.7,712.1L358.0,711.3L357.4,710.4L356.7,709.5L356.0,708.6L355.4,707.7L354.7,706.8L354.1,705.9L353.4,705.0L352.8,704.1L352.2,703.2L351.6,702.3L350.9,701.3L350.3,700.4L349.7,699.5L349.1,698.5L348.5,697.5L347.9,696.6L347.3,695.6L346.7,694.7L346.1,693.7L345.5,692.7L344.9,691.7L344.4,690.7L343.8,689.7L343.2,688.7L342.6,687.7L342.1,686.7L341.5,685.7L340.9,684.7L340.4,683.6L339.8,682.6L339.2,681.6L338.7,680.5L338.1,679.5L337.6,678.4L337.0,677.4L336.4,676.3L335.9,675.2L335.3,674.2L334.8,673.2L334.3,672.1L333.8,671.1L333.3,670.1L332.9,669.2L332.4,668.2L332.0,667.3L331.6,666.4L331.3,665.5L330.9,664.7L330.6,663.8L330.3,663.0L330.1,662.2L329.8,661.4L329.6,660.7L329.4,659.9L329.3,659.2L329.1,658.4L329.0,657.7L328.9,657.0L328.9,656.2L328.8,655.4L328.8,654.6L328.7,653.8L328.7,653.0L328.8,652.1L328.8,651.3L328.9,650.4L328.9,649.5L329.0,648.6L329.1,647.7L329.3,646.8L329.4,645.9L329.6,645.0L329.8,644.0L330.0,643.1L330.2,642.1L330.4,641.2L330.7,640.2L331.0,639.3L331.3,638.3L331.6,637.3L331.9,636.3L332.2,635.4L332.6,634.4L332.9,633.4L333.3,632.4L333.7,631.4L334.1,630.4L334.6,629.4L335.0,628.4L335.5,627.4L335.9,626.3L336.4,625.3L336.9,624.3L337.4,623.3L338.0,622.3L338.5,621.2L339.1,620.2L339.6,619.2L340.2,618.2L340.8,617.1L341.4,616.1L342.0,615.1L342.6,614.0L343.3,613.0L343.9,612.0L344.5,611.0L345.2,610.0L345.8,608.9L346.5,607.9L347.2,606.9L347.9,605.9L348.5,605.0L349.2,604.0L349.9,603.0L350.6,602.0L351.4,601.0L352.1,600.1L352.8,599.1L353.6,598.2L354.3,597.2L355.0,596.3L355.8,595.3L356.6,594.4L357.3,593.5L358.1,592.6L358.9,591.7L359.7,590.7L360.5,589.8L361.3,588.9L362.1,588.0L362.9,587.2L363.8,586.3L364.6,585.4L365.4,584.5L366.3,583.7L367.1,582.8L368.0,582.0L368.8,581.1L369.7,580.3L370.6,579.5L371.5,578.6L372.4,577.8L373.2,577.0L374.1,576.2L375.1,575.4L376.0,574.6L376.9,573.8L377.8,573.0L378.7,572.3L379.7,571.5L380.6,570.7L381.6,570.0L382.5,569.2L383.5,568.5L384.4,567.8L385.4,567.1L386.4,566.3L387.4,565.6L388.3,564.9L389.3,564.2L390.3,563.6L391.3,562.9L392.3,562.2L393.3,561.5L394.3,560.9L395.4,560.2L396.4,559.6L397.4,559.0L398.4,558.3L399.5,557.7L400.5,557.1L401.5,556.5L402.6,555.9L403.6,555.4L404.7,554.8L405.7,554.2L406.8,553.7L407.9,553.1L408.9,552.6L410.0,552.0L411.1,551.5L412.1,551.0L413.2,550.5L414.3,550.0L414.5,549.9L416.0,549.5L420.8,548.2L449.6,541.2L459.1,524.0L460.4,521.8L461.7,519.8L463.3,517.5L465.0,515.0L466.6,512.8L468.3,510.7L470.1,508.7L471.7,506.9L473.2,505.5L474.3,504.6L475.9,503.3L495.4,489.3L489.9,472.4L489.4,470.8L489.2,469.7L489.1,469.1L489.8,468.7L491.1,468.0L492.6,467.3L494.5,466.6L497.5,465.6L501.5,464.5L506.9,463.3L512.9,461.9L518.9,460.6L524.9,459.4L531.0,458.1L536.8,457.0L542.0,455.9L546.7,455.0L550.4,454.3L552.9,453.9L554.0,453.8L554.1,453.8L554.7,454.1L555.5,454.6L556.0,455.0L556.4,455.4L557.0,456.0L557.6,456.9L558.4,458.1L559.0,459.4L559.6,460.9L560.0,462.6L560.5,465.1L561.0,468.2L561.6,471.6L562.1,475.1L562.7,478.8L563.3,482.6L563.9,486.2L564.5,489.6L565.1,493.1L565.9,496.6L566.7,500.1L567.7,503.5L568.7,506.5L569.5,509.3L570.3,512.2L571.1,515.2L571.9,518.4L572.6,521.1L573.0,523.5L573.4,526.2L575.0,539.8L588.9,549.3L592.1,551.5L594.4,553.2L596.7,554.9L599.0,556.7L601.1,558.3L602.3,559.3L602.6,562.1L607.1,567.3L608.9,569.5L610.5,571.7L612.1,573.9L613.7,576.2L615.1,578.5L616.5,580.9L617.8,583.3L619.0,585.7L620.2,588.2L621.2,590.7L622.2,593.2L623.1,595.8L624.0,598.4L624.7,601.0L625.4,603.6L625.9,606.3L626.4,609.0L626.8,611.7L627.2,614.5L627.4,617.2L627.6,620.0L627.6,622.8L627.6,625.6L627.5,628.5L627.3,631.3L627.0,634.2L626.6,637.0L626.2,639.9L625.6,642.8L625.0,645.6L624.2,648.5L623.4,651.4L623.0,652.8L612.3,669.4L609.7,673.6L608.2,675.9L607.3,677.2L606.8,677.9L606.0,679.0L605.2,680.0L604.4,681.0L603.6,682.1L602.9,683.1L602.1,684.2L601.3,685.2L600.5,686.2L599.7,687.2L598.9,688.2L598.0,689.3L597.2,690.3L596.4,691.3L595.6,692.3L594.7,693.3L593.9,694.3L593.0,695.2L592.2,696.2L591.3,697.2L590.5,698.2L589.6,699.2L588.7,700.1L587.8,701.1L587.0,702.1L586.1,703.0L585.2,704.0L584.3,704.9L583.4,705.9L582.4,706.8L581.5,707.7L580.6,708.7L579.7,709.6L578.7,710.5L577.8,711.4L576.8,712.4L575.9,713.3L574.9,714.2L573.9,715.1L572.9,716.0L572.0,716.8L571.0,717.7L570.0,718.6L569.0,719.5L567.9,720.3L566.9,721.2L565.9,722.0L564.9,722.9L563.8,723.7L562.8,724.6L561.7,725.4L560.7,726.2L559.6,727.0L558.5,727.9L557.5,728.7L556.4,729.5L555.3,730.3L554.2,731.0L553.1,731.8L552.0,732.6L550.8,733.3L549.7,734.1L548.6,734.8L547.5,735.6L546.3,736.3L545.2,737.0L544.0,737.8L542.8,738.5L541.7,739.2L540.5,739.9L539.3,740.5L538.1,741.2L536.9,741.9L535.7,742.5L534.5,743.2L533.3,743.8L532.1,744.5L530.9,745.1L529.7,745.7L528.4,746.3L527.2,746.9L526.0,747.5L524.7,748.0L523.5,748.6L522.2,749.2L521.0,749.7L519.7,750.2L518.4,750.7L517.2,751.3L515.9,751.8L514.6,752.2L513.4,752.7L512.1,753.2L510.8,753.6L509.5,754.1L508.2,754.5L506.9,754.9L505.6,755.3L504.3,755.7L503.0,756.1L501.7,756.5L500.4,756.8L499.1,757.2L497.8,757.5L496.5,757.8L495.2,758.1L493.9,758.4L492.6,758.7L491.3,759.0L490.0,759.2L488.7,759.5L487.4,759.7L486.1,759.9L484.7,760.2L483.4,760.3L482.1,760.5L480.8,760.7L479.5,760.9L478.1,761.0L476.8,761.1L475.5,761.3L474.1,761.4L472.8,761.5L471.5,761.5L470.2,761.6L468.8,761.7L467.5,761.7L466.2,761.8L464.8,761.8L463.5,761.8L462.2,761.8L460.9,761.8L459.5,761.7L458.2,761.7L456.9,761.7L455.6,761.6L454.3,761.5L453.0,761.4L451.7,761.3L450.4,761.2L449.0,761.1L447.7,761.0L446.5,760.8L445.2,760.7L443.9,760.5L442.6,760.3L441.3,760.1L440.0,759.9L438.8,759.7L437.5,759.5L436.2,759.2L435.0,759.0L433.7,758.7L432.5,758.4L431.2,758.2L430.0,757.9L428.8,757.6L427.6,757.2L426.3,756.9L425.1,756.6L423.9,756.2L422.7,755.9L421.5,755.5L420.3,755.1L419.2,754.7L418.0,754.3L416.8,753.9L415.7,753.5L414.5,753.1L413.3,752.6L412.2,752.2L411.1,751.7L409.9,751.3L408.8,750.8L407.7,750.3L406.6,749.8L405.5,749.3L404.4,748.8L403.3,748.3L402.3,747.8L401.2,747.2L400.1,746.7L399.1,746.1L398.0,745.6L397.0,745.0L396.0,744.4L395.0,743.8L394.0,743.2L393.0,742.6L392.0,742.0L391.0,741.4L390.0,740.8L389.0,740.1L388.0,739.5L387.1,738.8L386.1,738.2L385.2,737.5L384.3,736.9L383.4,736.2L382.4,735.5L381.5,734.8L380.6,734.1L379.7,733.4L378.9,732.7L378.0,732.0L377.1,731.2L376.3,730.5L375.4,729.8L374.6,729.0Z" fill="url(#tg)" stroke="#a67ccc" stroke-width="0.9"/>
<path d="M380.3,723.2L379.5,722.5L378.7,721.8L378.0,721.1L377.2,720.3L376.4,719.6L375.7,718.8L374.9,718.1L374.2,717.3L373.5,716.5L372.7,715.8L372.0,715.0L371.3,714.2L370.6,713.4L369.9,712.6L369.2,711.8L368.5,711.0L367.8,710.2L367.2,709.4L366.5,708.6L365.9,707.8L365.2,706.9L364.6,706.1L363.9,705.3L363.3,704.4L362.6,703.5L362.0,702.7L361.4,701.8L360.8,700.9L360.1,700.0L359.5,699.1L358.9,698.2L358.3,697.3L357.7,696.4L357.1,695.5L356.5,694.6L355.9,693.7L355.3,692.7L354.7,691.8L354.2,690.8L353.6,689.9L353.0,688.9L352.4,688.0L351.9,687.0L351.3,686.0L350.7,685.0L350.1,684.0L349.6,683.0L349.0,682.0L348.5,681.0L347.9,680.0L347.3,679.0L346.8,678.0L346.2,677.0L345.7,675.9L345.1,674.9L344.5,673.9L344.0,672.8L343.4,671.8L342.9,670.7L342.4,669.7L341.9,668.7L341.4,667.7L340.9,666.8L340.5,665.9L340.1,665.0L339.7,664.1L339.3,663.3L339.0,662.5L338.7,661.7L338.4,660.9L338.1,660.2L337.9,659.5L337.7,658.8L337.5,658.2L337.3,657.5L337.2,656.9L337.1,656.3L337.0,655.7L336.9,655.1L336.8,654.4L336.8,653.8L336.8,653.1L336.7,652.4L336.7,651.7L336.7,650.9L336.8,650.2L336.8,649.4L336.9,648.6L337.0,647.8L337.1,647.0L337.2,646.2L337.3,645.4L337.5,644.5L337.6,643.7L337.8,642.8L338.0,642.0L338.2,641.1L338.5,640.2L338.7,639.3L339.0,638.4L339.2,637.5L339.5,636.7L339.8,635.7L340.2,634.8L340.5,633.9L340.9,633.0L341.2,632.1L341.6,631.1L342.0,630.2L342.4,629.2L342.8,628.3L343.3,627.3L343.7,626.4L344.2,625.4L344.7,624.4L345.2,623.5L345.7,622.5L346.2,621.5L346.8,620.5L347.3,619.6L347.9,618.6L348.4,617.6L349.0,616.6L349.6,615.6L350.2,614.6L350.8,613.6L351.4,612.7L352.1,611.7L352.7,610.7L353.3,609.8L354.0,608.8L354.6,607.9L355.3,606.9L355.9,606.0L356.6,605.0L357.3,604.1L357.9,603.2L358.6,602.2L359.3,601.3L360.0,600.4L360.7,599.5L361.4,598.6L362.2,597.7L362.9,596.8L363.6,595.9L364.4,595.1L365.1,594.2L365.9,593.3L366.6,592.5L367.4,591.6L368.1,590.8L368.9,589.9L369.7,589.1L370.5,588.2L371.3,587.4L372.1,586.6L372.9,585.8L373.7,585.0L374.5,584.2L375.3,583.4L376.2,582.6L377.0,581.8L377.8,581.0L378.7,580.3L379.5,579.5L380.4,578.7L381.3,578.0L382.1,577.2L383.0,576.5L383.9,575.8L384.8,575.0L385.7,574.3L386.5,573.6L387.4,572.9L388.3,572.2L389.3,571.5L390.2,570.8L391.1,570.2L392.0,569.5L392.9,568.8L393.9,568.2L394.8,567.5L395.7,566.9L396.7,566.2L397.6,565.6L398.6,565.0L399.5,564.4L400.5,563.8L401.4,563.2L402.4,562.6L403.4,562.0L404.4,561.5L405.3,560.9L406.3,560.3L407.3,559.8L408.3,559.3L409.3,558.7L410.3,558.2L411.2,557.7L412.2,557.2L413.2,556.7L414.2,556.2L415.2,555.7L416.2,555.2L416.8,555.0L417.3,554.8L422.0,553.6L450.8,546.6L451.5,546.4L452.3,546.1L453.0,545.8L453.6,545.5L454.2,545.1L454.8,544.6L455.3,544.2L455.8,543.7L456.2,543.1L456.5,542.6L465.9,525.4L467.1,523.3L468.2,521.5L469.7,519.3L471.3,517.0L472.9,515.0L474.4,513.1L476.0,511.2L477.5,509.7L478.7,508.5L479.4,507.8L480.7,506.8L500.1,492.9L500.6,492.5L501.1,492.0L501.5,491.5L501.9,491.0L502.2,490.5L502.5,490.0L502.6,489.4L502.7,488.9L502.7,488.4L502.7,487.8L502.5,487.3L497.1,471.1L499.3,470.5L502.9,469.5L508.1,468.3L514.1,466.9L520.0,465.6L526.0,464.4L532.0,463.1L537.7,462.0L543.0,461.0L547.7,460.0L551.0,459.4L551.1,459.6L551.7,460.5L552.1,461.5L552.6,462.7L553.0,464.1L553.4,466.4L553.9,469.5L554.4,472.8L555.0,476.3L555.5,480.1L555.5,480.1L556.1,483.8L556.1,483.9L556.7,487.5L556.7,487.5L557.3,490.9L557.3,491.0L557.9,494.4L557.9,494.5L558.7,498.1L558.7,498.2L559.6,501.7L559.6,501.8L560.6,505.3L560.6,505.4L561.5,508.4L562.3,511.0L563.1,513.9L563.9,516.9L564.7,520.0L565.3,522.6L565.7,524.9L566.1,527.5L567.6,541.0L567.7,541.5L567.8,542.1L568.1,542.6L568.4,543.0L568.7,543.5L569.2,543.9L569.6,544.2L583.6,553.8L586.7,556.0L588.9,557.6L591.2,559.3L593.3,560.9L595.0,562.3L595.1,563.3L595.2,563.8L595.4,564.3L595.6,564.7L595.9,565.2L596.2,565.6L600.6,570.8L602.3,572.9L603.9,575.0L605.4,577.1L606.8,579.3L608.2,581.5L609.5,583.7L610.7,586.0L611.9,588.3L612.9,590.6L614.0,593.0L614.9,595.4L615.7,597.8L616.5,600.3L617.2,602.8L617.8,605.3L618.4,607.8L618.8,610.4L619.2,613.0L619.5,615.6L619.7,618.2L619.8,620.8L619.9,623.5L619.9,626.2L619.8,628.8L619.6,631.5L619.3,634.2L618.9,636.9L618.5,639.7L617.9,642.4L617.3,645.1L616.6,647.8L615.8,650.5L615.6,651.1L605.4,667.0L602.8,671.1L601.3,673.3L600.5,674.5L600.1,675.1L599.3,676.1L598.5,677.1L597.8,678.1L597.0,679.2L596.3,680.2L595.5,681.2L594.7,682.2L593.9,683.2L593.1,684.1L592.3,685.1L591.5,686.1L590.7,687.1L589.9,688.1L589.1,689.0L588.3,690.0L587.5,691.0L586.7,691.9L585.9,692.9L585.0,693.8L584.2,694.8L583.3,695.7L582.5,696.6L581.6,697.6L580.8,698.5L579.9,699.4L579.1,700.3L578.2,701.2L577.3,702.1L576.4,703.0L575.5,703.9L574.6,704.8L573.7,705.7L572.8,706.6L571.9,707.5L571.0,708.4L570.1,709.2L569.2,710.1L568.2,710.9L567.3,711.8L566.4,712.6L565.4,713.5L564.4,714.3L563.5,715.1L562.5,716.0L561.5,716.8L560.6,717.6L559.6,718.4L558.6,719.2L557.6,720.0L556.6,720.8L555.6,721.6L554.6,722.3L553.5,723.1L552.5,723.9L551.5,724.6L550.4,725.4L549.4,726.1L548.4,726.9L547.3,727.6L546.2,728.3L545.2,729.0L544.1,729.7L543.0,730.4L541.9,731.1L540.9,731.8L539.8,732.5L538.7,733.1L537.6,733.8L536.5,734.4L535.4,735.1L534.2,735.7L533.1,736.3L532.0,737.0L530.9,737.6L529.7,738.2L528.6,738.8L527.4,739.3L526.3,739.9L525.1,740.5L524.0,741.0L522.8,741.6L521.6,742.1L520.5,742.6L519.3,743.1L518.1,743.6L517.0,744.1L515.8,744.6L514.6,745.1L513.4,745.5L512.2,746.0L511.0,746.4L509.8,746.9L508.6,747.3L507.4,747.7L506.2,748.1L505.0,748.5L503.8,748.9L502.6,749.2L501.4,749.6L500.2,749.9L499.0,750.3L497.8,750.6L496.6,750.9L495.4,751.2L494.2,751.5L493.0,751.7L491.8,752.0L490.6,752.2L489.4,752.5L488.2,752.7L487.0,752.9L485.8,753.1L484.5,753.3L483.3,753.5L482.1,753.7L480.9,753.8L479.6,754.0L478.4,754.1L477.2,754.2L476.0,754.3L474.7,754.4L473.5,754.5L472.3,754.6L471.0,754.7L469.8,754.7L468.6,754.8L467.3,754.8L466.1,754.8L464.9,754.8L463.6,754.8L462.4,754.8L461.2,754.8L459.9,754.7L458.7,754.7L457.5,754.6L456.3,754.6L455.0,754.5L453.8,754.4L452.6,754.3L451.4,754.2L450.2,754.1L449.0,753.9L447.8,753.8L446.6,753.6L445.4,753.4L444.2,753.3L443.0,753.1L441.8,752.9L440.6,752.7L439.4,752.4L438.2,752.2L437.1,752.0L435.9,751.7L434.7,751.4L433.6,751.2L432.4,750.9L431.3,750.6L430.1,750.3L429.0,750.0L427.9,749.6L426.7,749.3L425.6,749.0L424.5,748.6L423.4,748.2L422.3,747.9L421.2,747.5L420.1,747.1L419.0,746.7L417.9,746.3L416.8,745.9L415.8,745.4L414.7,745.0L413.7,744.5L412.6,744.1L411.6,743.6L410.5,743.2L409.5,742.7L408.5,742.2L407.5,741.7L406.4,741.2L405.4,740.7L404.4,740.1L403.5,739.6L402.5,739.1L401.5,738.5L400.5,738.0L399.6,737.4L398.6,736.8L397.7,736.3L396.7,735.7L395.8,735.1L394.9,734.5L394.0,733.9L393.1,733.3L392.2,732.6L391.3,732.0L390.4,731.4L389.5,730.7L388.6,730.1L387.8,729.4L386.9,728.8L386.1,728.1L385.2,727.4L384.4,726.7L383.5,726.0L382.7,725.3L381.9,724.6L381.1,723.9Z" fill="none" stroke="#b085d6" stroke-width="0.8"/>
<path d="M1026.2,539.0L1026.2,539.0L1024.8,557.2L1024.8,557.2Z" fill="#685a72" stroke="#685a72" stroke-width="0.7"/>
<path d="M1026.2,539.0L1025.3,540.5L1023.9,558.7L1024.8,557.2Z" fill="#735f80" stroke="#735f80" stroke-width="0.7"/>
<path d="M1025.3,540.5L1024.1,542.2L1022.7,560.5L1023.9,558.7Z" fill="#766185" stroke="#766185" stroke-width="0.7"/>
<path d="M1024.1,542.2L1022.8,543.8L1021.4,562.1L1022.7,560.5Z" fill="#7d658e" stroke="#7d658e" stroke-width="0.7"/>
<path d="M1022.8,543.8L1021.5,545.3L1020.1,563.6L1021.4,562.1Z" fill="#816693" stroke="#816693" stroke-width="0.7"/>
<path d="M1021.5,545.3L1020.1,546.6L1018.7,564.9L1020.1,563.6Z" fill="#886a9d" stroke="#886a9d" stroke-width="0.7"/>
<path d="M1020.1,546.6L1018.7,547.8L1017.3,566.1L1018.7,564.9Z" fill="#8f6ea6" stroke="#8f6ea6" stroke-width="0.7"/>
<path d="M1018.7,547.8L1017.1,549.0L1015.7,567.3L1017.3,566.1Z" fill="#926fab" stroke="#926fab" stroke-width="0.7"/>
<path d="M1017.1,549.0L1015.3,550.2L1013.9,568.4L1015.7,567.3Z" fill="#9973b4" stroke="#9973b4" stroke-width="0.7"/>
<path d="M1015.3,550.2L1013.0,551.5L1011.7,569.7L1013.9,568.4Z" fill="#9d75b9" stroke="#9d75b9" stroke-width="0.7"/>
<path d="M1013.0,551.5L1010.5,552.7L1009.2,571.0L1011.7,569.7Z" fill="#a076be" stroke="#a076be" stroke-width="0.7"/>
<path d="M1010.5,552.7L1007.9,553.9L1005.2,555.0L1003.9,573.3L1006.6,572.2L1009.2,571.0Z" fill="#a478c3" stroke="#a478c3" stroke-width="0.7"/>
<path d="M1005.2,555.0L1003.6,555.6L1002.0,556.2L1000.2,556.8L998.4,557.5L997.2,575.7L999.0,575.1L1000.8,574.4L1002.3,573.9L1003.9,573.3Z" fill="#a77ac7" stroke="#a77ac7" stroke-width="0.7"/>
<path d="M998.4,557.5L996.6,558.1L994.9,558.6L993.1,559.2L991.3,559.8L989.6,560.3L987.9,560.8L986.3,561.3L984.7,561.7L983.6,580.0L985.2,579.5L986.8,579.1L988.5,578.5L990.2,578.0L992.0,577.4L993.7,576.9L995.5,576.3L997.2,575.7Z" fill="#ab7ccc" stroke="#ab7ccc" stroke-width="0.7"/>
<path d="M984.7,561.7L981.7,562.5L978.9,563.2L976.1,563.7L973.2,564.3L972.3,582.5L975.2,582.0L977.9,581.4L980.6,580.7L983.6,580.0Z" fill="#ae7dd1" stroke="#ae7dd1" stroke-width="0.7"/>
<path d="M973.2,564.3L970.5,564.8L968.8,565.1L967.1,565.3L963.9,565.8L960.7,566.2L957.5,566.7L954.3,567.2L951.2,567.6L948.0,568.1L944.8,568.5L941.6,569.0L938.4,569.5L937.8,587.7L941.0,587.2L944.2,586.8L947.3,586.3L950.5,585.8L953.6,585.4L956.8,584.9L959.9,584.5L963.1,584.0L966.2,583.6L967.9,583.3L969.6,583.0L972.3,582.5Z" fill="#b27fd6" stroke="#b27fd6" stroke-width="0.7"/>
<path d="M938.4,569.5L937.9,572.1L937.4,574.8L937.0,577.4L936.5,580.1L936.0,582.8L935.5,585.4L935.0,588.1L934.5,590.8L934.0,593.5L933.5,596.2L933.1,598.6L932.7,600.9L932.5,602.4L932.2,603.9L931.8,606.2L931.3,624.4L931.7,622.0L931.9,620.5L932.2,619.1L932.6,616.7L933.0,614.4L933.5,611.7L934.0,609.0L934.5,606.3L935.0,603.6L935.4,600.9L935.9,598.3L936.4,595.6L936.9,593.0L937.4,590.3L937.8,587.7Z" fill="#57515a" stroke="#57515a" stroke-width="0.7"/>
<path d="M931.8,606.2L931.7,607.6L931.2,625.7L931.3,624.4Z" fill="#535055" stroke="#535055" stroke-width="0.7"/>
<path d="M931.7,607.6L931.5,608.6L931.4,609.5L931.2,610.5L931.1,611.4L930.5,629.6L930.7,628.6L930.9,627.7L931.0,626.7L931.2,625.7Z" fill="#57515a" stroke="#57515a" stroke-width="0.7"/>
<path d="M931.1,611.4L930.9,612.4L930.7,613.4L930.5,614.3L930.3,615.3L929.8,633.4L930.0,632.5L930.2,631.5L930.4,630.5L930.5,629.6Z" fill="#5a535f" stroke="#5a535f" stroke-width="0.7"/>
<path d="M930.3,615.3L930.0,616.2L929.8,617.2L929.6,618.2L929.3,619.1L928.8,637.2L929.1,636.3L929.3,635.3L929.5,634.4L929.8,633.4Z" fill="#5e5564" stroke="#5e5564" stroke-width="0.7"/>
<path d="M929.3,619.1L929.0,620.1L928.7,621.0L928.4,622.0L928.1,622.9L927.7,641.1L928.0,640.1L928.3,639.2L928.5,638.2L928.8,637.2Z" fill="#615768" stroke="#615768" stroke-width="0.7"/>
<path d="M928.1,622.9L927.8,623.9L927.5,624.8L927.2,625.8L926.7,643.9L927.0,643.0L927.4,642.0L927.7,641.1Z" fill="#65586d" stroke="#65586d" stroke-width="0.7"/>
<path d="M927.2,625.8L926.8,626.7L926.5,627.7L926.1,628.6L925.7,629.6L925.2,647.7L925.6,646.7L926.0,645.8L926.4,644.9L926.7,643.9Z" fill="#685a72" stroke="#685a72" stroke-width="0.7"/>
<path d="M925.7,629.6L925.3,630.5L924.9,631.4L924.5,632.4L924.0,633.3L923.6,651.4L924.0,650.5L924.5,649.6L924.9,648.6L925.2,647.7Z" fill="#6c5c77" stroke="#6c5c77" stroke-width="0.7"/>
<path d="M924.0,633.3L923.6,634.3L923.2,635.2L922.7,636.1L922.2,637.0L921.8,655.1L922.3,654.2L922.7,653.3L923.2,652.4L923.6,651.4Z" fill="#6f5e7b" stroke="#6f5e7b" stroke-width="0.7"/>
<path d="M922.2,637.0L921.7,638.0L921.2,638.9L920.7,639.8L920.2,640.7L919.7,641.6L919.3,659.7L919.8,658.8L920.3,657.9L920.8,657.0L921.3,656.1L921.8,655.1Z" fill="#735f80" stroke="#735f80" stroke-width="0.7"/>
<path d="M919.7,641.6L919.2,642.5L918.6,643.4L918.0,644.3L917.5,645.2L917.1,663.3L917.7,662.4L918.2,661.5L918.8,660.6L919.3,659.7Z" fill="#766185" stroke="#766185" stroke-width="0.7"/>
<path d="M917.5,645.2L916.9,646.1L916.3,647.0L915.7,647.9L915.1,648.8L914.7,666.9L915.3,666.0L915.9,665.1L916.5,664.2L917.1,663.3Z" fill="#7a638a" stroke="#7a638a" stroke-width="0.7"/>
<path d="M915.1,648.8L914.4,649.7L913.8,650.6L913.2,651.4L912.5,652.3L912.2,670.4L912.8,669.5L913.5,668.6L914.1,667.8L914.7,666.9Z" fill="#7d658e" stroke="#7d658e" stroke-width="0.7"/>
<path d="M912.5,652.3L911.8,653.2L911.2,654.0L910.5,654.9L909.8,655.7L909.1,656.6L908.8,674.6L909.5,673.8L910.2,672.9L910.9,672.1L911.5,671.2L912.2,670.4Z" fill="#816693" stroke="#816693" stroke-width="0.7"/>
<path d="M909.1,656.6L908.3,657.4L907.6,658.3L906.9,659.1L906.1,659.9L905.4,660.8L905.1,678.8L905.9,678.0L906.6,677.2L907.4,676.3L908.1,675.5L908.8,674.6Z" fill="#846898" stroke="#846898" stroke-width="0.7"/>
<path d="M905.4,660.8L904.6,661.6L903.8,662.4L903.0,663.2L902.2,664.0L902.0,682.0L902.8,681.2L903.6,680.4L904.4,679.6L905.1,678.8Z" fill="#886a9d" stroke="#886a9d" stroke-width="0.7"/>
<path d="M902.2,664.0L901.4,664.8L900.6,665.6L899.8,666.4L898.9,667.2L898.1,668.0L897.9,686.0L898.8,685.2L899.6,684.4L900.4,683.6L901.2,682.8L902.0,682.0Z" fill="#8b6ca1" stroke="#8b6ca1" stroke-width="0.7"/>
<path d="M898.1,668.0L897.2,668.7L896.4,669.5L895.5,670.3L894.6,671.0L893.7,671.8L892.8,672.5L892.7,690.5L893.6,689.8L894.5,689.0L895.3,688.3L896.2,687.5L897.1,686.7L897.9,686.0Z" fill="#8f6ea6" stroke="#8f6ea6" stroke-width="0.7"/>
<path d="M892.8,672.5L891.9,673.2L891.0,674.0L890.0,674.7L889.1,675.4L888.1,676.1L888.1,694.1L889.0,693.4L890.0,692.7L890.9,692.0L891.8,691.2L892.7,690.5Z" fill="#926fab" stroke="#926fab" stroke-width="0.7"/>
<path d="M888.1,676.1L887.2,676.8L886.2,677.5L885.2,678.2L884.3,678.9L883.3,679.6L882.3,680.2L882.3,698.2L883.3,697.6L884.3,696.9L885.2,696.2L886.2,695.5L887.2,694.8L888.1,694.1Z" fill="#9671b0" stroke="#9671b0" stroke-width="0.7"/>
<path d="M882.3,680.2L881.3,680.9L880.3,681.5L879.2,682.2L878.2,682.8L877.2,683.5L876.1,684.1L875.1,684.7L875.2,702.7L876.2,702.1L877.2,701.5L878.3,700.8L879.3,700.2L880.3,699.5L881.3,698.9L882.3,698.2Z" fill="#9973b4" stroke="#9973b4" stroke-width="0.7"/>
<path d="M875.1,684.7L874.0,685.3L873.0,685.9L871.9,686.5L870.8,687.1L869.7,687.7L868.6,688.3L867.5,688.8L867.7,706.8L868.8,706.2L869.9,705.7L870.9,705.1L872.0,704.5L873.1,703.9L874.1,703.3L875.2,702.7Z" fill="#9d75b9" stroke="#9d75b9" stroke-width="0.7"/>
<path d="M867.5,688.8L866.4,689.4L865.3,689.9L864.2,690.5L863.0,691.0L861.9,691.5L860.8,692.1L859.6,692.6L858.5,693.1L858.7,711.0L859.9,710.5L861.0,710.0L862.1,709.5L863.3,709.0L864.4,708.5L865.5,707.9L866.6,707.4L867.7,706.8Z" fill="#a076be" stroke="#a076be" stroke-width="0.7"/>
<path d="M858.5,693.1L857.3,693.6L856.1,694.0L855.0,694.5L853.8,695.0L852.6,695.4L851.4,695.9L850.2,696.3L849.0,696.8L847.8,697.2L846.6,697.6L847.0,715.5L848.2,715.1L849.4,714.7L850.6,714.3L851.8,713.8L853.0,713.4L854.1,712.9L855.3,712.5L856.4,712.0L857.6,711.5L858.7,711.0Z" fill="#a478c3" stroke="#a478c3" stroke-width="0.7"/>
<path d="M846.6,697.6L845.4,698.0L844.2,698.4L843.0,698.8L841.8,699.2L840.5,699.5L839.3,699.9L838.1,700.2L836.8,700.6L835.6,700.9L834.3,701.2L833.1,701.5L831.8,701.8L830.6,702.1L829.3,702.4L829.9,720.4L831.1,720.1L832.4,719.8L833.6,719.5L834.9,719.2L836.1,718.8L837.3,718.5L838.6,718.2L839.8,717.8L841.0,717.5L842.2,717.1L843.4,716.7L844.6,716.3L845.8,715.9L847.0,715.5Z" fill="#a77ac7" stroke="#a77ac7" stroke-width="0.7"/>
<path d="M829.3,702.4L828.0,702.7L826.8,703.0L825.5,703.2L824.2,703.5L822.9,703.7L821.7,703.9L820.4,704.2L819.1,704.4L817.8,704.6L816.5,704.8L815.2,704.9L813.9,705.1L812.7,705.3L811.4,705.4L810.1,705.6L808.8,705.7L807.5,705.8L806.2,705.9L804.9,706.0L803.6,706.1L802.3,706.2L801.0,706.3L799.7,706.3L798.4,706.4L797.1,706.4L795.8,706.4L794.5,706.5L793.2,706.5L791.9,706.5L790.6,706.5L789.3,706.5L788.0,706.4L786.7,706.4L785.4,706.4L784.1,706.3L782.8,706.2L781.5,706.2L780.2,706.1L779.0,706.0L777.7,705.9L778.9,723.8L780.1,723.9L781.4,724.0L782.7,724.1L783.9,724.2L785.2,724.2L786.5,724.3L787.8,724.3L789.1,724.4L790.3,724.4L791.6,724.4L792.9,724.4L794.2,724.4L795.5,724.4L796.8,724.4L798.0,724.3L799.3,724.3L800.6,724.2L801.9,724.2L803.2,724.1L804.5,724.0L805.8,723.9L807.0,723.8L808.3,723.7L809.6,723.6L810.9,723.5L812.2,723.3L813.4,723.2L814.7,723.0L816.0,722.9L817.3,722.7L818.5,722.5L819.8,722.3L821.1,722.1L822.4,721.9L823.6,721.6L824.9,721.4L826.1,721.2L827.4,720.9L828.6,720.6L829.9,720.4Z" fill="#ab7ccc" stroke="#ab7ccc" stroke-width="0.7"/>
<path d="M777.7,705.9L776.4,705.8L775.1,705.6L773.8,705.5L772.6,705.4L771.3,705.2L770.0,705.0L768.7,704.9L767.5,704.7L766.2,704.5L765.0,704.3L763.7,704.1L762.5,703.9L761.2,703.6L760.0,703.4L761.3,721.3L762.6,721.6L763.8,721.8L765.0,722.0L766.3,722.2L767.5,722.4L768.8,722.6L770.0,722.8L771.3,723.0L772.5,723.1L773.8,723.3L775.1,723.4L776.3,723.6L777.6,723.7L778.9,723.8Z" fill="#a77ac7" stroke="#a77ac7" stroke-width="0.7"/>
<path d="M760.0,703.4L758.7,703.1L757.5,702.9L756.3,702.6L755.0,702.3L753.8,702.0L752.6,701.7L751.4,701.4L750.2,701.1L749.0,700.8L747.8,700.5L749.3,718.4L750.5,718.8L751.7,719.1L752.9,719.4L754.1,719.7L755.3,720.0L756.5,720.3L757.7,720.5L758.9,720.8L760.1,721.1L761.3,721.3Z" fill="#a478c3" stroke="#a478c3" stroke-width="0.7"/>
<path d="M747.8,700.5L746.6,700.1L745.4,699.8L744.2,699.4L743.0,699.1L741.8,698.7L740.7,698.3L739.5,697.9L738.4,697.5L740.0,715.4L741.1,715.9L742.3,716.2L743.4,716.6L744.6,717.0L745.7,717.4L746.9,717.7L748.1,718.1L749.3,718.4Z" fill="#a076be" stroke="#a076be" stroke-width="0.7"/>
<path d="M738.4,697.5L737.2,697.1L736.1,696.7L734.9,696.2L733.8,695.8L732.7,695.3L731.5,694.9L730.4,694.4L729.3,694.0L731.0,711.9L732.1,712.4L733.2,712.9L734.3,713.3L735.5,713.8L736.6,714.2L737.7,714.6L738.8,715.0L740.0,715.4Z" fill="#9d75b9" stroke="#9d75b9" stroke-width="0.7"/>
<path d="M729.3,694.0L728.2,693.5L727.1,693.0L726.0,692.5L725.0,692.0L723.9,691.5L722.8,691.0L724.6,708.9L725.7,709.4L726.7,710.0L727.8,710.5L728.9,711.0L729.9,711.4L731.0,711.9Z" fill="#9973b4" stroke="#9973b4" stroke-width="0.7"/>
<path d="M722.8,691.0L721.8,690.4L720.7,689.9L719.7,689.3L718.6,688.8L717.6,688.2L716.6,687.7L718.4,705.7L719.5,706.2L720.5,706.8L721.5,707.3L722.5,707.9L723.6,708.4L724.6,708.9Z" fill="#9671b0" stroke="#9671b0" stroke-width="0.7"/>
<path d="M716.6,687.7L715.6,687.1L714.6,686.5L713.6,685.9L712.6,685.3L711.6,684.7L710.6,684.1L712.6,702.1L713.5,702.7L714.5,703.3L715.5,703.9L716.4,704.5L717.4,705.1L718.4,705.7Z" fill="#926fab" stroke="#926fab" stroke-width="0.7"/>
<path d="M710.6,684.1L709.7,683.5L708.7,682.9L707.8,682.2L706.8,681.6L705.9,680.9L707.9,699.0L708.8,699.6L709.7,700.2L710.7,700.9L711.6,701.5L712.6,702.1Z" fill="#8f6ea6" stroke="#8f6ea6" stroke-width="0.7"/>
<path d="M705.9,680.9L705.0,680.3L704.1,679.6L703.2,679.0L702.3,678.3L701.4,677.6L703.4,695.6L704.3,696.3L705.2,697.0L706.1,697.6L707.0,698.3L707.9,699.0Z" fill="#8b6ca1" stroke="#8b6ca1" stroke-width="0.7"/>
<path d="M701.4,677.6L700.5,676.9L699.7,676.2L698.8,675.5L698.0,674.8L697.1,674.1L699.2,692.2L700.0,692.9L700.8,693.6L701.7,694.3L702.5,694.9L703.4,695.6Z" fill="#886a9d" stroke="#886a9d" stroke-width="0.7"/>
<path d="M697.1,674.1L696.3,673.4L695.5,672.7L694.7,672.0L693.9,671.2L693.1,670.5L695.2,688.5L695.9,689.3L696.7,690.0L697.5,690.7L698.3,691.4L699.2,692.2Z" fill="#846898" stroke="#846898" stroke-width="0.7"/>
<path d="M693.1,670.5L692.3,669.7L691.5,669.0L690.8,668.2L690.0,667.5L692.1,685.5L692.9,686.3L693.6,687.0L694.4,687.8L695.2,688.5Z" fill="#816693" stroke="#816693" stroke-width="0.7"/>
<path d="M690.0,667.5L689.3,666.7L688.5,665.9L687.8,665.2L686.4,663.6L688.6,681.6L690.0,683.2L690.7,684.0L691.4,684.8L692.1,685.5Z" fill="#7d658e" stroke="#7d658e" stroke-width="0.7"/>
<path d="M686.4,663.6L685.2,662.4L684.0,661.3L686.2,679.4L687.4,680.5L688.6,681.6Z" fill="#816693" stroke="#816693" stroke-width="0.7"/>
<path d="M684.0,661.3L682.7,660.2L681.4,659.1L683.7,677.2L684.9,678.3L686.2,679.4Z" fill="#846898" stroke="#846898" stroke-width="0.7"/>
<path d="M681.4,659.1L679.7,657.7L678.0,656.2L676.2,654.8L674.5,653.4L672.8,652.0L675.1,670.1L676.8,671.5L678.5,672.9L680.2,674.3L681.9,675.7L683.7,677.2Z" fill="#886a9d" stroke="#886a9d" stroke-width="0.7"/>
<path d="M672.8,652.0L672.7,652.0L675.0,670.1L675.1,670.1Z" fill="#735f80" stroke="#735f80" stroke-width="0.7"/>
<path d="M672.7,652.0L671.1,649.6L669.6,647.1L671.9,665.2L673.4,667.7L675.0,670.1Z" fill="#6f5e7b" stroke="#6f5e7b" stroke-width="0.7"/>
<path d="M669.6,647.1L668.1,644.7L670.5,662.8L671.9,665.2Z" fill="#6c5c77" stroke="#6c5c77" stroke-width="0.7"/>
<path d="M668.1,644.7L666.8,642.2L665.5,639.7L667.8,657.8L669.1,660.3L670.5,662.8Z" fill="#685a72" stroke="#685a72" stroke-width="0.7"/>
<path d="M665.5,639.7L664.3,637.2L666.6,655.3L667.8,657.8Z" fill="#65586d" stroke="#65586d" stroke-width="0.7"/>
<path d="M664.3,637.2L663.2,634.6L662.1,632.0L664.5,650.1L665.5,652.7L666.6,655.3Z" fill="#615768" stroke="#615768" stroke-width="0.7"/>
<path d="M662.1,632.0L661.2,629.4L663.6,647.5L664.5,650.1Z" fill="#5e5564" stroke="#5e5564" stroke-width="0.7"/>
<path d="M661.2,629.4L660.3,626.8L659.5,624.2L661.9,642.3L662.7,644.9L663.6,647.5Z" fill="#5a535f" stroke="#5a535f" stroke-width="0.7"/>
<path d="M659.5,624.2L658.8,621.5L661.2,639.7L661.9,642.3Z" fill="#57515a" stroke="#57515a" stroke-width="0.7"/>
<path d="M658.8,621.5L658.2,618.9L660.6,637.0L661.2,639.7Z" fill="#535055" stroke="#535055" stroke-width="0.7"/>
<path d="M658.2,618.9L657.7,616.2L657.2,613.5L659.7,631.7L660.1,634.4L660.6,637.0Z" fill="#504e51" stroke="#504e51" stroke-width="0.7"/>
<path d="M666.1,560.1L665.7,557.6L665.3,555.2L665.0,552.8L667.2,571.1L667.6,573.5L668.0,575.9L668.4,578.3Z" fill="#504e51" stroke="#504e51" stroke-width="0.7"/>
<path d="M667.3,550.1L668.9,548.0L670.3,546.4L671.1,545.4L671.8,544.5L672.5,543.7L673.3,542.8L674.0,542.0L674.7,541.1L675.5,540.3L676.2,539.5L677.0,538.7L677.8,537.9L678.6,537.1L679.3,536.2L680.1,535.5L680.9,534.7L681.7,533.9L682.5,533.1L683.4,532.3L684.2,531.6L685.0,530.8L685.9,530.0L686.7,529.3L687.6,528.5L688.4,527.8L689.3,527.1L690.2,526.3L691.0,525.6L691.9,524.9L692.8,524.2L693.7,523.5L694.6,522.8L695.5,522.1L696.5,521.4L697.4,520.7L698.3,520.1L699.2,519.4L700.2,518.7L701.1,518.1L702.1,517.4L703.0,516.8L704.0,516.2L705.0,515.5L705.9,514.9L706.9,514.3L707.9,513.7L708.9,513.1L709.9,512.5L710.9,511.9L711.9,511.3L712.9,510.8L713.9,510.2L714.9,509.6L716.0,509.1L717.0,508.5L718.0,508.0L719.1,507.5L720.1,506.9L721.2,506.4L722.2,505.9L723.3,505.4L724.3,504.9L725.4,504.4L726.4,503.9L727.5,503.4L728.6,503.0L729.7,502.5L730.8,502.0L731.8,501.6L732.9,501.1L734.0,500.7L735.1,500.3L736.2,499.8L737.3,499.4L738.4,499.0L739.6,498.6L740.7,498.2L741.8,497.8L742.9,497.4L744.0,497.1L745.2,496.7L746.3,496.3L747.4,496.0L748.6,495.6L749.7,495.3L750.8,495.0L752.0,494.6L753.1,494.3L754.3,494.0L755.4,493.7L756.6,493.4L757.7,493.1L758.9,492.8L760.1,492.6L761.2,492.3L762.4,492.0L763.6,491.8L764.7,491.5L765.9,491.3L767.1,491.1L768.2,490.9L769.4,490.6L770.6,490.4L771.8,490.2L773.0,490.0L774.1,489.8L775.3,489.7L776.5,489.5L777.7,489.3L778.9,489.2L780.1,489.0L781.3,488.9L782.4,488.8L783.6,488.6L784.8,488.5L786.0,488.4L787.2,488.3L788.4,488.2L789.6,488.1L790.8,488.0L792.0,488.0L793.2,487.9L794.4,487.8L795.6,487.8L796.8,487.7L798.0,487.7L799.2,487.7L800.4,487.6L801.6,487.6L802.8,487.6L804.0,487.6L805.2,487.6L806.4,487.6L807.6,487.7L808.8,487.7L810.0,487.7L811.1,487.8L812.3,487.8L813.5,487.9L814.7,488.0L815.9,488.0L817.1,488.1L818.3,488.2L819.5,488.3L820.7,488.4L821.9,488.5L821.9,488.5L823.4,488.8L824.9,489.0L828.1,489.5L831.2,490.0L834.3,490.6L837.4,491.2L840.5,491.9L843.5,492.7L846.6,493.5L849.6,494.4L852.5,495.3L855.5,496.3L858.4,497.4L861.3,498.5L864.1,499.6L866.9,500.8L869.7,502.1L872.4,503.4L875.1,504.8L877.7,506.2L880.3,507.6L882.9,509.2L885.4,510.7L887.9,512.3L890.3,514.0L892.6,515.7L894.5,517.1L896.2,518.3L898.7,519.7L901.3,520.9L904.0,521.9L906.9,522.6L909.9,523.2L912.9,523.5L913.5,523.5L931.5,534.6L961.3,510.5L966.6,506.4L970.3,503.6L973.7,501.2L975.6,499.9L978.1,501.7L982.0,504.7L986.2,508.0L990.5,511.4L995.3,515.3L1000.2,519.4L1005.2,523.4L1010.2,527.3L1015.4,531.3L1020.6,535.1L1025.8,538.7L1026.2,539.0L1026.2,539.0L1025.3,540.5L1024.1,542.2L1022.8,543.8L1021.5,545.3L1020.1,546.6L1018.7,547.8L1017.1,549.0L1015.3,550.2L1013.0,551.5L1010.5,552.7L1007.9,553.9L1005.2,555.0L1002.0,556.2L998.4,557.5L994.9,558.6L991.3,559.8L987.9,560.8L984.7,561.7L981.7,562.5L978.9,563.2L976.1,563.7L973.2,564.3L970.5,564.8L967.1,565.3L938.4,569.5L933.5,596.2L932.7,600.9L932.2,603.9L931.8,606.2L931.7,607.6L931.5,608.6L931.4,609.5L931.2,610.5L931.1,611.4L930.9,612.4L930.7,613.4L930.5,614.3L930.3,615.3L930.0,616.2L929.8,617.2L929.6,618.2L929.3,619.1L929.0,620.1L928.7,621.0L928.4,622.0L928.1,622.9L927.8,623.9L927.5,624.8L927.2,625.8L926.8,626.7L926.5,627.7L926.1,628.6L925.7,629.6L925.3,630.5L924.9,631.4L924.5,632.4L924.0,633.3L923.6,634.3L923.2,635.2L922.7,636.1L922.2,637.0L921.7,638.0L921.2,638.9L920.7,639.8L920.2,640.7L919.7,641.6L919.2,642.5L918.6,643.4L918.0,644.3L917.5,645.2L916.9,646.1L916.3,647.0L915.7,647.9L915.1,648.8L914.4,649.7L913.8,650.6L913.2,651.4L912.5,652.3L911.8,653.2L911.2,654.0L910.5,654.9L909.8,655.7L909.1,656.6L908.3,657.4L907.6,658.3L906.9,659.1L906.1,659.9L905.4,660.8L904.6,661.6L903.8,662.4L903.0,663.2L902.2,664.0L901.4,664.8L900.6,665.6L899.8,666.4L898.9,667.2L898.1,668.0L897.2,668.7L896.4,669.5L895.5,670.3L894.6,671.0L893.7,671.8L892.8,672.5L891.9,673.2L891.0,674.0L890.0,674.7L889.1,675.4L888.1,676.1L887.2,676.8L886.2,677.5L885.2,678.2L884.3,678.9L883.3,679.6L882.3,680.2L881.3,680.9L880.3,681.5L879.2,682.2L878.2,682.8L877.2,683.5L876.1,684.1L875.1,684.7L874.0,685.3L873.0,685.9L871.9,686.5L870.8,687.1L869.7,687.7L868.6,688.3L867.5,688.8L866.4,689.4L865.3,689.9L864.2,690.5L863.0,691.0L861.9,691.5L860.8,692.1L859.6,692.6L858.5,693.1L857.3,693.6L856.1,694.0L855.0,694.5L853.8,695.0L852.6,695.4L851.4,695.9L850.2,696.3L849.0,696.8L847.8,697.2L846.6,697.6L845.4,698.0L844.2,698.4L843.0,698.8L841.8,699.2L840.5,699.5L839.3,699.9L838.1,700.2L836.8,700.6L835.6,700.9L834.3,701.2L833.1,701.5L831.8,701.8L830.6,702.1L829.3,702.4L828.0,702.7L826.8,703.0L825.5,703.2L824.2,703.5L822.9,703.7L821.7,703.9L820.4,704.2L819.1,704.4L817.8,704.6L816.5,704.8L815.2,704.9L813.9,705.1L812.7,705.3L811.4,705.4L810.1,705.6L808.8,705.7L807.5,705.8L806.2,705.9L804.9,706.0L803.6,706.1L802.3,706.2L801.0,706.3L799.7,706.3L798.4,706.4L797.1,706.4L795.8,706.4L794.5,706.5L793.2,706.5L791.9,706.5L790.6,706.5L789.3,706.5L788.0,706.4L786.7,706.4L785.4,706.4L784.1,706.3L782.8,706.2L781.5,706.2L780.2,706.1L779.0,706.0L777.7,705.9L776.4,705.8L775.1,705.6L773.8,705.5L772.6,705.4L771.3,705.2L770.0,705.0L768.7,704.9L767.5,704.7L766.2,704.5L765.0,704.3L763.7,704.1L762.5,703.9L761.2,703.6L760.0,703.4L758.7,703.1L757.5,702.9L756.3,702.6L755.0,702.3L753.8,702.0L752.6,701.7L751.4,701.4L750.2,701.1L749.0,700.8L747.8,700.5L746.6,700.1L745.4,699.8L744.2,699.4L743.0,699.1L741.8,698.7L740.7,698.3L739.5,697.9L738.4,697.5L737.2,697.1L736.1,696.7L734.9,696.2L733.8,695.8L732.7,695.3L731.5,694.9L730.4,694.4L729.3,694.0L728.2,693.5L727.1,693.0L726.0,692.5L725.0,692.0L723.9,691.5L722.8,691.0L721.8,690.4L720.7,689.9L719.7,689.3L718.6,688.8L717.6,688.2L716.6,687.7L715.6,687.1L714.6,686.5L713.6,685.9L712.6,685.3L711.6,684.7L710.6,684.1L709.7,683.5L708.7,682.9L707.8,682.2L706.8,681.6L705.9,680.9L705.0,680.3L704.1,679.6L703.2,679.0L702.3,678.3L701.4,677.6L700.5,676.9L699.7,676.2L698.8,675.5L698.0,674.8L697.1,674.1L696.3,673.4L695.5,672.7L694.7,672.0L693.9,671.2L693.1,670.5L692.3,669.7L691.5,669.0L690.8,668.2L690.0,667.5L689.3,666.7L688.5,665.9L687.8,665.2L686.4,663.6L684.0,661.3L681.4,659.1L678.0,656.2L672.8,652.0L672.7,652.0L671.1,649.6L669.6,647.1L668.1,644.7L666.8,642.2L665.5,639.7L664.3,637.2L663.2,634.6L662.1,632.0L661.2,629.4L660.3,626.8L659.5,624.2L658.8,621.5L658.2,618.9L657.7,616.2L657.2,613.5L656.9,610.8L656.6,608.1L656.4,605.5L656.3,602.8L656.3,600.1L656.4,597.4L656.5,594.7L656.8,592.0L657.1,589.3L657.5,586.6L658.0,584.0L658.5,581.3L659.2,578.7L659.9,576.1L660.7,573.5L661.6,570.9L662.5,568.3L663.6,565.8L666.1,560.1L665.0,552.8Z" fill="url(#tg)" stroke="#a67ccc" stroke-width="0.9"/>
<path d="M673.4,552.8L673.4,552.8L675.1,550.8L675.1,550.8L676.5,549.1L676.5,549.1L677.3,548.1L678.0,547.3L678.7,546.5L679.4,545.7L680.0,544.9L680.8,544.1L681.5,543.3L682.2,542.5L682.9,541.7L683.6,540.9L684.4,540.2L685.1,539.4L685.9,538.6L686.6,537.9L687.4,537.1L688.2,536.4L688.9,535.6L689.7,534.9L690.5,534.2L691.3,533.5L692.1,532.7L692.9,532.0L693.7,531.3L694.6,530.6L695.4,529.9L696.2,529.2L697.1,528.6L697.9,527.9L698.8,527.2L699.6,526.6L700.5,525.9L701.4,525.2L702.3,524.6L703.1,524.0L704.0,523.3L704.9,522.7L705.8,522.1L706.7,521.5L707.6,520.8L708.5,520.2L709.5,519.6L710.4,519.0L711.3,518.5L712.3,517.9L713.2,517.3L714.1,516.7L715.1,516.2L716.1,515.6L717.0,515.1L718.0,514.5L718.9,514.0L719.9,513.5L720.9,512.9L721.9,512.4L722.9,511.9L723.9,511.4L724.9,510.9L725.9,510.4L726.9,509.9L727.9,509.5L728.9,509.0L729.9,508.5L730.9,508.1L731.9,507.6L733.0,507.2L734.0,506.7L735.0,506.3L736.1,505.9L737.1,505.5L738.1,505.1L739.2,504.6L740.2,504.2L741.3,503.9L742.4,503.5L743.4,503.1L744.5,502.7L745.6,502.4L746.6,502.0L747.7,501.6L748.8,501.3L749.8,501.0L750.9,500.6L752.0,500.3L753.1,500.0L754.2,499.7L755.3,499.4L756.4,499.1L757.5,498.8L758.6,498.5L759.7,498.2L760.8,498.0L761.9,497.7L763.0,497.5L764.1,497.2L765.2,497.0L766.3,496.7L767.4,496.5L768.5,496.3L769.7,496.1L770.8,495.9L771.9,495.7L773.0,495.5L774.1,495.3L775.3,495.1L776.4,494.9L777.5,494.8L778.7,494.6L779.8,494.5L780.9,494.3L782.1,494.2L783.2,494.1L784.3,493.9L785.5,493.8L786.6,493.7L787.7,493.6L788.9,493.5L790.0,493.5L791.1,493.4L792.3,493.3L793.4,493.2L794.6,493.2L795.7,493.1L796.8,493.1L798.0,493.1L799.1,493.0L800.3,493.0L801.4,493.0L802.5,493.0L803.7,493.0L804.8,493.0L806.0,493.0L807.1,493.0L808.2,493.1L809.4,493.1L810.5,493.1L811.7,493.2L812.8,493.3L813.9,493.3L815.1,493.4L816.2,493.5L817.3,493.6L818.5,493.7L819.6,493.8L820.5,493.8L821.6,494.0L822.0,494.1L823.4,494.3L826.4,494.7L829.4,495.2L832.3,495.8L835.3,496.4L838.2,497.1L841.1,497.8L843.9,498.6L846.8,499.4L849.6,500.3L852.4,501.2L855.1,502.2L857.8,503.3L860.5,504.4L863.2,505.5L865.8,506.7L868.4,508.0L870.9,509.3L873.4,510.6L875.9,512.0L878.3,513.4L880.7,514.9L883.0,516.5L885.3,518.0L887.5,519.7L889.4,521.0L889.6,521.2L891.3,522.4L891.9,522.8L894.3,524.1L894.9,524.4L897.5,525.6L898.2,525.9L901.0,526.9L901.6,527.1L904.5,527.9L905.2,528.0L908.2,528.6L908.9,528.7L910.6,528.9L927.0,539.0L927.5,539.3L928.2,539.6L928.8,539.8L929.5,540.0L930.2,540.2L931.0,540.2L931.7,540.3L932.4,540.2L933.1,540.1L933.8,540.0L934.5,539.8L935.2,539.6L935.8,539.3L936.4,538.9L936.9,538.5L966.7,514.4L971.9,510.2L975.4,507.5L975.6,507.4L976.9,508.5L981.0,511.7L985.3,515.1L990.0,519.0L990.0,519.0L995.0,523.1L995.0,523.1L1000.0,527.1L1000.1,527.1L1005.1,531.1L1005.1,531.1L1010.3,535.1L1010.4,535.2L1015.6,539.0L1015.8,539.2L1017.1,540.0L1016.6,540.6L1015.5,541.8L1014.4,542.8L1013.3,543.8L1012.1,544.7L1010.6,545.6L1008.6,546.7L1006.4,547.9L1004.0,548.9L1001.6,549.9L998.6,551.0L995.2,552.2L991.8,553.4L988.3,554.4L985.0,555.4L982.0,556.3L979.2,557.0L976.6,557.6L974.0,558.2L971.3,558.7L968.8,559.1L965.5,559.7L936.9,563.8L936.3,563.9L935.6,564.1L935.0,564.3L934.3,564.5L933.8,564.9L933.2,565.2L932.8,565.6L932.3,566.0L931.9,566.5L931.6,567.0L931.4,567.5L931.2,568.0L931.0,568.6L926.1,595.3L926.1,595.3L925.2,600.0L925.2,600.0L924.7,603.0L924.7,603.0L924.3,605.4L924.3,605.5L924.1,606.9L924.0,607.8L923.8,608.7L923.7,609.6L923.5,610.5L923.3,611.4L923.2,612.3L923.0,613.2L922.8,614.1L922.5,615.0L922.3,615.9L922.1,616.8L921.8,617.7L921.6,618.6L921.3,619.5L921.0,620.4L920.7,621.3L920.4,622.2L920.1,623.1L919.8,624.0L919.5,624.9L919.1,625.8L918.8,626.7L918.4,627.6L918.0,628.5L917.6,629.3L917.2,630.2L916.8,631.1L916.4,632.0L916.0,632.9L915.6,633.7L915.1,634.6L914.6,635.5L914.2,636.3L913.7,637.2L913.2,638.1L912.7,638.9L912.2,639.8L911.7,640.6L911.1,641.5L910.6,642.3L910.0,643.2L909.5,644.0L908.9,644.8L908.3,645.7L907.7,646.5L907.1,647.3L906.5,648.2L905.9,649.0L905.3,649.8L904.6,650.6L904.0,651.4L903.3,652.2L902.6,653.0L902.0,653.8L901.3,654.6L900.6,655.4L899.9,656.2L899.1,656.9L898.4,657.7L897.7,658.5L896.9,659.2L896.2,660.0L895.4,660.7L894.6,661.5L893.9,662.2L893.1,663.0L892.3,663.7L891.5,664.4L890.6,665.1L889.8,665.8L889.0,666.6L888.1,667.3L887.3,668.0L886.4,668.6L885.5,669.3L884.7,670.0L883.8,670.7L882.9,671.4L882.0,672.0L881.1,672.7L880.2,673.3L879.2,674.0L878.3,674.6L877.4,675.2L876.4,675.8L875.5,676.5L874.5,677.1L873.5,677.7L872.5,678.3L871.6,678.9L870.6,679.4L869.6,680.0L868.6,680.6L867.5,681.1L866.5,681.7L865.5,682.2L864.5,682.8L863.4,683.3L862.4,683.8L861.3,684.3L860.3,684.9L859.2,685.4L858.1,685.8L857.1,686.3L856.0,686.8L854.9,687.3L853.8,687.7L852.7,688.2L851.6,688.6L850.5,689.1L849.4,689.5L848.3,689.9L847.2,690.3L846.0,690.7L844.9,691.1L843.8,691.5L842.6,691.9L841.5,692.3L840.3,692.6L839.2,693.0L838.0,693.3L836.9,693.7L835.7,694.0L834.5,694.3L833.3,694.6L832.2,694.9L831.0,695.2L829.8,695.5L828.6,695.8L827.4,696.1L826.2,696.3L825.0,696.6L823.9,696.8L822.7,697.0L821.5,697.3L820.2,697.5L819.0,697.7L817.8,697.9L816.6,698.1L815.4,698.2L814.2,698.4L813.0,698.6L811.8,698.7L810.6,698.9L809.3,699.0L808.1,699.1L806.9,699.2L805.7,699.3L804.5,699.4L803.2,699.5L802.0,699.6L800.8,699.7L799.6,699.7L798.3,699.8L797.1,699.8L795.9,699.8L794.7,699.9L793.4,699.9L792.2,699.9L791.0,699.9L789.8,699.9L788.6,699.8L787.3,699.8L786.1,699.7L784.9,699.7L783.7,699.6L782.5,699.6L781.3,699.5L780.1,699.4L778.9,699.3L777.6,699.2L776.4,699.1L775.2,698.9L774.0,698.8L772.8,698.7L771.6,698.5L770.5,698.3L769.3,698.2L768.1,698.0L766.9,697.8L765.7,697.6L764.5,697.4L763.4,697.2L762.2,697.0L761.0,696.7L759.9,696.5L758.7,696.2L757.6,696.0L756.4,695.7L755.3,695.4L754.1,695.1L753.0,694.8L751.8,694.5L750.7,694.2L749.6,693.9L748.5,693.6L747.3,693.2L746.2,692.9L745.1,692.5L744.0,692.2L742.9,691.8L741.9,691.4L740.8,691.0L739.7,690.7L738.6,690.2L737.6,689.8L736.5,689.4L735.4,689.0L734.4,688.6L733.3,688.1L732.3,687.7L731.3,687.2L730.3,686.7L729.2,686.3L728.2,685.8L727.2,685.3L726.2,684.8L725.2,684.3L724.3,683.8L723.3,683.3L722.3,682.7L721.4,682.2L720.4,681.7L719.5,681.1L718.5,680.6L717.6,680.0L716.7,679.5L715.8,678.9L714.8,678.3L713.9,677.7L713.1,677.1L712.2,676.5L711.3,675.9L710.4,675.3L709.6,674.7L708.7,674.1L707.9,673.4L707.0,672.8L706.2,672.1L705.4,671.5L704.6,670.8L703.8,670.2L703.0,669.5L702.2,668.8L701.5,668.2L700.7,667.5L699.9,666.8L699.2,666.1L698.5,665.4L697.7,664.7L697.0,664.0L696.3,663.3L695.6,662.5L694.9,661.8L694.2,661.1L692.8,659.6L692.5,659.2L690.1,656.9L689.9,656.8L687.4,654.6L687.3,654.5L683.8,651.6L683.7,651.6L679.2,647.9L678.1,646.3L676.6,644.0L675.3,641.7L674.0,639.3L672.7,637.0L671.6,634.6L670.5,632.2L669.5,629.7L668.6,627.3L667.8,624.8L667.0,622.3L666.4,619.8L665.8,617.3L665.3,614.8L664.9,612.3L664.5,609.7L664.2,607.2L664.1,604.6L664.0,602.1L663.9,599.6L664.0,597.0L664.1,594.5L664.3,591.9L664.6,589.4L665.0,586.9L665.4,584.4L666.0,581.8L666.6,579.4L667.2,576.9L668.0,574.4L668.8,571.9L669.7,569.5L670.7,567.1L673.1,561.5L673.3,561.0L673.5,560.4L673.5,559.9L673.6,559.4L673.5,558.9L672.7,553.7Z" fill="none" stroke="#b085d6" stroke-width="0.8"/>
<g fill="none" stroke="#956bbd" stroke-width="4.3" stroke-linecap="round" stroke-linejoin="round">
<g transform="translate(310,520) scale(0.25)">
<path d="M160,385 Q200,315 260,262 Q330,205 450,190 Q570,180 680,192 L795,212"/>
<path d="M375,180 Q470,135 570,100"/>
<path d="M135,420 Q300,355 500,300 T900,195 L1076,125"/>
<path d="M135,420 Q118,480 116,550 L120,585" stroke-dasharray="40 6"/>
<path d="M200,735 Q300,754 450,762 Q600,762 750,742 L900,716"/>
<path d="M920,690 Q1000,640 1076,585"/>
<path d="M895,380 Q1000,355 1076,335"/>
<path d="M425,558 L510,562 Q530,520 590,503 Q640,505 662,540"/>
<path d="M410,530 L425,558 M355,553 Q380,572 405,580 M320,585 Q345,600 375,605 M372,625 L372,640"/>
<path d="M735,545 Q735,495 790,466 Q845,455 882,492 L960,460 L975,440"/>
<path d="M962,418 L975,435 M985,465 Q1010,450 1025,425 M1010,475 Q1040,465 1060,440 M740,565 L740,575"/>
<path d="M640,0 Q615,40 615,95 M570,100 Q590,135 640,135 Q720,125 770,102 Q830,105 900,140 L965,155"/>
<path d="M690,68 Q720,55 750,57 M800,65 L800,40 L825,38 M865,62 Q900,58 935,72"/>
</g>
<g transform="translate(440,410) scale(0.25)">
<path d="M190,235 L450,200"/>
<path d="M190,240 L210,320 M245,320 L260,390" stroke-dasharray="14 8"/>
<path d="M100,520 Q100,450 135,405 L280,490"/>
<path d="M300,485 L420,440 L500,420"/>
<path d="M545,565 Q620,610 690,690 L720,770"/>
<path d="M485,235 L490,300 M470,180 L478,200" />
</g>
<g transform="translate(500,624) scale(0.25)">
<path d="M0,75 Q40,40 90,50 L125,78 L200,45 M200,12 L215,35 M225,45 Q250,30 265,8 M250,58 Q285,50 300,25"/>
<path d="M160,275 Q320,170 460,10"/>
<path d="M150,312 Q260,290 360,252"/>
<path d="M745,110 Q900,135 1076,135"/>
</g>
<g transform="translate(640,470) scale(0.25)">
<path d="M275,195 Q380,145 500,112 Q620,92 760,100 L900,135"/>
<path d="M210,235 Q300,215 420,206 Q560,205 690,232"/>
<path d="M75,430 Q200,365 400,310 T780,220 L940,148 L1060,215"/>
<path d="M75,430 Q68,480 72,520" stroke-dasharray="40 6"/>
<path d="M95,385 Q140,305 215,240"/>
<path d="M185,725 Q300,746 450,752 Q600,752 750,735 Q900,712 1076,670"/>
<path d="M880,690 Q960,632 1040,560 L1076,525"/>
<path d="M810,392 Q900,372 1000,340 L1076,318"/>
<path d="M345,612 Q350,565 410,530 Q480,505 550,525 Q585,545 598,572"/>
<path d="M682,532 Q690,490 750,465 Q820,448 890,475 Q925,495 938,530"/>
</g>
<g transform="translate(420,410) scale(0.20446)" stroke="none">
<polygon points="690,280 700,285 702,480 630,492 668,400" fill="#8a66a9"/>
<polygon points="745,390 790,398 822,440 826,505 800,512 770,470" fill="#ad80d8"/>
<polygon points="748,530 756,528 768,640 745,636" fill="#7f5f9c"/>
</g>
</g>

</g>
<clipPath id="pk"><path d="M909.7,496.2L911.5,502.5L911.0,502.3L909.9,502.0L908.8,501.5L907.8,500.9L907.1,500.5L905.4,499.2L905.4,499.2L902.7,497.2L902.7,497.2L899.9,495.4L899.9,495.4L897.1,493.6L897.1,493.5L894.3,491.8L894.3,491.8L891.4,490.1L891.4,490.1L888.4,488.4L888.4,488.4L885.4,486.8L885.4,486.8L882.3,485.3L882.3,485.3L879.2,483.8L879.2,483.8L876.1,482.4L876.1,482.4L872.9,481.1L872.9,481.1L869.7,479.8L869.7,479.8L866.4,478.5L866.4,478.5L863.1,477.4L863.1,477.4L859.8,476.3L859.8,476.3L856.4,475.2L856.4,475.2L853.0,474.2L853.0,474.2L849.6,473.3L849.6,473.3L846.1,472.5L846.1,472.5L842.7,471.7L842.7,471.7L839.1,470.9L839.1,470.9L835.6,470.3L835.6,470.3L832.1,469.7L832.1,469.7L828.5,469.1L828.5,469.1L827.2,469.0L826.3,468.8L826.2,468.8L827.2,468.9L828.7,469.1L831.0,469.4L846.4,471.6L852.0,457.3L853.4,454.2L854.4,451.9L855.5,449.8L856.3,448.4L857.0,447.5L857.7,446.9L859.1,446.0L859.7,445.7L864.2,446.5L869.4,447.6L873.8,448.6L878.4,449.8L883.1,451.1L887.3,452.3L890.8,453.4L894.4,454.8L896.8,455.7L897.0,456.1L897.5,457.6L897.8,459.2L898.0,461.6L897.9,464.8L897.9,468.1L897.9,471.4L897.9,475.4L897.8,485.8L906.4,493.4Z"/><path d="M909.6,501.2L911.5,507.6L910.9,507.4L909.8,507.0L908.7,506.5L907.7,506.0L907.0,505.5L905.3,504.2L905.3,504.2L902.6,502.3L902.6,502.3L899.9,500.4L899.9,500.4L897.1,498.6L897.1,498.6L894.3,496.9L894.3,496.9L891.4,495.1L891.4,495.1L888.4,493.5L888.4,493.5L885.4,491.9L885.4,491.9L882.4,490.4L882.4,490.4L879.3,488.9L879.3,488.9L876.1,487.5L876.1,487.5L873.0,486.1L872.9,486.1L869.7,484.8L869.7,484.8L866.5,483.6L866.5,483.6L863.2,482.4L863.2,482.4L859.9,481.3L859.9,481.3L856.5,480.3L856.5,480.3L853.1,479.3L853.1,479.3L849.7,478.4L849.7,478.4L846.2,477.5L846.2,477.5L842.8,476.7L842.8,476.7L839.3,476.0L839.3,476.0L835.8,475.3L835.8,475.3L832.2,474.7L832.2,474.7L828.7,474.2L828.7,474.2L827.4,474.0L826.5,473.9L826.4,473.9L827.3,474.0L828.9,474.2L831.1,474.5L846.5,476.7L852.1,462.4L853.4,459.2L854.5,457.0L855.6,454.9L856.4,453.4L857.1,452.5L857.7,452.0L859.2,451.0L859.7,450.8L864.2,451.6L869.5,452.7L873.8,453.7L878.4,454.8L883.1,456.1L887.3,457.4L890.8,458.5L894.4,459.8L896.7,460.8L896.9,461.1L897.5,462.6L897.7,464.3L897.9,466.7L897.9,469.9L897.9,473.2L897.9,476.5L897.8,480.5L897.8,490.9L906.4,498.5Z"/></clipPath>
<g clip-path="url(#pk)">
<path d="M909.6,501.2L911.5,507.6L910.9,507.4L909.8,507.0L908.7,506.5L907.7,506.0L907.0,505.5L905.3,504.2L905.3,504.2L902.6,502.3L902.6,502.3L899.9,500.4L899.9,500.4L897.1,498.6L897.1,498.6L894.3,496.9L894.3,496.9L891.4,495.1L891.4,495.1L888.4,493.5L888.4,493.5L885.4,491.9L885.4,491.9L882.4,490.4L882.4,490.4L879.3,488.9L879.3,488.9L876.1,487.5L876.1,487.5L873.0,486.1L872.9,486.1L869.7,484.8L869.7,484.8L866.5,483.6L866.5,483.6L863.2,482.4L863.2,482.4L859.9,481.3L859.9,481.3L856.5,480.3L856.5,480.3L853.1,479.3L853.1,479.3L849.7,478.4L849.7,478.4L846.2,477.5L846.2,477.5L842.8,476.7L842.8,476.7L839.3,476.0L839.3,476.0L835.8,475.3L835.8,475.3L832.2,474.7L832.2,474.7L828.7,474.2L828.7,474.2L827.4,474.0L826.5,473.9L826.4,473.9L827.3,474.0L828.9,474.2L831.1,474.5L846.5,476.7L852.1,462.4L853.4,459.2L854.5,457.0L855.6,454.9L856.4,453.4L857.1,452.5L857.7,452.0L859.2,451.0L859.7,450.8L864.2,451.6L869.5,452.7L873.8,453.7L878.4,454.8L883.1,456.1L887.3,457.4L890.8,458.5L894.4,459.8L896.7,460.8L896.9,461.1L897.5,462.6L897.7,464.3L897.9,466.7L897.9,469.9L897.9,473.2L897.9,476.5L897.8,480.5L897.8,490.9L906.4,498.5Z" fill="url(#tg)"/>
<path d="M826.2,468.8L827.2,468.9L828.7,469.1L831.0,469.4L834.1,469.9L837.1,470.3L840.2,470.7L843.3,471.2L846.4,471.6L846.5,476.7L843.5,476.2L840.4,475.8L837.3,475.4L834.2,474.9L831.1,474.5L828.9,474.2L827.3,474.0L826.4,473.9Z" fill="#b983df" stroke="#b983df" stroke-width="0.7"/>
<path d="M846.4,471.6L847.2,469.6L848.0,467.5L848.8,465.5L849.6,463.4L850.4,461.4L851.2,459.4L852.0,457.3L852.1,462.4L851.3,464.4L850.5,466.5L849.7,468.5L848.9,470.5L848.1,472.6L847.3,474.6L846.5,476.7Z" fill="#6c5c77" stroke="#6c5c77" stroke-width="0.7"/>
<path d="M852.0,457.3L852.7,455.7L853.4,454.2L853.4,459.2L852.8,460.8L852.1,462.4Z" fill="#6f5e7b" stroke="#6f5e7b" stroke-width="0.7"/>
<path d="M853.4,454.2L854.4,451.9L854.5,457.0L853.4,459.2Z" fill="#735f80" stroke="#735f80" stroke-width="0.7"/>
<path d="M854.4,451.9L855.5,449.8L855.6,454.9L854.5,457.0Z" fill="#766185" stroke="#766185" stroke-width="0.7"/>
<path d="M855.5,449.8L856.3,448.4L856.4,453.4L855.6,454.9Z" fill="#7a638a" stroke="#7a638a" stroke-width="0.7"/>
<path d="M856.3,448.4L857.0,447.5L857.1,452.5L856.4,453.4Z" fill="#886a9d" stroke="#886a9d" stroke-width="0.7"/>
<path d="M857.0,447.5L857.7,446.9L857.7,452.0L857.1,452.5Z" fill="#9671b0" stroke="#9671b0" stroke-width="0.7"/>
<path d="M857.7,446.9L859.1,446.0L859.2,451.0L857.7,452.0Z" fill="#a478c3" stroke="#a478c3" stroke-width="0.7"/>
<path d="M859.1,446.0L859.7,445.7L859.7,450.8L859.2,451.0Z" fill="#ab7ccc" stroke="#ab7ccc" stroke-width="0.7"/>
<path d="M859.7,445.7L861.9,446.1L864.2,446.5L866.8,447.0L869.4,447.6L871.6,448.1L873.8,448.6L873.8,453.7L871.7,453.2L869.5,452.7L866.8,452.1L864.2,451.6L862.0,451.2L859.7,450.8Z" fill="#b983df" stroke="#b983df" stroke-width="0.7"/>
<path d="M873.8,448.6L876.1,449.2L878.4,449.8L880.7,450.4L883.1,451.1L885.2,451.7L887.3,452.3L889.0,452.9L890.8,453.4L890.8,458.5L889.0,457.9L887.3,457.4L885.2,456.8L883.1,456.1L880.7,455.5L878.4,454.8L876.1,454.3L873.8,453.7Z" fill="#b581da" stroke="#b581da" stroke-width="0.7"/>
<path d="M890.8,453.4L892.6,454.1L894.4,454.8L894.4,459.8L892.6,459.2L890.8,458.5Z" fill="#b27fd6" stroke="#b27fd6" stroke-width="0.7"/>
<path d="M894.4,454.8L896.8,455.7L896.7,460.8L894.4,459.8Z" fill="#ae7dd1" stroke="#ae7dd1" stroke-width="0.7"/>
<path d="M896.8,455.7L897.0,456.1L896.9,461.1L896.7,460.8Z" fill="#766185" stroke="#766185" stroke-width="0.7"/>
<path d="M897.0,456.1L897.5,457.6L897.5,462.6L896.9,461.1Z" fill="#685a72" stroke="#685a72" stroke-width="0.7"/>
<path d="M897.5,457.6L897.8,459.2L897.7,464.3L897.5,462.6Z" fill="#5a535f" stroke="#5a535f" stroke-width="0.7"/>
<path d="M897.8,459.2L898.0,461.6L897.9,466.7L897.7,464.3Z" fill="#535055" stroke="#535055" stroke-width="0.7"/>
<path d="M898.0,461.6L897.9,463.2L897.9,464.8L897.9,466.5L897.9,468.1L897.9,469.8L897.9,471.4L897.9,473.4L897.9,475.4L897.9,477.5L897.8,479.5L897.8,481.6L897.8,483.7L897.8,485.8L897.8,490.9L897.8,488.8L897.8,486.7L897.8,484.6L897.8,482.5L897.8,480.5L897.8,478.5L897.9,476.5L897.9,474.8L897.9,473.2L897.9,471.5L897.9,469.9L897.9,468.3L897.9,466.7Z" fill="#4c4c4c" stroke="#4c4c4c" stroke-width="0.7"/>
<path d="M897.8,485.8L899.5,487.3L901.2,488.8L903.0,490.4L904.7,491.9L906.4,493.4L908.1,494.8L909.7,496.2L909.6,501.2L908.0,499.9L906.4,498.5L904.6,497.0L902.9,495.4L901.2,493.9L899.5,492.4L897.8,490.9Z" fill="#9671b0" stroke="#9671b0" stroke-width="0.7"/>
<path d="M909.7,496.2L910.3,498.3L910.9,500.4L911.5,502.5L911.5,507.6L910.8,505.4L910.2,503.3L909.6,501.2Z" fill="#65586d" stroke="#65586d" stroke-width="0.7"/>
</g>
<path d="M758.3,751.2L759.9,751.5L761.4,751.7L763.0,751.9L764.6,752.1L766.1,752.4L767.7,752.5L769.3,752.7L770.8,752.9L772.4,753.1L774.0,753.2L775.6,753.3L777.2,753.5L778.8,753.6L780.4,753.7L782.0,753.7L783.6,753.8L785.2,753.9L786.8,753.9L788.4,753.9L790.0,754.0L791.6,754.0L793.2,754.0L794.8,754.0L796.4,753.9L798.0,753.9L799.6,753.8L801.2,753.8L802.8,753.7L804.4,753.6L806.0,753.5L807.6,753.4L809.2,753.3L810.8,753.1L812.4,753.0L814.0,752.8L815.6,752.6L817.2,752.4L818.8,752.2L820.4,752.0L822.0,751.8L823.6,751.5L825.2,751.3L826.7,751.0L828.3,750.8L829.9,750.5L831.5,750.2L833.1,749.9L834.6,749.5L836.2,749.2L837.7,748.8L839.3,748.5L840.8,748.1L842.4,747.7L843.9,747.3L845.5,746.9L847.0,746.5L848.5,746.1L850.1,745.6L851.6,745.2L853.1,744.7L854.6,744.2L856.1,743.8L857.6,743.3L859.1,742.8L860.6,742.2L862.1,741.7L863.5,741.2L865.0,740.6L866.5,740.0L867.9,739.5L869.4,738.9L870.8,738.3L872.2,737.7L873.7,737.1L875.1,736.4L876.5,735.8L877.9,735.1L879.3,734.5L880.7,733.8L882.0,733.1L883.4,732.4L884.8,731.7L886.1,731.0L887.5,730.3L888.8,729.6L890.1,728.8L891.4,728.1L892.7,727.3L894.0,726.6L895.3,725.8L896.6,725.0L897.9,724.2L899.1,723.4L900.4,722.6L901.6,721.8L902.9,720.9L904.1,720.1L905.3,719.2L906.5,718.4L907.7,717.5L908.9,716.6L910.0,715.7L911.2,714.9L912.3,714.0L913.5,713.1L914.6,712.1L915.7,711.2L916.8,710.3L917.9,709.4L919.0,708.4L920.0,707.5L921.1,706.5L922.1,705.5L923.2,704.6L924.2,703.6L925.2,702.6L926.2,701.6L927.2,700.6L928.1,699.6L929.1,698.6L930.0,697.6L931.0,696.5L931.9,695.5L932.8,694.5L933.7,693.4L934.6,692.4L935.5,691.3L936.3,690.3L937.2,689.2L938.0,688.1L938.8,687.0L939.6,686.0L940.4,684.9L941.2,683.8L942.0,682.7L942.7,681.6L943.5,680.5L944.2,679.4L944.9,678.3L945.6,677.2L946.3,676.0L947.0,674.9L947.6,673.8L948.3,672.6L948.9,671.5L949.5,670.4L950.1,669.2L950.7,668.1L951.3,666.9L951.9,665.8L952.4,664.6L953.0,663.5L953.5,662.3L954.0,661.1L954.5,660.0L955.0,658.8L955.4,657.6L955.9,656.5L956.3,655.3L956.8,654.1L957.2,652.9L957.6,651.8L958.0,650.6L958.3,649.4L958.7,648.2L959.0,647.0L959.4,645.8L959.7,644.7L960.0,643.5L960.3,642.3L960.5,641.1L960.8,639.9L961.0,638.7L961.3,637.5L961.5,636.3L961.7,635.1L961.9,633.9L962.0,632.7L962.2,631.6L962.3,630.4L962.5,629.2L962.5,629.2L962.8,627.2L962.8,627.2L963.2,624.5L963.2,624.4L963.6,622.2L963.9,619.9L963.9,619.9L964.5,616.7L964.8,614.3L965.0,613.5L965.5,610.5L965.5,610.5L965.5,610.4L965.5,610.4L965.5,610.4L965.5,610.3L965.6,610.3L965.6,610.3L965.6,610.2L965.7,610.2L965.7,610.2L965.7,610.2L965.8,610.2L965.8,610.2L969.2,609.7L972.8,609.1L972.8,609.1L974.9,608.8L976.9,608.5L976.9,608.5L980.3,607.9L980.3,607.9L983.7,607.2L983.7,607.2L987.2,606.4L987.2,606.4L990.9,605.6L990.9,605.6L994.6,604.6L994.6,604.6L996.6,604.0L998.5,603.4L998.5,603.4L1000.5,602.8L1002.5,602.2L1002.5,602.2L1004.6,601.5L1006.6,600.9L1006.6,600.9L1008.6,600.2L1010.6,599.5L1010.6,599.5L1012.6,598.8L1014.6,598.1L1014.6,598.1L1016.6,597.3L1018.6,596.6L1018.6,596.6L1020.5,595.7L1022.5,594.9L1022.5,594.9L1024.3,594.0L1026.2,593.2L1026.2,593.2L1028.0,592.2L1029.9,591.3L1029.9,591.3L1031.6,590.3L1033.4,589.2L1033.4,589.2L1036.6,587.1L1036.6,587.1L1039.6,584.8L1039.6,584.8L1042.4,582.5L1042.4,582.5L1044.9,580.0L1044.9,580.0L1047.2,577.3L1047.2,577.3L1049.3,574.6L1049.3,574.6L1051.2,571.7L1051.3,571.7L1053.0,568.7L1053.0,568.7L1054.4,565.5L1054.4,565.5L1055.4,562.2L1055.4,562.2L1055.9,560.0L1056.3,557.8L1056.3,557.8L1056.5,555.8L1056.7,553.8L1056.9,551.7L1057.1,549.7L1057.3,547.7L1057.5,545.6L1057.7,543.6L1057.9,541.5L1058.1,539.5L1058.3,537.5L1058.5,535.4L1058.7,533.4L1058.9,531.3L1059.1,529.3L1059.3,527.2L1059.5,525.2L1059.7,523.2L1057.5,521.9L1055.3,520.6L1053.1,519.3L1050.8,517.9L1050.8,517.9L1048.3,516.3L1045.7,514.7L1045.7,514.7L1043.5,513.2L1041.3,511.7L1041.3,511.7L1039.0,510.1L1036.7,508.4L1036.7,508.4L1034.3,506.6L1031.9,504.8L1031.9,504.8L1029.5,502.9L1027.1,501.1L1027.1,501.1L1024.7,499.2L1022.3,497.3L1022.3,497.3L1019.9,495.4L1017.5,493.5L1017.5,493.5L1015.0,491.5L1012.6,489.6L1010.3,487.8L1008.0,485.9L1008.0,485.9L1005.7,484.2L1003.5,482.5L1003.5,482.5L1001.3,480.9L999.1,479.3L999.1,479.3L997.0,477.8L994.9,476.3L994.9,476.3L992.9,475.1L990.9,473.8L990.9,473.8L988.9,472.9L987.0,472.0L987.0,472.0L983.3,470.7L983.3,470.7L979.7,470.0L979.7,470.0L976.2,469.6L976.2,469.6L973.0,469.6L973.0,469.6L969.8,470.0L969.8,470.0L966.8,470.7L966.8,470.7L963.7,471.8L963.7,471.8L960.4,473.4L960.4,473.4L956.9,475.4L956.9,475.4L955.1,476.6L953.3,477.8L953.3,477.8L951.4,479.1L949.4,480.5L949.4,480.5L947.3,482.1L945.2,483.6L945.2,483.6L942.4,485.8L939.5,488.0L937.7,489.4L935.9,490.9L934.1,492.3L932.3,493.7L930.6,495.1L928.8,496.4L928.8,496.5L928.8,496.5L928.7,496.5L928.7,496.5L928.6,496.5L928.6,496.5L928.6,496.5L928.5,496.5L928.5,496.5L928.4,496.5L928.4,496.5L928.4,496.5L926.1,495.1L923.7,493.7L923.7,493.7L920.9,491.8L920.9,491.8L918.6,490.1L918.6,490.0L915.6,487.5L915.5,487.5L912.7,485.0L910.0,482.7L910.0,482.6L910.0,482.6L910.0,482.6L909.9,482.5L909.9,482.5L909.9,482.5L909.9,482.4L909.9,482.4L909.9,482.4L909.9,479.0L909.9,475.4L909.9,473.0L909.9,470.6L909.9,468.2L909.9,464.8L909.9,461.4L909.9,461.4L909.7,458.4L909.7,458.4L909.2,455.9L908.3,453.4L907.3,451.5L906.2,449.6L903.1,448.3L899.9,447.1L899.9,447.1L897.9,446.3L895.8,445.6L895.8,445.6L893.9,445.0L891.9,444.3L891.9,444.3L889.7,443.7L887.5,443.0L887.5,443.0L885.0,442.3L882.5,441.7L882.5,441.7L880.0,441.0L877.6,440.4L877.6,440.4L875.3,439.9L872.9,439.3L872.9,439.3L870.1,438.8L867.3,438.2L867.3,438.2L864.9,437.7L862.4,437.3L860.0,436.9L857.5,436.4L854.7,437.8L851.9,439.2L851.9,439.2L849.1,441.0L847.3,442.7L845.7,444.6L844.5,446.8L844.5,446.8L843.3,449.1L843.3,449.1L842.1,451.6L842.1,451.6L840.6,455.0L840.6,455.0L839.4,458.1L838.2,461.1L838.2,461.2L838.1,461.2L838.1,461.2L838.1,461.2L838.1,461.3L838.0,461.3L838.0,461.3L838.0,461.3L837.9,461.3L837.9,461.4L837.9,461.4L837.8,461.4L837.8,461.4L837.8,461.4L835.6,461.1L833.5,460.8L831.1,460.4L829.4,460.2L827.8,460.0L826.4,459.9L825.0,459.8L823.5,459.6L822.1,459.5L820.7,459.4L819.2,459.3L817.8,459.2L816.4,459.1L814.9,459.1L813.5,459.0L812.1,458.9L810.6,458.9L809.2,458.9L807.8,458.8L806.3,458.8L804.9,458.8L803.4,458.8L802.0,458.8L800.6,458.8L799.1,458.9L797.7,458.9L796.3,458.9L794.8,459.0L793.4,459.0L791.9,459.1L790.5,459.2L789.1,459.3L787.6,459.4L786.2,459.5L784.8,459.6L783.3,459.7L781.9,459.9L780.5,460.0L779.0,460.1L777.6,460.3L776.2,460.5L774.7,460.6L773.3,460.8L771.9,461.0L770.5,461.2L769.0,461.4L767.6,461.7L766.2,461.9L764.8,462.1L763.4,462.4L762.0,462.6L760.5,462.9L759.1,463.2L757.7,463.4L756.3,463.7L754.9,464.0L753.5,464.3L752.1,464.7L750.7,465.0L749.3,465.3L747.9,465.7L746.5,466.0L745.2,466.4L743.8,466.7L742.4,467.1L741.0,467.5L739.6,467.9L738.3,468.3L736.9,468.7L735.5,469.1L734.2,469.5L732.8,470.0L731.5,470.4L730.1,470.9L728.8,471.3L727.4,471.8L726.1,472.3L724.7,472.8L723.4,473.3L722.1,473.8L720.8,474.3L719.4,474.8L718.1,475.3M668.8,503.9L667.7,504.7L666.7,505.6L665.6,506.5L664.6,507.4L663.5,508.2L662.5,509.1L661.5,510.0L660.5,510.9L659.4,511.9L658.4,512.8L657.5,513.7L656.5,514.6L655.5,515.6L654.5,516.5L653.6,517.5L652.6,518.5L651.7,519.4L650.8,520.4L649.8,521.4L648.9,522.4L648.0,523.4L647.1,524.4L646.3,525.4L645.4,526.4L644.5,527.4L643.7,528.4L643.7,528.4L642.4,529.9L642.4,529.9L640.8,531.9L640.8,531.9L639.4,533.4L638.1,535.0L638.1,535.0L636.7,536.6L635.3,538.2L632.8,541.1L632.7,541.2L632.7,541.2L632.7,541.2L632.6,541.2L632.6,541.3L632.6,541.3L632.5,541.3L632.5,541.3L632.5,541.3L632.4,541.3L632.4,541.3L632.3,541.3L632.3,541.2L632.3,541.2L632.2,541.2L632.2,541.2L630.3,539.6L628.2,537.8L628.2,537.8L625.7,535.8L625.7,535.8L623.5,534.1L621.2,532.3L618.7,530.4L618.7,530.4L616.1,528.5L616.1,528.5L613.5,526.6L613.5,526.6L611.7,525.5L610.0,524.3L606.9,522.2L604.0,520.3L604.0,520.2L604.0,520.2L603.9,520.2L603.9,520.1L603.9,520.1L603.9,520.1L603.9,520.0L603.8,520.0L603.4,517.2L603.0,514.4L602.4,511.0L602.4,511.0L601.8,508.1L601.8,508.1L601.0,504.9L601.0,504.9L600.1,501.4L600.1,501.4L599.2,498.2L599.2,498.2L598.2,495.1L598.2,495.0L597.3,492.1L597.3,492.1L596.3,489.3L596.3,489.2L595.5,486.4L595.5,486.3L594.7,483.4L594.7,483.4L594.0,480.3L594.0,480.3L593.3,477.2L593.3,477.2L592.7,473.9L592.7,473.9L592.1,470.5L592.1,470.5L591.5,466.9L591.5,466.9L590.8,463.1L590.2,459.5L589.6,456.1L589.0,452.8L588.3,449.7L588.3,449.7L587.5,446.7L587.5,446.7L586.4,443.9L586.4,443.9L585.1,441.3L585.1,441.3L583.5,438.8L583.5,438.8L581.8,436.5L581.8,436.5L580.0,434.5L580.0,434.5L577.9,432.8L577.9,432.7L575.7,431.2L575.7,431.2L573.5,429.8L573.5,429.8L571.1,428.7L571.1,428.7L568.7,427.7L568.7,427.7L566.2,426.8L566.2,426.8L563.7,426.2L563.7,426.2L561.2,425.8L561.2,425.8L558.8,425.6L558.7,425.6L556.3,425.6L556.3,425.6L553.3,425.8L553.3,425.8L549.9,426.2L549.9,426.2L546.0,426.8L546.0,426.8L543.8,427.2L541.6,427.7L539.2,428.1L536.7,428.6L534.1,429.1L531.4,429.6L528.6,430.2L525.7,430.8L522.5,431.4L519.4,432.0L516.3,432.7L513.2,433.3L510.0,434.0L506.9,434.6L503.8,435.3L500.7,436.0L497.5,436.7L494.4,437.5L494.4,437.5L491.6,438.2L488.8,438.9L488.8,438.9L486.3,439.7L483.8,440.5L483.8,440.5L481.6,441.3L479.4,442.1L479.4,442.1L477.6,443.0L475.7,443.8L475.7,443.8L472.3,445.6L472.3,445.6L469.4,447.4L469.4,447.4L466.8,449.2L466.8,449.2L464.6,451.1L464.6,451.1L462.7,452.9L462.7,452.9L461.1,454.8L461.1,454.8L459.8,456.7L459.8,456.7L458.7,458.5L458.7,458.5L457.9,460.5L457.5,462.5L457.3,464.5L457.3,464.6L457.4,466.7L457.4,466.7L457.7,468.8L457.7,468.8L458.0,470.9L458.0,470.9L458.6,473.3L459.1,475.7L459.7,478.0L459.7,478.1L459.7,478.1L459.7,478.2L459.7,478.2L459.7,478.2L459.7,478.3L459.6,478.3L459.6,478.3L459.6,478.4L459.6,478.4L459.5,478.4L459.5,478.5L457.3,480.0L454.4,482.0L454.4,482.0L451.3,484.4L451.3,484.4L448.8,486.6L448.8,486.6L446.3,489.0L446.3,489.0L443.8,491.6L443.8,491.6L441.4,494.3L441.4,494.3L439.1,497.1L439.1,497.1L436.8,500.0L436.8,500.0L434.7,503.0L434.7,503.0L432.7,505.8L432.7,505.8L431.0,508.4L431.0,508.4L429.2,511.4L429.2,511.4L427.8,513.9L426.5,516.2L426.4,516.3L426.4,516.3L426.4,516.3L426.3,516.4L426.3,516.4L426.3,516.4L426.2,516.4L426.2,516.4L422.4,517.4L420.4,517.8L418.4,518.3L416.4,518.8L414.4,519.3L411.6,520.0L408.7,520.7L408.7,520.7L405.4,521.6L405.4,521.6L403.0,522.4L403.0,522.4L401.6,523.0L400.2,523.6L398.9,524.2L397.5,524.9L396.1,525.5L394.8,526.2L393.4,526.8L392.0,527.5L390.7,528.2L389.3,528.9L388.0,529.6L386.7,530.3L385.3,531.0L384.0,531.8L382.7,532.5L381.4,533.3L380.1,534.0L378.8,534.8L377.5,535.6L376.2,536.4L374.9,537.2L373.7,538.0L372.4,538.8L371.1,539.6L369.9,540.5L368.6,541.3L367.4,542.1L366.2,543.0L365.0,543.9L363.7,544.7L362.5,545.6L361.3,546.5L360.1,547.4L359.0,548.3L357.8,549.2L356.6,550.2L355.5,551.1L354.3,552.0L353.2,553.0L352.0,553.9L350.9,554.9L349.8,555.9L348.7,556.8L347.5,557.8L346.5,558.8L345.4,559.8L344.3,560.8L343.2,561.8L342.2,562.8L341.1,563.9L340.1,564.9L339.0,565.9L338.0,567.0L337.0,568.0L336.0,569.1L335.0,570.1L334.0,571.2L333.0,572.3L332.0,573.3L331.0,574.4L330.1,575.5L329.1,576.6L328.2,577.7L327.3,578.8L326.3,579.9L325.4,581.0L324.5,582.2L323.6,583.3L322.8,584.4L321.9,585.6L321.0,586.7L320.1,587.8L319.3,589.0L318.5,590.2L317.6,591.3L316.8,592.5L316.0,593.7L315.2,594.8L314.4,596.0L313.6,597.2L312.8,598.4L312.1,599.6L311.3,600.8L310.6,602.0L310.6,602.0L309.8,603.2L309.1,604.4L308.4,605.7L307.7,606.9L307.0,608.1L306.3,609.3L305.6,610.6L304.9,611.8L304.3,613.1L303.6,614.3L303.0,615.6L302.4,616.8L301.8,618.1L301.2,619.4L300.7,620.6L300.1,621.9L299.6,623.2L299.0,624.5L298.5,625.8L298.1,627.0L297.6,628.3L297.6,628.3L297.1,629.6L297.1,629.6L296.7,630.9L296.7,630.9L296.3,632.2L296.3,632.2L295.9,633.5L295.9,633.5L295.6,634.8L295.6,634.8L295.2,636.1L295.2,636.1L294.9,637.4L294.9,637.4L294.6,638.7L294.6,638.7L294.3,640.1L294.3,640.1L294.0,641.4L294.0,641.4L293.8,642.7L293.8,642.7L293.6,644.0L293.6,644.0L293.4,645.3L293.4,645.3L293.2,646.6L293.2,646.6L293.1,647.9L293.1,647.9L293.0,649.2L293.0,649.2L292.9,650.5L292.9,650.5L292.9,651.8L292.9,651.8L292.9,653.1L292.9,653.1L292.9,654.4L292.9,654.4L292.9,655.7L292.9,655.7L293.0,656.9L293.0,656.9L293.1,658.2L293.1,658.2L293.2,659.5L293.2,659.5L293.4,660.7L293.4,660.7L293.6,662.0L293.6,662.0L293.8,663.2L293.8,663.2L294.1,664.5L294.1,664.5L294.4,665.7L294.4,665.7L294.8,666.9L294.8,666.9L295.1,668.1L295.1,668.2L295.5,669.4L295.5,669.4L296.0,670.6L296.7,672.6L297.4,674.6L298.1,676.6L298.9,678.7L299.6,680.7L300.3,682.7L301.0,684.7L301.8,686.8L302.5,688.8L303.2,690.8L303.9,692.8L304.7,694.9L305.4,696.9L305.8,698.1L305.8,698.1L306.3,699.2L306.3,699.2L306.8,700.4L307.3,701.6L307.8,702.7L308.3,703.9L308.9,705.0L309.4,706.2L309.9,707.3L310.5,708.4L311.1,709.5L311.6,710.7L312.2,711.8L312.7,712.9L313.3,714.0L313.9,715.1L314.5,716.2L315.0,717.3L315.6,718.4L316.2,719.5L316.8,720.6L317.4,721.7L318.0,722.8L318.6,723.8L319.2,724.9L319.8,726.0L320.4,727.1L321.0,728.2L321.6,729.2L322.2,730.3L322.8,731.4L323.5,732.4L324.1,733.5L324.8,734.5L325.4,735.6L326.1,736.6L326.7,737.7L327.4,738.7L328.1,739.8L328.8,740.8L329.5,741.8L330.2,742.9L330.9,743.9L331.6,744.9L332.3,745.9L333.1,747.0L333.8,748.0L334.5,749.0L335.3,750.0L336.1,751.0L336.9,752.0L337.6,753.0L338.4,754.0L339.3,755.0L340.1,755.9L340.9,756.9L341.7,757.9L342.6,758.8L343.4,759.8L344.3,760.8L345.2,761.7L346.1,762.7L347.0,763.6L347.9,764.5L348.8,765.5L349.7,766.4L350.7,767.3L351.6,768.2L352.6,769.1L353.6,770.0L354.6,770.9L355.5,771.8L356.6,772.7L357.6,773.5L358.6,774.4L359.6,775.3L360.7,776.1L361.7,777.0L362.8,777.8L363.9,778.6L365.0,779.4L366.1,780.3L367.2,781.1L368.3,781.9L369.5,782.7L370.6,783.4L371.8,784.2L373.0,785.0L374.2,785.8L375.3,786.5L376.6,787.2L377.8,788.0L379.0,788.7L380.2,789.4L381.5,790.1L382.7,790.8L384.0,791.5L385.3,792.2L386.6,792.9L387.9,793.5L389.2,794.2L390.5,794.8L391.9,795.4L393.2,796.0L394.6,796.6L396.0,797.2L397.3,797.8L398.7,798.4L400.1,799.0L401.5,799.5L403.0,800.0L404.4,800.6L405.8,801.1L407.3,801.6L408.7,802.1L410.2,802.6L411.7,803.0L413.2,803.5L414.7,803.9L416.2,804.3L417.7,804.8L419.2,805.2L420.8,805.6L422.3,805.9L423.8,806.3L425.4,806.6L427.0,807.0L428.5,807.3L430.1,807.6L431.7,807.9L433.3,808.2L434.9,808.4L436.5,808.7L438.2,808.9L439.8,809.1L441.4,809.3L443.1,809.5L444.7,809.7L446.4,809.9L448.0,810.0L449.7,810.1L451.3,810.3L453.0,810.4L454.7,810.4L456.4,810.5L458.1,810.6L459.8,810.6L461.4,810.6L463.1,810.6L464.9,810.6L466.6,810.6L468.3,810.5L470.0,810.5L471.7,810.4L473.4,810.3L475.1,810.2L476.8,810.0L478.6,809.9L480.3,809.7L482.0,809.6L483.7,809.4L485.5,809.2L487.2,808.9L488.9,808.7L490.6,808.4L492.3,808.1L494.1,807.9L495.8,807.5L497.5,807.2L499.2,806.9L500.9,806.5L502.6,806.1L504.3,805.7L506.0,805.3L507.7,804.9L509.4,804.5L511.1,804.0L512.8,803.5L514.5,803.0L516.2,802.5L517.8,802.0L519.5,801.5L521.1,800.9L522.8,800.3L524.4,799.8L526.1,799.2L527.7,798.6L529.3,798.0L531.0,797.3L532.6,796.7L534.2,796.0L535.8,795.3L537.4,794.7L539.0,794.0L540.5,793.2L542.1,792.5L543.7,791.8L545.2,791.0L546.7,790.3L548.3,789.5L549.8,788.7L551.3,788.0L552.8,787.2L554.3,786.3L555.8,785.5L557.3,784.7L558.7,783.8L560.2,783.0L561.6,782.1L563.1,781.3L564.5,780.4L565.9,779.5L567.3,778.6L568.7,777.7L570.1,776.8L571.5,775.9L572.9,775.0L574.2,774.0L575.6,773.1L576.9,772.1L578.2,771.2L579.5,770.2L580.8,769.2L582.1,768.3L583.4,767.3L584.7,766.3L585.9,765.3L587.2,764.3L588.4,763.3L589.7,762.3L590.9,761.3L592.1,760.2L593.3,759.2L594.5,758.2L595.7,757.1L596.8,756.1L598.0,755.1L599.1,754.0L600.3,752.9L601.4,751.9L602.5,750.8L603.6,749.8L604.7,748.7L605.8,747.6L606.9,746.5L608.0,745.4L609.1,744.4L610.1,743.3L611.2,742.2L612.2,741.1L613.2,740.0L614.2,738.9L615.2,737.8L616.2,736.7L617.2,735.6L618.2,734.4L619.2,733.3L620.2,732.2L621.1,731.1L622.1,730.0L623.0,728.8L623.9,727.7L624.9,726.6L625.8,725.4L626.7,724.3L627.6,723.2L628.5,722.0L629.4,720.9L630.3,719.8L631.1,718.6L632.0,717.5L632.9,716.3L633.7,715.2L634.6,714.0L635.4,712.8L636.3,711.7L637.1,710.5L637.9,709.4L638.7,708.2L638.7,708.2L640.0,706.3L640.0,706.3L641.6,703.7L643.0,701.5L644.3,699.3L645.7,697.1L647.1,694.8L648.4,692.7L649.7,690.5L649.8,690.5L649.8,690.5L649.8,690.5L649.8,690.4L649.9,690.4L649.9,690.4L650.0,690.4L650.0,690.4L650.0,690.4L650.1,690.4L650.1,690.4L650.1,690.4L650.2,690.4L650.2,690.4L650.3,690.4L650.3,690.4L650.3,690.4L653.2,692.8L654.8,694.1L656.3,695.4L656.3,695.4L659.3,698.0L659.3,698.0L661.2,699.6L661.2,699.6L662.5,700.9L662.5,701.0L663.4,701.9L664.3,702.9L665.2,703.9L666.1,704.8L667.0,705.8L667.9,706.7L668.9,707.7L669.8,708.6" fill="none" stroke="#1e78f5" stroke-width="2.7" stroke-linejoin="round" stroke-linecap="butt"/><g id="handles">
<path d="M674,462 L685.5,566" stroke="#1e6fe8" stroke-width="1.6" fill="none"/>
<path d="M697,576.5 L863,549" stroke="#dc1e28" stroke-width="1.8" fill="none"/>
<path d="M690,591 L711.5,720" stroke="#22a046" stroke-width="1.6" fill="none"/>
<polygon points="659.5,436 681.5,433.2 684.3,460.5 662.5,463" fill="#1e6fe8"/>
<polygon points="676.3,566.5 695,563.8 697.8,588.5 679,591.3" fill="#ffffff"/>
<polygon points="861,536.5 880,533.8 883,558.5 864.5,561.3" fill="#dc1e28"/>
<polygon points="701.3,721.5 721,718.5 724,745 704.5,748" fill="#22a046"/>
</g>
</svg>
<div id="topline"></div>
<div id="icon">
<svg width="91" height="97" viewBox="0 0 91 97">
<path d="M14,0 H52 V20 Q52,30 62,30 H82 V87 Q82,93 76,93 H13 Q7,93 7,87 V42 H36 Q41,42 41,37 V14 Q41,9 36,9 H7 V7 Q7,2 14,0Z" fill="#4044c9"/>
<path d="M56,0 L82,26 H62 Q56,26 56,20Z" fill="#4044c9"/>
<path d="M0,13 H34 Q37,13 37,16 V35 Q37,38 34,38 H0Z" fill="#4044c9"/>
<rect x="20" y="47" width="49" height="4.6" fill="#fff"/>
<rect x="20" y="61.6" width="49" height="4.6" fill="#fff"/>
<rect x="20" y="76" width="49" height="4.6" fill="#fff"/>
<text x="1.5" y="31" font-family="Liberation Sans, sans-serif" font-weight="bold" font-size="12.6" fill="#fff">STL</text>
</svg>
</div>
<div id="panel"></div>
<svg class="abs" style="left:0;top:268px" width="12" height="26" viewBox="0 0 12 26"><path d="M11,-0.5 L-2.5,12.5 L11,25.5" fill="#fff" stroke="#c3c3c3" stroke-width="1"/><rect x="10.5" y="1" width="1.5" height="23" fill="#fff"/></svg>
<div class="ax" style="top:264.2px;color:#e0323c">X</div>
<div class="ax" style="top:305.3px;color:#3aa84a">Y</div>
<div class="ax" style="top:346.7px;color:#2a78e0">Z</div>
<div class="fld" style="left:44px;top:264.2px"><span class="v">261.9376</span><span class="u">mm</span></div>
<div class="fld" style="left:231px;top:264.2px"><span class="v">100</span><span class="u">%</span></div>
<div class="fld" style="left:44px;top:305.3px"><span class="v">149.4698</span><span class="u">mm</span></div>
<div class="fld" style="left:231px;top:305.3px"><span class="v">100</span><span class="u">%</span></div>
<div class="fld" style="left:44px;top:346.7px"><span class="v">16</span><span class="u">mm</span></div>
<div class="fld" style="left:231px;top:346.7px"><span class="v">100</span><span class="u">%</span></div>
<div class="cb" style="top:399px"></div>
<div class="cbl" style="top:400px;letter-spacing:-0.1px">Snap Scaling</div>
<div class="cb" style="top:436px"><svg width="19" height="19" viewBox="0 0 19 19" style="position:absolute;left:0;top:0"><path d="M5.6,9.8 L8.4,12.4 L13.4,7.2" fill="none" stroke="#1a1a2a" stroke-width="2.2"/></svg></div>
<div class="cbl" style="top:437px;letter-spacing:0.24px">Uniform Scaling</div>
<svg class="abs" style="left:60px;top:412px" width="32" height="34" viewBox="0 0 32 34"><path d="M12.9,8.6 A9.7,9.7 0 1 1 6.1,18.9" fill="none" stroke="#191a45" stroke-width="2.4"/><path d="M12.6,3.8 L6.8,9 L13.4,13.4" fill="#191a45" fill-opacity="0.55" stroke="#191a45" stroke-width="2.2" stroke-linejoin="miter"/></svg>
<svg class="abs" style="left:10px;top:685px" width="18" height="16" viewBox="0 0 18 16"><path d="M3,11.5 L8.5,5 L14,11.5" fill="none" stroke="#7a7a7a" stroke-width="1.3"/></svg>
<div class="bl" style="left:43px;top:684px;letter-spacing:0.25px">Object list</div>
<svg class="abs" style="left:10px;top:720px" width="24" height="22" viewBox="0 0 24 22"><path d="M3.5,18.7 H20.5" stroke="#555" stroke-width="1.4" fill="none"/><path d="M5,15.3 L8.2,14.8 L19.2,4.6 L17,2.4 L6,12.6Z" fill="#555"/></svg>
<div class="bl" style="left:51px;top:721px;letter-spacing:-0.35px">STL1270</div>
<div class="bl" style="left:10px;top:754px">261.9 x 149.5 x 16.0 mm</div>
<svg class="abs" style="left:10px;top:790px" width="200" height="36" viewBox="10 790 200 36">
<g fill="none" stroke="#6f6f6f" stroke-width="2.2" stroke-linejoin="round">
<path d="M26.5,795 L37.5,800.5 V813.5 L26.5,819.5 L15.5,813.5 V800.5Z M15.5,800.5 L26.5,806.5 L37.5,800.5 M26.5,806.5 V819.5"/>
<path d="M55.5,801 H72.5 V817.5 H55.5Z" fill="#6f6f6f"/><path d="M55.5,801 L61.5,795.5 H78.5 V812 L72.5,817.5 M72.5,801 L78.5,795.5"/>
<path d="M95.5,801 H112.5 V817.5 H95.5Z"/><path d="M95.5,801 L101.5,795.5 H118.5 L112.5,801Z" fill="#6f6f6f"/><path d="M118.5,795.5 V812 L112.5,817.5"/>
<path d="M141.5,801 H158.5 V817.5 H141.5Z"/><path d="M141.5,801 L135.5,795.5 V812 L141.5,817.5Z" fill="#6f6f6f"/><path d="M135.5,795.5 H152.5 L158.5,801"/>
<path d="M175.5,801 H192.5 V817.5 H175.5Z"/><path d="M192.5,801 L198.5,795.5 V812 L192.5,817.5Z" fill="#6f6f6f"/><path d="M175.5,801 L181.5,795.5 H198.5"/>
</g></svg>
</body></html>
